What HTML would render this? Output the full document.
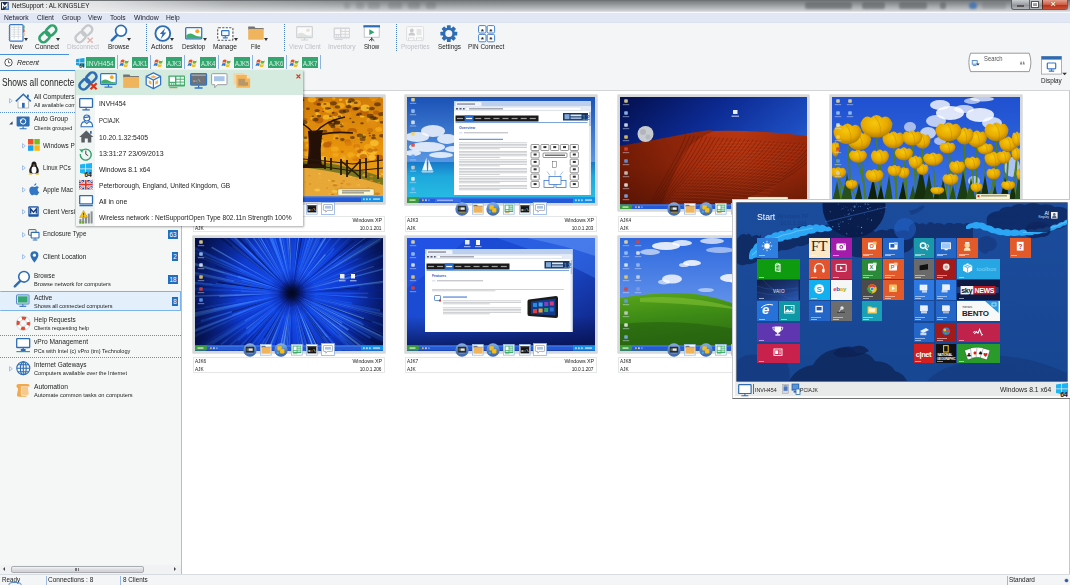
<!DOCTYPE html>
<html>
<head>
<meta charset="utf-8">
<title>NetSupport : AL KINGSLEY</title>
<style>
*{box-sizing:border-box;margin:0;padding:0}
html,body{width:1070px;height:585px;overflow:hidden}
body{position:relative;background:#f4f5f7;font-family:"Liberation Sans",sans-serif;font-size:6.5px;color:#222;line-height:1}
.abs{position:absolute}
svg{position:absolute;overflow:visible}
#title{left:0;top:0;width:1070px;height:12px;background:linear-gradient(180deg,#666a6d 0,#7e8184 12%,#8f9294 32%,#aeb1b3 62%,#cacccf 88%,#e4e6e8 100%)}
#title .glow{left:0;top:1.3px;width:420px;height:10.7px;background:linear-gradient(90deg,rgba(240,241,243,.96) 0,rgba(236,238,240,.88) 100px,rgba(226,228,230,.38) 230px,rgba(220,222,224,0) 420px)}
#title .t{left:13px;top:2.5px;font-size:7px;color:#111;letter-spacing:-.25px;white-space:nowrap}
.blob{position:absolute;top:2px;height:7px;background:#5c5f61;filter:blur(1.2px);border-radius:2px}
#menu{left:0;top:12px;width:1070px;height:11px;background:#e1e7f5;border-top:1px solid #f6f8fc;border-bottom:1px solid #dde3ee}
#menu span{position:absolute;top:1.5px;font-size:6.6px;color:#1b1b2a;letter-spacing:-.1px}
#tool{left:0;top:23px;width:1070px;height:30px}
.tl{position:absolute;top:21.5px;font-size:6.4px;color:#222;text-align:center;width:50px;margin-left:-25px;white-space:nowrap;letter-spacing:-.1px}
.tl.dis{color:#bdbfc6}
.sep{position:absolute;top:1px;width:0;height:27px;border-left:1px dotted #4a7fc0}
.dd{position:absolute;width:0;height:0;border-left:2.7px solid transparent;border-right:2.7px solid transparent;border-top:3.3px solid #333}
#left{left:0;top:71px;width:181px;height:494px;background:#f5f7f7}
#main{left:181px;top:90.2px;width:889px;height:483.8px;background:#fff;border-top:1.7px solid #d2d5d8;border-left:1.5px solid #b9bdc2;border-right:1px solid #c3c7cc}
#status{left:0;top:574px;width:1070px;height:11px;background:#f3f5f6;border-top:1px solid #d8dbdf}
#status span{position:absolute;top:1.5px;font-size:6.5px;color:#222}
.thumb{position:absolute;width:191.6px;border:2px solid #d6d8da;background:#3060c0;overflow:hidden;box-shadow:0 0 0 .5px #c2c5c8}
.thumb svg{left:0;top:0}
.lab{position:absolute;width:191.6px;height:16px;border:1px solid #e4e6e8;background:#fff;font-size:5.8px;color:#222;letter-spacing:-.1px}
.lab i{font-style:normal;position:absolute;white-space:nowrap}
.tree{position:absolute;font-size:6.6px;color:#222;white-space:nowrap;letter-spacing:-.05px}
.tree small{display:block;font-size:5.2px;color:#222;margin-top:3.2px;letter-spacing:0}
.badge{position:absolute;left:168px;width:10px;height:9.5px;background:#1f6fc1;color:#fff;font-size:6.3px;text-align:center;line-height:9.5px}
.arr{position:absolute;width:0;height:0;border-top:2.3px solid transparent;border-bottom:2.3px solid transparent;border-left:2.6px solid #fff;filter:drop-shadow(0 0 .4px #3a6fb5) drop-shadow(0 0 .4px #3a6fb5)}
.dot{position:absolute;left:0;width:181px;height:0;border-top:1px dotted #5a8fd0}
.tab{position:absolute;top:56.5px;height:12px}
.tab b{position:absolute;top:.2px;height:11.8px;background:#33a56f;color:#e8f6ee;font-weight:normal;font-size:6.2px;line-height:10px;text-align:center;letter-spacing:-.2px}
.tabsep{position:absolute;top:55px;width:1px;height:14px;background:#8fb3e0}
#pop{left:75px;top:70px;width:228px;height:156px;background:#fff;box-shadow:1px 1px 2px rgba(0,0,0,.35);border-left:1px solid #c9d8d0}
#pop .hd{left:0;top:0;width:227px;height:24.5px;background:#d5ebe0}
#pop .col{left:0;top:24.5px;width:19px;height:131.5px;background:#f1f5f3}
#pop .r{position:absolute;left:23px;font-size:6.5px;color:#222;white-space:nowrap;letter-spacing:-.1px}
#w8{left:732.3px;top:199px;width:337.7px;height:199.7px;background:#e9eaea;border:1px solid #c6c8ca;border-bottom:1.2px solid #6e7072;border-right:none;box-shadow:inset 0 0 0 2px #fbfbfb}
#w8 .scr{left:3.7px;top:3.3px;width:330px;height:178px;overflow:hidden;background:#174a98;box-shadow:0 0 0 .6px #0c2450}
#w8 .bar{left:1px;top:182px;width:335px;height:15px;font-size:5.6px;color:#222}
</style>
</head>
<body>

<div id="title" class="abs">
<div class="blob" style="left:344px;width:6px;opacity:0.3"></div>
<div class="blob" style="left:356px;width:8px;opacity:0.3"></div>
<div class="blob" style="left:368px;width:12px;opacity:0.3"></div>
<div class="blob" style="left:388px;width:14px;opacity:0.3"></div>
<div class="blob" style="left:408px;width:12px;opacity:0.3"></div>
<div class="blob" style="left:426px;width:10px;opacity:0.3"></div>
<div class="blob" style="left:805px;width:47px;opacity:0.6"></div>
<div class="blob" style="left:862px;width:23px;opacity:0.6"></div>
<div class="blob" style="left:899px;width:28px;opacity:0.6"></div>
<div class="blob" style="left:940px;width:6px;opacity:0.6"></div>
<div class="blob" style="left:969px;width:8px;background:#3b6fb0;border-radius:4px;opacity:.8"></div>
<div class="blob" style="left:982px;width:24px;opacity:.25"></div>
<div class="abs glow"></div>
<svg style="left:1px;top:2px" width="8" height="9" viewBox="0 0 8 9"><rect x="0" y="0" width="7.600" height="8" rx=".6" fill="#1b2c4e"/><path d="M7.600 3v5H3z" fill="#2a7ad8"/><path d="M1.600 6.400V1.800l2.200 2.800 2.200-2.800v4.600" fill="none" stroke="#fff" stroke-width="1.150"/></svg>
<div class="abs" style="left:12.4px;top:1.0px;font-size:7.2px;line-height:10px;white-space:nowrap;transform-origin:0 0;transform:scaleX(0.876);color:#111">NetSupport : AL KINGSLEY</div>
<div class="abs" style="left:1011px;top:0;width:57px;height:9.5px;border:1px solid #5d6164;border-top:none;border-radius:0 0 3px 3px;background:linear-gradient(180deg,#c9cccf,#9da1a5 50%,#8a8e92 51%,#b3b7ba);overflow:hidden"><div class="abs" style="left:17px;top:0;width:1px;height:10px;background:#5d6164"></div><div class="abs" style="left:29.5px;top:0;width:26.5px;height:10px;background:linear-gradient(180deg,#e3a08f,#cf5a41 48%,#b8321a 52%,#d0573c);border-left:1px solid #5d2a22"></div><div class="abs" style="left:5px;top:5px;width:7px;height:2.2px;background:#fff;border:.5px solid #555"></div><div class="abs" style="left:20px;top:2px;width:6px;height:5px;border:1.2px solid #fff;outline:.5px solid #555"></div><div class="abs" style="left:38.5px;top:-.5px;font-size:9px;font-weight:bold;color:#fff;text-shadow:0 0 1px #400">×</div></div>
</div>
<div id="menu" class="abs">
<div class="abs" style="left:4.2px;top:0.0px;font-size:7px;line-height:10px;white-space:nowrap;transform-origin:0 0;transform:scaleX(0.962);color:#1b1b2a">Network</div>
<div class="abs" style="left:37.0px;top:0.0px;font-size:7px;line-height:10px;white-space:nowrap;transform-origin:0 0;transform:scaleX(0.939);color:#1b1b2a">Client</div>
<div class="abs" style="left:61.7px;top:0.0px;font-size:7px;line-height:10px;white-space:nowrap;transform-origin:0 0;transform:scaleX(0.966);color:#1b1b2a">Group</div>
<div class="abs" style="left:88.0px;top:0.0px;font-size:7px;line-height:10px;white-space:nowrap;transform-origin:0 0;transform:scaleX(0.917);color:#1b1b2a">View</div>
<div class="abs" style="left:109.9px;top:0.0px;font-size:7px;line-height:10px;white-space:nowrap;transform-origin:0 0;transform:scaleX(0.961);color:#1b1b2a">Tools</div>
<div class="abs" style="left:133.7px;top:0.0px;font-size:7px;line-height:10px;white-space:nowrap;transform-origin:0 0;transform:scaleX(0.992);color:#1b1b2a">Window</div>
<div class="abs" style="left:166.0px;top:0.0px;font-size:7px;line-height:10px;white-space:nowrap;transform-origin:0 0;transform:scaleX(0.952);color:#1b1b2a">Help</div>
</div>
<div id="tool" class="abs">
<div class="abs" style="left:9.8px;top:19.0px;font-size:6.8px;line-height:10px;white-space:nowrap;transform-origin:0 0;transform:scaleX(0.934);color:#222">New</div>
<div class="abs" style="left:34.7px;top:19.0px;font-size:6.8px;line-height:10px;white-space:nowrap;transform-origin:0 0;transform:scaleX(0.955);color:#222">Connect</div>
<div class="abs" style="left:66.8px;top:19.0px;font-size:6.8px;line-height:10px;white-space:nowrap;transform-origin:0 0;transform:scaleX(0.951);color:#bdbfc6">Disconnect</div>
<div class="abs" style="left:107.6px;top:19.0px;font-size:6.8px;line-height:10px;white-space:nowrap;transform-origin:0 0;transform:scaleX(0.939);color:#222">Browse</div>
<div class="abs" style="left:151.1px;top:19.0px;font-size:6.8px;line-height:10px;white-space:nowrap;transform-origin:0 0;transform:scaleX(0.982);color:#222">Actions</div>
<div class="abs" style="left:181.9px;top:19.0px;font-size:6.8px;line-height:10px;white-space:nowrap;transform-origin:0 0;transform:scaleX(0.934);color:#222">Desktop</div>
<div class="abs" style="left:213.0px;top:19.0px;font-size:6.8px;line-height:10px;white-space:nowrap;transform-origin:0 0;transform:scaleX(0.973);color:#222">Manage</div>
<div class="abs" style="left:251.0px;top:19.0px;font-size:6.8px;line-height:10px;white-space:nowrap;transform-origin:0 0;transform:scaleX(0.858);color:#222">File</div>
<div class="abs" style="left:288.9px;top:19.0px;font-size:6.8px;line-height:10px;white-space:nowrap;transform-origin:0 0;transform:scaleX(0.941);color:#bdbfc6">View Client</div>
<div class="abs" style="left:328.2px;top:19.0px;font-size:6.8px;line-height:10px;white-space:nowrap;transform-origin:0 0;transform:scaleX(0.983);color:#bdbfc6">Inventory</div>
<div class="abs" style="left:363.5px;top:19.0px;font-size:6.8px;line-height:10px;white-space:nowrap;transform-origin:0 0;transform:scaleX(0.899);color:#222">Show</div>
<div class="abs" style="left:400.5px;top:19.0px;font-size:6.8px;line-height:10px;white-space:nowrap;transform-origin:0 0;transform:scaleX(0.929);color:#bdbfc6">Properties</div>
<div class="abs" style="left:437.8px;top:19.0px;font-size:6.8px;line-height:10px;white-space:nowrap;transform-origin:0 0;transform:scaleX(0.932);color:#222">Settings</div>
<div class="abs" style="left:468.3px;top:19.0px;font-size:6.8px;line-height:10px;white-space:nowrap;transform-origin:0 0;transform:scaleX(0.939);color:#222">PIN Connect</div>
<div class="sep" style="left:146px"></div>
<div class="sep" style="left:284px"></div>
<div class="sep" style="left:395.5px"></div>
<div class="dd" style="left:24.2px;top:14.800px"></div>
<div class="dd" style="left:56px;top:14.800px"></div>
<div class="dd" style="left:126.8px;top:14.800px"></div>
<div class="dd" style="left:170.4px;top:14.800px"></div>
<div class="dd" style="left:202.6px;top:14.800px"></div>
<div class="dd" style="left:233.8px;top:14.800px"></div>
<div class="dd" style="left:264.2px;top:14.800px"></div>
<!-- New: notebook -->
<svg style="left:7.5px;top:1px" width="18" height="18" viewBox="0 0 18 18"><rect x="1.6" y=".6" width="13.4" height="16.6" rx="1" fill="#fff" stroke="#3b78c4" stroke-width="1.2"/><path d="M3.2 3.4h10.2M3.2 5.7h10.2M3.2 8h10.2M3.2 10.3h10.2M3.2 12.6h10.2M6.2 2v13M10.3 2v13" stroke="#c9ccd0" stroke-width=".6"/><rect x="15" y="1.6" width="1.6" height="3" fill="#3fae6a"/><rect x="15" y="5.2" width="1.6" height="3" fill="#e2562e"/><rect x="15" y="8.8" width="1.6" height="3" fill="#f0b450"/><path d="M.4 2.6h2M.4 4.8h2M.4 7h2M.4 9.2h2M.4 11.4h2M.4 13.6h2M.4 15.6h2" stroke="#8a8d92" stroke-width=".7"/></svg>
<!-- Connect: green chain -->
<svg style="left:36.500px;top:.5px" width="22.400" height="20.200" viewBox="0 0 20 18"><g fill="none" stroke="#2fa36b" stroke-width="2.3"><rect x="-5" y="-3.500" width="10" height="7" rx="3.300" transform="translate(6.800 11.700) rotate(-45)"/><rect x="-5" y="-3.500" width="10" height="7" rx="3.300" transform="translate(12.600 5.900) rotate(-45)"/></g></svg>
<!-- Disconnect: gray chain + x -->
<svg style="left:72.800px;top:.5px" width="22.400" height="20.200" viewBox="0 0 20 18"><g fill="none" stroke="#c6c8cc" stroke-width="2.1"><rect x="-5" y="-3.500" width="10" height="7" rx="3.300" transform="translate(6.800 11.700) rotate(-45)"/><rect x="-5" y="-3.500" width="10" height="7" rx="3.300" transform="translate(12.600 5.900) rotate(-45)"/></g><path d="M13 12.200l4.600 4.600M17.600 12.200l-4.600 4.600" stroke="#e3b4b0" stroke-width="1.300"/></svg>
<!-- Browse: magnifier -->
<svg style="left:109.500px;top:1px" width="18" height="18" viewBox="0 0 18 18"><circle cx="11" cy="6.800" r="5.400" fill="#fff" stroke="#2e6db4" stroke-width="1.700"/><path d="M7 11.200l-5.200 5.200" stroke="#2e6db4" stroke-width="2.600" stroke-linecap="round"/></svg>
<!-- Actions -->
<svg style="left:153.500px;top:2px" width="18" height="18" viewBox="0 0 18 18"><circle cx="8.800" cy="8.500" r="7.400" fill="#fff" stroke="#2e6db4" stroke-width="1.900"/><path d="M11.200 3L5.800 9h2.600l-1.800 5.200 5.800-6.600h-2.800z" fill="#2e6db4"/></svg>
<!-- Desktop -->
<svg style="left:185px;top:4px" width="18" height="13" viewBox="0 0 18 13"><rect x=".7" y=".7" width="16" height="11.200" rx=".8" fill="#fff" stroke="#3476c6" stroke-width="1.300"/><path d="M1.300 8.200q3.500-3 7.500-.4 3.500 2.300 7.300 1.600v1.900H1.300z" fill="#3fae6a"/><circle cx="12.300" cy="4.300" r="2" fill="#f4a62a"/></svg>
<!-- Manage -->
<svg style="left:217px;top:3.500px" width="18" height="15" viewBox="0 0 18 15"><rect x=".7" y=".7" width="15.200" height="12.600" rx="1" fill="#fff" stroke="#555" stroke-width="1.100" stroke-dasharray="2.200 1.300"/><rect x="4.600" y="3.600" width="7.400" height="5" rx=".6" fill="#f4f8fd" stroke="#3476c6" stroke-width="1.200"/><path d="M8.300 8.800v1.600M5.800 10.900h5" stroke="#3476c6" stroke-width="1.100"/></svg>
<!-- File -->
<svg style="left:248px;top:3px" width="17" height="15" viewBox="0 0 17 15"><path d="M.2.400h6.200l1 1.500h8.200v2H.2z" fill="#6f7276"/><rect x=".2" y="2.900" width="15.500" height="10.800" fill="#f0b45c"/></svg>
<!-- View Client (disabled) -->
<svg style="left:296px;top:3px" width="18" height="16" viewBox="0 0 18 16"><rect x=".7" y=".7" width="15.600" height="11" rx=".8" fill="#fafafa" stroke="#cfd1d4" stroke-width="1.200"/><path d="M1.500 8.200q3.500-2.600 7-.3 3.500 2 7 1.400v1.800h-14z" fill="#dfe3e0"/><circle cx="12" cy="4.200" r="1.800" fill="#e6e2da"/><path d="M8.500 11.800v1.700M5 14h7" stroke="#cfd1d4" stroke-width="1.100"/></svg>
<!-- Inventory (disabled) -->
<svg style="left:333px;top:4px" width="18" height="15" viewBox="0 0 18 15"><rect x=".6" y=".6" width="16.400" height="11" rx=".8" fill="#d4d6d9"/><rect x="2" y="2" width="5" height="5" fill="#f8f8f8"/><rect x="8.400" y="2" width="3.400" height="1.900" fill="#f8f8f8"/><rect x="12.600" y="2" width="3.400" height="1.900" fill="#f8f8f8"/><rect x="8.400" y="4.900" width="3.400" height="1.900" fill="#f8f8f8"/><rect x="12.600" y="4.900" width="3.400" height="1.900" fill="#f8f8f8"/><rect x="8.400" y="7.800" width="3.400" height="1.900" fill="#f8f8f8"/><rect x="12.600" y="7.800" width="3.400" height="1.900" fill="#f8f8f8"/><rect x="2" y="8.300" width="1.200" height="1.600" fill="#f8f8f8"/><rect x="3.900" y="8.300" width="1.200" height="1.600" fill="#f8f8f8"/><rect x="5.800" y="8.300" width="1.200" height="1.600" fill="#f8f8f8"/><rect x="1.600" y="12" width="8" height="1" fill="#d4d6d9"/></svg>
<!-- Show -->
<svg style="left:362.500px;top:2px" width="18" height="18" viewBox="0 0 18 18"><rect x="1.200" y="1.200" width="15" height="11" fill="#fff" stroke="#b5b8bc" stroke-width=".8"/><rect x=".4" y=".2" width="16.600" height="2.200" fill="#2d6cb5"/><path d="M6.300 4.300l5.200 2.900-5.200 2.900z" fill="#2fa36b"/><path d="M8.700 12.300v4M8.700 13.400l-2.600 2.400M8.700 13.400l2.600 2.400" stroke="#333" stroke-width=".9" fill="none"/></svg>
<!-- Properties (disabled) -->
<svg style="left:405.500px;top:3px" width="19" height="16" viewBox="0 0 19 16"><rect x=".6" y=".6" width="17" height="14" rx="1" fill="#fafafa" stroke="#dcdee0" stroke-width="1"/><circle cx="5.800" cy="4.500" r="1.900" fill="#c8cacd"/><path d="M2.500 9.600q0-3 3.300-3t3.300 3z" fill="#c8cacd"/><rect x="10.600" y="3" width="4.800" height="6.200" fill="#e4e5e7"/><path d="M2.500 11.800h5.500v2.500M10.500 11.800h5.500v2.500M2.500 14.300v-2.500M10.500 14.300v-2.500" stroke="#cfd1d4" stroke-width=".7" fill="none"/></svg>
<!-- Settings gear -->
<svg style="left:440px;top:2px" width="18" height="18" viewBox="0 0 18 18"><g transform="translate(8.800 8.600)"><g fill="#2e6db4"><rect x="-1.900" y="-8.400" width="3.800" height="16.800" rx=".6"/><rect x="-1.900" y="-8.400" width="3.800" height="16.800" rx=".6" transform="rotate(45)"/><rect x="-1.900" y="-8.400" width="3.800" height="16.800" rx=".6" transform="rotate(90)"/><rect x="-1.900" y="-8.400" width="3.800" height="16.800" rx=".6" transform="rotate(135)"/></g><circle r="6.200" fill="#2e6db4"/><circle r="3.500" fill="#f4f5f7"/></g></svg>
<!-- PIN connect -->
<svg style="left:477.500px;top:1.500px" width="18" height="18" viewBox="0 0 18 18"><g fill="#fff" stroke="#3476c6" stroke-width=".9"><rect x=".6" y=".6" width="7.400" height="7.400" rx="1.200"/><rect x="9.200" y=".6" width="7.400" height="7.400" rx="1.200"/><rect x=".6" y="9.400" width="7.400" height="7.400" rx="1.200"/><rect x="9.200" y="9.400" width="7.400" height="7.400" rx="1.200"/></g><g fill="#222" font-size="8" font-family="Liberation Sans,sans-serif" font-weight="bold" text-anchor="middle"><text x="4.300" y="8.600">*</text><text x="12.900" y="8.600">*</text><text x="4.300" y="17.400">*</text><text x="12.900" y="17.400">*</text></g></svg>

</div>
<div class="abs" style="left:0;top:53.5px;width:69px;height:1px;background:#4a90d9"></div>
<div class="abs" style="left:0;top:69.5px;width:75px;height:1px;background:#4a90d9"></div>
<svg style="left:4px;top:58px" width="9" height="9" viewBox="0 0 9 9"><circle cx="4.5" cy="4.5" r="3.7" fill="#fff" stroke="#444" stroke-width=".9"/><path d="M4.5 2.3v2.4h1.8" fill="none" stroke="#444" stroke-width=".8"/></svg>
<div class="abs" style="left:16.5px;top:58.0px;font-size:7.4px;line-height:10px;white-space:nowrap;transform-origin:0 0;transform:scaleX(0.938);font-style:italic;color:#222">Recent</div>
<svg style="left:75.5px;top:57.5px" width="9" height="10" viewBox="0 0 9 10"><path d="M0 1.2l3.6-.6v3.3H0zM4.1.5L8.5 0v3.9H4.1zM0 4.4h3.6v3.3L0 7.1zM4.1 4.4h4.4v3.9l-4.4-.6z" fill="#1ba1e2"/><text x="3.2" y="10" font-size="4.6" font-weight="bold" fill="#222" font-family="Liberation Sans,sans-serif">64</text></svg>
<div class="tab" style="left:85.800px;width:29.200px"><b style="left:0;width:29.200px"></b><div class="abs" style="left:1.2px;top:2.0px;font-size:6.4px;line-height:10px;white-space:nowrap;transform-origin:0 0;transform:scaleX(1.032);color:#d9f0e3">INVH454</div></div>
<div class="tabsep" style="left:116.5px"></div>
<svg style="left:120px;top:57.5px" width="10" height="10" viewBox="0 0 10 10"><path d="M1 2.2q2-1.3 3.6 0l-.7 2.6q-1.7-1.2-3.6 0z" fill="#e8502a"/><path d="M5.2 2.5q1.8 1.2 3.6 0l-.7 2.6q-1.8 1.2-3.6 0z" fill="#6ab62e"/><path d="M.2 5.6q1.9-1.2 3.6 0l-.7 2.6q-1.7-1.2-3.6 0z" fill="#2a7ad8"/><path d="M4.4 5.9q1.8 1.2 3.6 0l-.7 2.6q-1.8 1.2-3.6 0z" fill="#f4c020"/></svg>
<div class="tab" style="left:132px;width:16.300px"><b style="left:0;width:16.300px"></b><div class="abs" style="left:1.0px;top:2.0px;font-size:6.4px;line-height:10px;white-space:nowrap;transform-origin:0 0;transform:scaleX(0.935);color:#d9f0e3">AJK1</div></div>
<div class="tabsep" style="left:150.3px"></div>
<svg style="left:154px;top:57.5px" width="10" height="10" viewBox="0 0 10 10"><path d="M1 2.2q2-1.3 3.6 0l-.7 2.6q-1.7-1.2-3.6 0z" fill="#e8502a"/><path d="M5.2 2.5q1.8 1.2 3.6 0l-.7 2.6q-1.8 1.2-3.6 0z" fill="#6ab62e"/><path d="M.2 5.6q1.9-1.2 3.6 0l-.7 2.6q-1.7-1.2-3.6 0z" fill="#2a7ad8"/><path d="M4.4 5.9q1.8 1.2 3.6 0l-.7 2.6q-1.8 1.2-3.6 0z" fill="#f4c020"/></svg>
<div class="tab" style="left:166px;width:16.300px"><b style="left:0;width:16.300px"></b><div class="abs" style="left:1.0px;top:2.0px;font-size:6.4px;line-height:10px;white-space:nowrap;transform-origin:0 0;transform:scaleX(0.935);color:#d9f0e3">AJK3</div></div>
<div class="tabsep" style="left:184.3px"></div>
<svg style="left:188px;top:57.5px" width="10" height="10" viewBox="0 0 10 10"><path d="M1 2.2q2-1.3 3.6 0l-.7 2.6q-1.7-1.2-3.6 0z" fill="#e8502a"/><path d="M5.2 2.5q1.8 1.2 3.6 0l-.7 2.6q-1.8 1.2-3.6 0z" fill="#6ab62e"/><path d="M.2 5.6q1.9-1.2 3.6 0l-.7 2.6q-1.7-1.2-3.6 0z" fill="#2a7ad8"/><path d="M4.4 5.9q1.8 1.2 3.6 0l-.7 2.6q-1.8 1.2-3.6 0z" fill="#f4c020"/></svg>
<div class="tab" style="left:200px;width:16.300px"><b style="left:0;width:16.300px"></b><div class="abs" style="left:1.0px;top:2.0px;font-size:6.4px;line-height:10px;white-space:nowrap;transform-origin:0 0;transform:scaleX(0.935);color:#d9f0e3">AJK4</div></div>
<div class="tabsep" style="left:218.3px"></div>
<svg style="left:222px;top:57.5px" width="10" height="10" viewBox="0 0 10 10"><path d="M1 2.2q2-1.3 3.6 0l-.7 2.6q-1.7-1.2-3.6 0z" fill="#e8502a"/><path d="M5.2 2.5q1.8 1.2 3.6 0l-.7 2.6q-1.8 1.2-3.6 0z" fill="#6ab62e"/><path d="M.2 5.6q1.9-1.2 3.6 0l-.7 2.6q-1.7-1.2-3.6 0z" fill="#2a7ad8"/><path d="M4.4 5.9q1.8 1.2 3.6 0l-.7 2.6q-1.8 1.2-3.6 0z" fill="#f4c020"/></svg>
<div class="tab" style="left:234px;width:16.300px"><b style="left:0;width:16.300px"></b><div class="abs" style="left:1.0px;top:2.0px;font-size:6.4px;line-height:10px;white-space:nowrap;transform-origin:0 0;transform:scaleX(0.935);color:#d9f0e3">AJK5</div></div>
<div class="tabsep" style="left:252.3px"></div>
<svg style="left:256px;top:57.5px" width="10" height="10" viewBox="0 0 10 10"><path d="M1 2.2q2-1.3 3.6 0l-.7 2.6q-1.7-1.2-3.6 0z" fill="#e8502a"/><path d="M5.2 2.5q1.8 1.2 3.6 0l-.7 2.6q-1.8 1.2-3.6 0z" fill="#6ab62e"/><path d="M.2 5.6q1.9-1.2 3.6 0l-.7 2.6q-1.7-1.2-3.6 0z" fill="#2a7ad8"/><path d="M4.4 5.9q1.8 1.2 3.6 0l-.7 2.6q-1.8 1.2-3.6 0z" fill="#f4c020"/></svg>
<div class="tab" style="left:268px;width:16.300px"><b style="left:0;width:16.300px"></b><div class="abs" style="left:1.0px;top:2.0px;font-size:6.4px;line-height:10px;white-space:nowrap;transform-origin:0 0;transform:scaleX(0.935);color:#d9f0e3">AJK6</div></div>
<div class="tabsep" style="left:286.3px"></div>
<svg style="left:290px;top:57.5px" width="10" height="10" viewBox="0 0 10 10"><path d="M1 2.2q2-1.3 3.6 0l-.7 2.6q-1.7-1.2-3.6 0z" fill="#e8502a"/><path d="M5.2 2.5q1.8 1.2 3.6 0l-.7 2.6q-1.8 1.2-3.6 0z" fill="#6ab62e"/><path d="M.2 5.6q1.9-1.2 3.6 0l-.7 2.6q-1.7-1.2-3.6 0z" fill="#2a7ad8"/><path d="M4.4 5.9q1.8 1.2 3.6 0l-.7 2.6q-1.8 1.2-3.6 0z" fill="#f4c020"/></svg>
<div class="tab" style="left:302px;width:16.300px"><b style="left:0;width:16.300px"></b><div class="abs" style="left:1.0px;top:2.0px;font-size:6.4px;line-height:10px;white-space:nowrap;transform-origin:0 0;transform:scaleX(0.935);color:#d9f0e3">AJK7</div></div>
<div class="tabsep" style="left:320.3px"></div>
<svg style="left:966px;top:52px" width="68" height="21" viewBox="0 0 68 21"><path d="M4.5 1.2H63.2Q66.6 10.5 63.2 19.6H4.5Q1.2 10.5 4.5 1.2z" fill="#fff" stroke="#8e8e8e" stroke-width=".9"/><rect x="6.2" y="8.6" width="5" height="3.6" fill="#eaf2fb" stroke="#3b78c4" stroke-width=".8"/><path d="M7 13.6h3.4" stroke="#3b78c4" stroke-width=".8"/><path d="M10.3 11.6h3.4l-1.7 2z" fill="#333"/><path d="M53.8 12.6l.9-3h.9l.5 3zM56.6 12.6l.5-3h.9l.9 3z" fill="#8a8a8a"/></svg>
<div class="abs" style="left:984.2px;top:54.0px;font-size:6.6px;line-height:10px;white-space:nowrap;transform-origin:0 0;transform:scaleX(0.885);color:#555">Search</div>
<svg style="left:1040.5px;top:55.5px" width="28" height="20" viewBox="0 0 28 20"><rect x=".5" y=".5" width="20" height="17.6" fill="#fff" stroke="#a5a8ac" stroke-width=".9"/><rect x=".5" y=".3" width="20" height="3.3" fill="#2d6cb5"/><rect x="6.3" y="7" width="8.4" height="5.8" rx=".8" fill="#fff" stroke="#3476c6" stroke-width="1.2"/><path d="M10.5 13v1.6M7.8 15.1h5.4" stroke="#3476c6" stroke-width="1.1"/><path d="M21.3 16.7h4.6l-2.3 2.6z" fill="#333"/></svg>
<div class="abs" style="left:1040.7px;top:76.0px;font-size:6.8px;line-height:10px;white-space:nowrap;transform-origin:0 0;transform:scaleX(0.933);color:#222">Display</div>
<div id="left" class="abs"></div>
<div class="abs" style="left:2.3px;top:77.0px;font-size:10.6px;line-height:10px;white-space:nowrap;transform-origin:0 0;transform:scaleX(0.794);color:#222">Shows all connecte</div>
<!-- selection -->
<div class="abs" style="left:0;top:291px;width:180.500px;height:20.300px;background:#e3effb;border:1px solid #7ab4ea;border-left:none;border-radius:1px"></div>
<div class="dot" style="top:111.500px"></div>
<div class="dot" style="top:334.500px"></div>
<div class="dot" style="top:357px"></div>
<!-- arrows -->
<svg style="left:8.9px;top:97.5px" width="4" height="6" viewBox="0 0 4 6"><path d="M.5.600L3.300 2.800.5 5z" fill="#f7fafd" stroke="#8fb3e3" stroke-width=".8" stroke-linejoin="round"/></svg>
<svg style="left:8.600px;top:120.800px" width="4" height="4" viewBox="0 0 4 4"><path d="M3.600.2v3.400H.2z" fill="#3c4658"/></svg>
<svg style="left:21.9px;top:142.5px" width="4" height="6" viewBox="0 0 4 6"><path d="M.5.600L3.300 2.800.5 5z" fill="#f7fafd" stroke="#8fb3e3" stroke-width=".8" stroke-linejoin="round"/></svg>
<svg style="left:21.9px;top:164.5px" width="4" height="6" viewBox="0 0 4 6"><path d="M.5.600L3.300 2.800.5 5z" fill="#f7fafd" stroke="#8fb3e3" stroke-width=".8" stroke-linejoin="round"/></svg>
<svg style="left:21.9px;top:186.5px" width="4" height="6" viewBox="0 0 4 6"><path d="M.5.600L3.300 2.800.5 5z" fill="#f7fafd" stroke="#8fb3e3" stroke-width=".8" stroke-linejoin="round"/></svg>
<svg style="left:21.9px;top:208.5px" width="4" height="6" viewBox="0 0 4 6"><path d="M.5.600L3.300 2.800.5 5z" fill="#f7fafd" stroke="#8fb3e3" stroke-width=".8" stroke-linejoin="round"/></svg>
<svg style="left:21.9px;top:231.5px" width="4" height="6" viewBox="0 0 4 6"><path d="M.5.600L3.300 2.800.5 5z" fill="#f7fafd" stroke="#8fb3e3" stroke-width=".8" stroke-linejoin="round"/></svg>
<svg style="left:21.9px;top:253.5px" width="4" height="6" viewBox="0 0 4 6"><path d="M.5.600L3.300 2.800.5 5z" fill="#f7fafd" stroke="#8fb3e3" stroke-width=".8" stroke-linejoin="round"/></svg>
<svg style="left:8.9px;top:365.5px" width="4" height="6" viewBox="0 0 4 6"><path d="M.5.600L3.300 2.800.5 5z" fill="#f7fafd" stroke="#8fb3e3" stroke-width=".8" stroke-linejoin="round"/></svg>
<!-- All computers: house -->
<svg style="left:14.500px;top:92.500px" width="17" height="16" viewBox="0 0 17 16"><path d="M3 8v7h10.600V8" fill="#fff" stroke="#a3a6ab" stroke-width=".8"/><path d="M.8 8.400L8.300 1.200l7.500 7.200" fill="none" stroke="#2e6db4" stroke-width="1.500" stroke-linejoin="miter"/><rect x="7" y="9.800" width="2.700" height="5" fill="#2e6db4"/><rect x="12" y="1.600" width="1.800" height="3" fill="#2e6db4"/></svg>
<div class="abs" style="left:33.7px;top:92.0px;font-size:6.5px;line-height:10px;white-space:nowrap;transform-origin:0 0;transform:scaleX(0.992);">All Computers</div>
<div class="abs" style="left:33.7px;top:100.0px;font-size:5.5px;line-height:10px;white-space:nowrap;transform-origin:0 0;transform:scaleX(1.015);">All available com</div>
<!-- Auto group -->
<svg style="left:15.500px;top:115.500px" width="15" height="14" viewBox="0 0 15 14"><rect x=".6" y=".6" width="13" height="9.800" rx=".8" fill="#2e6db4"/><circle cx="7.100" cy="5.400" r="2.700" fill="none" stroke="#fff" stroke-width="1"/><path d="M3.600 3.400l.9 2.400 1.600-1.700z" fill="#fff"/><path d="M7.100 10.500v1.700M3.600 12.700h7" stroke="#2e6db4" stroke-width="1.100"/></svg>
<div class="abs" style="left:33.7px;top:114.0px;font-size:6.5px;line-height:10px;white-space:nowrap;transform-origin:0 0;transform:scaleX(1.023);">Auto Group</div>
<div class="abs" style="left:33.7px;top:123.0px;font-size:5.5px;line-height:10px;white-space:nowrap;transform-origin:0 0;transform:scaleX(0.994);">Clients grouped</div>
<!-- Windows -->
<svg style="left:27.500px;top:139px" width="12" height="12" viewBox="0 0 12 12"><rect x="0" y="0" width="5.500" height="5.500" fill="#f0502a"/><rect x="6.300" y="0" width="5.500" height="5.500" fill="#7fba1c"/><rect x="0" y="6.300" width="5.500" height="5.500" fill="#1aa4ee"/><rect x="6.300" y="6.300" width="5.500" height="5.500" fill="#fcb814"/></svg>
<div class="abs" style="left:42.7px;top:141.0px;font-size:6.5px;line-height:10px;white-space:nowrap;transform-origin:0 0;transform:scaleX(0.975);">Windows P</div>
<!-- Linux -->
<svg style="left:27.500px;top:160.500px" width="12" height="14" viewBox="0 0 12 14"><path d="M6 .4c1.800 0 2.500 1.400 2.500 3 0 1.500 2.300 3.400 2.300 6.400 0 1.800-.8 2.600-1.600 2.600H2.800c-.8 0-1.600-.8-1.600-2.600 0-3 2.300-4.900 2.300-6.400 0-1.600.7-3 2.500-3z" fill="#1c1c1c"/><ellipse cx="6" cy="9" rx="2.500" ry="3.400" fill="#fff"/><path d="M4.800 3.800h2.400L6 5z" fill="#f4b400"/><path d="M.6 13.200q1.200-2 3.200-.6.800 1-.5 1.200zM11.400 13.200q-1.200-2-3.200-.6-.8 1 .5 1.200z" fill="#f4b400"/></svg>
<div class="abs" style="left:42.7px;top:163.0px;font-size:6.5px;line-height:10px;white-space:nowrap;transform-origin:0 0;transform:scaleX(0.938);">Linux PCs</div>
<!-- Apple -->
<svg style="left:28.500px;top:183px" width="11" height="13" viewBox="0 0 11 13"><path d="M7.500 3.200c1 0 1.900.5 2.400 1.300-1.900 1.100-1.600 3.800.4 4.600-.5 1.300-1.600 3.200-2.800 3.200-.8 0-1.100-.5-2.100-.5s-1.300.5-2.100.5C1.800 12.300.3 9.400.3 7.200c0-2.300 1.500-3.600 3-3.600.9 0 1.600.5 2.100.5s1.200-.9 2.100-.9z" fill="#3476c6"/><path d="M7.400.3c.1 1.300-1 2.500-2.200 2.500C5 1.600 6.200.4 7.400.3z" fill="#3476c6"/></svg>
<div class="abs" style="left:42.7px;top:185.0px;font-size:6.5px;line-height:10px;white-space:nowrap;transform-origin:0 0;transform:scaleX(0.975);">Apple Mac</div>
<!-- Client Version -->
<svg style="left:28px;top:205.500px" width="12" height="12" viewBox="0 0 12 12"><rect x=".3" y=".3" width="10.400" height="10.400" rx="1" fill="#1d57a8"/><rect x="1.600" y="1.600" width="7.800" height="6.600" fill="#eef3fb"/><path d="M2.700 7.600V3l2.800 3.200L8.300 3v4.600" fill="none" stroke="#123c7c" stroke-width="1.300"/></svg>
<div class="abs" style="left:42.7px;top:207.0px;font-size:6.5px;line-height:10px;white-space:nowrap;transform-origin:0 0;transform:scaleX(0.975);">Client Versi</div>
<!-- Enclosure -->
<svg style="left:28px;top:228.500px" width="12" height="12" viewBox="0 0 12 12"><rect x=".6" y=".6" width="7.400" height="5.600" rx=".5" fill="#f5f7f7" stroke="#555" stroke-width=".9"/><rect x="3.200" y="3.400" width="7.800" height="5.600" rx=".5" fill="#fff" stroke="#2e6db4" stroke-width="1.100"/><path d="M7.100 9.200v1.400M4.800 11h4.600" stroke="#2e6db4" stroke-width="1"/></svg>
<div class="abs" style="left:42.7px;top:229.0px;font-size:6.5px;line-height:10px;white-space:nowrap;transform-origin:0 0;transform:scaleX(0.971);">Enclosure Type</div>
<div class="badge" style="top:229.500px">63</div>
<!-- Location -->
<svg style="left:29.500px;top:250.500px" width="9" height="12" viewBox="0 0 9 12"><path d="M4.400.3a4 4 0 0 1 4 4c0 2.600-4 7.400-4 7.400S.4 6.900.4 4.300a4 4 0 0 1 4-4z" fill="#2e6db4"/><circle cx="4.400" cy="4.200" r="1.600" fill="#f5f7f7"/></svg>
<div class="abs" style="left:42.7px;top:252.0px;font-size:6.5px;line-height:10px;white-space:nowrap;transform-origin:0 0;transform:scaleX(1.009);">Client Location</div>
<div class="badge" style="top:251.500px;left:172px;width:6px">2</div>
<!-- Browse -->
<svg style="left:13px;top:270px" width="18" height="18" viewBox="0 0 18 18"><circle cx="11" cy="6.800" r="5.300" fill="#fff" stroke="#2e6db4" stroke-width="1.600"/><path d="M7.100 11.100l-5.300 5.300" stroke="#2e6db4" stroke-width="2.500" stroke-linecap="round"/></svg>
<div class="abs" style="left:33.7px;top:271.0px;font-size:6.5px;line-height:10px;white-space:nowrap;transform-origin:0 0;transform:scaleX(0.964);">Browse</div>
<div class="abs" style="left:33.7px;top:279.0px;font-size:5.5px;line-height:10px;white-space:nowrap;transform-origin:0 0;transform:scaleX(1.034);">Browse network for computers</div>
<div class="badge" style="top:274.500px">18</div>
<!-- Active -->
<svg style="left:15.500px;top:294px" width="15" height="14" viewBox="0 0 15 14"><rect x=".6" y=".9" width="12.400" height="9.100" rx=".6" fill="#e4ecf6" stroke="#4a7fcc" stroke-width="1"/><rect x="2" y="2.300" width="9.600" height="6.300" fill="#35a872"/><path d="M6.800 10.200v1.500" stroke="#2e6db4" stroke-width="1.200"/><path d="M3.400 12.300h6.800" stroke="#2e6db4" stroke-width="1.100"/></svg>
<div class="abs" style="left:33.7px;top:293.0px;font-size:6.5px;line-height:10px;white-space:nowrap;transform-origin:0 0;transform:scaleX(1.034);">Active</div>
<div class="abs" style="left:33.7px;top:301.0px;font-size:5.5px;line-height:10px;white-space:nowrap;transform-origin:0 0;transform:scaleX(1.010);">Shows all connected computers</div>
<div class="badge" style="top:296.500px;left:172px;width:6px">8</div>
<!-- Help requests -->
<svg style="left:15.500px;top:316px" width="15" height="15" viewBox="0 0 15 15"><circle cx="7.300" cy="7.300" r="5.200" fill="none" stroke="#fff" stroke-width="3.400"/><circle cx="7.300" cy="7.300" r="5.200" fill="none" stroke="#e2492a" stroke-width="3.400" stroke-dasharray="4.080 4.080" stroke-dashoffset="2.040"/><circle cx="7.300" cy="7.300" r="7" fill="none" stroke="#b9bcc0" stroke-width=".5"/><circle cx="7.300" cy="7.300" r="3.400" fill="none" stroke="#b9bcc0" stroke-width=".5"/></svg>
<div class="abs" style="left:33.7px;top:315.0px;font-size:6.5px;line-height:10px;white-space:nowrap;transform-origin:0 0;transform:scaleX(0.978);">Help Requests</div>
<div class="abs" style="left:33.7px;top:323.0px;font-size:5.5px;line-height:10px;white-space:nowrap;transform-origin:0 0;transform:scaleX(0.983);">Clients requesting help</div>
<!-- vPro -->
<svg style="left:15.500px;top:338px" width="15" height="16" viewBox="0 0 15 16"><rect x=".7" y=".7" width="13" height="8.800" rx=".6" fill="#fff" stroke="#2e6db4" stroke-width="1.300"/><path d="M7.200 9.600v2.200" stroke="#2e6db4" stroke-width="1.200"/><rect x="4.800" y="11" width="4.800" height="2.400" fill="#2e6db4"/><path d="M.4 13.600h13.600" stroke="#2fa36b" stroke-width="1.200"/></svg>
<div class="abs" style="left:33.7px;top:337.0px;font-size:6.5px;line-height:10px;white-space:nowrap;transform-origin:0 0;transform:scaleX(1.017);">vPro Management</div>
<div class="abs" style="left:33.7px;top:346.0px;font-size:5.5px;line-height:10px;white-space:nowrap;transform-origin:0 0;transform:scaleX(1.014);">PCs with Intel (c) vPro (tm) Technology</div>
<!-- Internet gateways -->
<svg style="left:15.500px;top:361px" width="15" height="15" viewBox="0 0 15 15"><g fill="none" stroke="#2e6db4" stroke-width="1.100"><circle cx="7.300" cy="7.300" r="6.500"/><ellipse cx="7.300" cy="7.300" rx="2.900" ry="6.500"/><path d="M.8 7.300h13M1.800 3.800h11M1.800 10.800h11M7.300.8v13"/></g></svg>
<div class="abs" style="left:33.7px;top:360.0px;font-size:6.5px;line-height:10px;white-space:nowrap;transform-origin:0 0;transform:scaleX(0.993);">Internet Gateways</div>
<div class="abs" style="left:33.7px;top:368.0px;font-size:5.5px;line-height:10px;white-space:nowrap;transform-origin:0 0;transform:scaleX(1.014);">Computers available over the Internet</div>
<!-- Automation -->
<svg style="left:15px;top:383px" width="16" height="15" viewBox="0 0 16 15"><path d="M3.500 1h9.400q1.600 0 1.600 1.600v.8h-8.600v7.600q0 1.800 1.800 1.800h4.800q-1.200 1-2.400 1H3.600q-1.700 0-1.700-1.800L3.100 6 1.300 3.200Q1.300 1 3.500 1z" fill="#f0a94e"/><path d="M6.400 4l6.400 0 .9 6.300q.2 1.700-1.300 1.700H8q-1.600 0-1.600-1.700z" fill="#f7c98c"/></svg>
<div class="abs" style="left:33.7px;top:382.0px;font-size:6.5px;line-height:10px;white-space:nowrap;transform-origin:0 0;transform:scaleX(1.031);">Automation</div>
<div class="abs" style="left:33.7px;top:390.0px;font-size:5.5px;line-height:10px;white-space:nowrap;transform-origin:0 0;transform:scaleX(1.034);">Automate common tasks on computers</div>

<div class="abs" style="left:0;top:565px;width:181px;height:9px;background:#f1f2f3"></div>
<div class="abs" style="left:10.5px;top:565.5px;width:133px;height:7.5px;border:1px solid #a9acb0;border-radius:2px;background:linear-gradient(180deg,#f3f4f5,#d9dbde 55%,#cfd2d5)"></div>
<div class="abs" style="left:3px;top:567px;width:0;height:0;border-top:2px solid transparent;border-bottom:2px solid transparent;border-right:2.5px solid #444"></div>
<div class="abs" style="left:174px;top:567px;width:0;height:0;border-top:2px solid transparent;border-bottom:2px solid transparent;border-left:2.5px solid #444"></div>
<div class="abs" style="left:74.5px;top:567.5px;width:4.5px;height:3px;border-left:1px solid #777;border-right:1px solid #777"><div style="margin-left:.8px;width:1px;height:3px;background:#777"></div></div>
<div id="main" class="abs"></div>
<div class="thumb" style="left:193.0px;top:95.2px;height:109px"><svg width="188" height="105" viewBox="0 0 188 105"><defs><linearGradient id="au" x1="0" y1="0" x2="0" y2="1"><stop offset="0" stop-color="#d07c08"/><stop offset=".5" stop-color="#e8940c"/><stop offset="1" stop-color="#eaa020"/></linearGradient></defs><rect width="188" height="105" fill="url(#au)"/><ellipse cx="44.7" cy="33.7" rx="2.8" ry="2.0" fill="#e08c10" opacity=".85"/><ellipse cx="117.6" cy="4.1" rx="1.5" ry="1.1" fill="#e08c10" opacity=".85"/><ellipse cx="48.8" cy="14.5" rx="5.0" ry="3.5" fill="#e08c10" opacity=".85"/><ellipse cx="101.7" cy="34.1" rx="2.9" ry="2.0" fill="#d87c0c" opacity=".85"/><ellipse cx="43.6" cy="9.4" rx="4.7" ry="3.3" fill="#f8c030" opacity=".85"/><ellipse cx="139.4" cy="41.6" rx="1.7" ry="1.2" fill="#f2a818" opacity=".85"/><ellipse cx="56.6" cy="1.9" rx="4.5" ry="3.2" fill="#e08c10" opacity=".85"/><ellipse cx="111.8" cy="57.0" rx="2.9" ry="2.0" fill="#f8c030" opacity=".85"/><ellipse cx="74.3" cy="49.7" rx="3.1" ry="2.1" fill="#d87c0c" opacity=".85"/><ellipse cx="165.2" cy="6.0" rx="2.0" ry="1.4" fill="#c8700a" opacity=".85"/><ellipse cx="48.5" cy="41.7" rx="4.2" ry="3.0" fill="#eaa020" opacity=".85"/><ellipse cx="79.2" cy="51.7" rx="3.5" ry="2.5" fill="#f8c030" opacity=".85"/><ellipse cx="109.8" cy="56.1" rx="3.9" ry="2.7" fill="#f2a818" opacity=".85"/><ellipse cx="161.0" cy="61.4" rx="3.8" ry="2.7" fill="#d87c0c" opacity=".85"/><ellipse cx="131.3" cy="20.2" rx="3.4" ry="2.4" fill="#f6b828" opacity=".85"/><ellipse cx="134.2" cy="13.1" rx="4.4" ry="3.1" fill="#eaa020" opacity=".85"/><ellipse cx="53.6" cy="3.9" rx="4.5" ry="3.1" fill="#e08c10" opacity=".85"/><ellipse cx="16.6" cy="49.6" rx="2.9" ry="2.1" fill="#d87c0c" opacity=".85"/><ellipse cx="3.8" cy="26.5" rx="3.0" ry="2.1" fill="#f6b828" opacity=".85"/><ellipse cx="8.3" cy="38.1" rx="1.7" ry="1.2" fill="#b85e08" opacity=".85"/><ellipse cx="103.6" cy="57.2" rx="2.5" ry="1.7" fill="#c8700a" opacity=".85"/><ellipse cx="187.7" cy="19.2" rx="1.8" ry="1.2" fill="#f2a818" opacity=".85"/><ellipse cx="178.4" cy="60.2" rx="2.5" ry="1.8" fill="#eaa020" opacity=".85"/><ellipse cx="29.4" cy="2.6" rx="4.5" ry="3.2" fill="#b85e08" opacity=".85"/><ellipse cx="67.7" cy="8.6" rx="4.5" ry="3.2" fill="#f8c030" opacity=".85"/><ellipse cx="86.6" cy="32.2" rx="3.8" ry="2.6" fill="#f6b828" opacity=".85"/><ellipse cx="116.6" cy="58.3" rx="3.3" ry="2.3" fill="#f8c030" opacity=".85"/><ellipse cx="119.2" cy="44.4" rx="4.8" ry="3.3" fill="#f8c030" opacity=".85"/><ellipse cx="183.8" cy="32.3" rx="3.4" ry="2.4" fill="#f2a818" opacity=".85"/><ellipse cx="148.2" cy="61.2" rx="2.6" ry="1.8" fill="#f8c030" opacity=".85"/><ellipse cx="115.8" cy="39.2" rx="1.7" ry="1.2" fill="#b85e08" opacity=".85"/><ellipse cx="87.7" cy="42.1" rx="2.7" ry="1.9" fill="#eaa020" opacity=".85"/><ellipse cx="138.8" cy="1.4" rx="1.7" ry="1.2" fill="#f2a818" opacity=".85"/><ellipse cx="181.1" cy="15.6" rx="3.1" ry="2.2" fill="#b85e08" opacity=".85"/><ellipse cx="33.4" cy="11.5" rx="4.2" ry="2.9" fill="#eaa020" opacity=".85"/><ellipse cx="56.5" cy="23.4" rx="4.2" ry="2.9" fill="#f2a818" opacity=".85"/><ellipse cx="182.6" cy="42.4" rx="2.0" ry="1.4" fill="#c8700a" opacity=".85"/><ellipse cx="122.9" cy="16.7" rx="2.6" ry="1.9" fill="#f8c030" opacity=".85"/><ellipse cx="122.1" cy="6.0" rx="3.6" ry="2.5" fill="#b85e08" opacity=".85"/><ellipse cx="126.9" cy="13.9" rx="4.3" ry="3.0" fill="#d87c0c" opacity=".85"/><ellipse cx="15.0" cy="46.0" rx="2.3" ry="1.6" fill="#e08c10" opacity=".85"/><ellipse cx="50.9" cy="48.8" rx="1.6" ry="1.1" fill="#c8700a" opacity=".85"/><ellipse cx="59.2" cy="51.8" rx="3.5" ry="2.5" fill="#eaa020" opacity=".85"/><ellipse cx="63.9" cy="51.3" rx="1.8" ry="1.3" fill="#b85e08" opacity=".85"/><ellipse cx="110.8" cy="26.1" rx="3.3" ry="2.3" fill="#eaa020" opacity=".85"/><ellipse cx="87.4" cy="39.3" rx="2.5" ry="1.8" fill="#f8c030" opacity=".85"/><ellipse cx="6.7" cy="25.6" rx="2.2" ry="1.5" fill="#e08c10" opacity=".85"/><ellipse cx="177.3" cy="54.6" rx="5.0" ry="3.5" fill="#f8c030" opacity=".85"/><ellipse cx="105.1" cy="61.1" rx="4.0" ry="2.8" fill="#f2a818" opacity=".85"/><ellipse cx="140.2" cy="51.9" rx="3.8" ry="2.7" fill="#eaa020" opacity=".85"/><ellipse cx="102.2" cy="55.2" rx="4.5" ry="3.2" fill="#eaa020" opacity=".85"/><ellipse cx="22.6" cy="15.2" rx="1.6" ry="1.1" fill="#c8700a" opacity=".85"/><ellipse cx="168.6" cy="55.8" rx="3.5" ry="2.5" fill="#f2a818" opacity=".85"/><ellipse cx="90.4" cy="7.5" rx="3.3" ry="2.3" fill="#c8700a" opacity=".85"/><ellipse cx="124.6" cy="32.5" rx="2.9" ry="2.1" fill="#f6b828" opacity=".85"/><ellipse cx="64.2" cy="15.7" rx="4.5" ry="3.2" fill="#e08c10" opacity=".85"/><ellipse cx="152.6" cy="3.8" rx="2.3" ry="1.6" fill="#f6b828" opacity=".85"/><ellipse cx="100.5" cy="50.6" rx="2.1" ry="1.5" fill="#eaa020" opacity=".85"/><ellipse cx="173.3" cy="50.0" rx="4.4" ry="3.1" fill="#f2a818" opacity=".85"/><ellipse cx="91.7" cy="35.4" rx="2.9" ry="2.0" fill="#eaa020" opacity=".85"/><ellipse cx="46.7" cy="38.3" rx="3.3" ry="2.3" fill="#f2a818" opacity=".85"/><ellipse cx="88.9" cy="48.1" rx="1.5" ry="1.1" fill="#f2a818" opacity=".85"/><ellipse cx="145.7" cy="2.9" rx="1.7" ry="1.2" fill="#e08c10" opacity=".85"/><ellipse cx="183.2" cy="53.0" rx="1.8" ry="1.3" fill="#e08c10" opacity=".85"/><ellipse cx="59.4" cy="19.5" rx="2.7" ry="1.9" fill="#f8c030" opacity=".85"/><ellipse cx="110.3" cy="22.4" rx="2.2" ry="1.5" fill="#b85e08" opacity=".85"/><ellipse cx="80.6" cy="7.9" rx="1.5" ry="1.1" fill="#f8c030" opacity=".85"/><ellipse cx="149.5" cy="35.1" rx="1.7" ry="1.2" fill="#e08c10" opacity=".85"/><ellipse cx="113.6" cy="48.5" rx="2.8" ry="2.0" fill="#f2a818" opacity=".85"/><ellipse cx="117.1" cy="26.8" rx="2.8" ry="2.0" fill="#e08c10" opacity=".85"/><ellipse cx="142.9" cy="19.5" rx="4.8" ry="3.4" fill="#f8c030" opacity=".85"/><ellipse cx="86.6" cy="15.2" rx="3.4" ry="2.4" fill="#f6b828" opacity=".85"/><ellipse cx="151.0" cy="13.9" rx="2.0" ry="1.4" fill="#f2a818" opacity=".85"/><ellipse cx="176.1" cy="23.2" rx="4.6" ry="3.2" fill="#eaa020" opacity=".85"/><ellipse cx="22.8" cy="42.8" rx="4.8" ry="3.4" fill="#f8c030" opacity=".85"/><ellipse cx="125.5" cy="45.5" rx="3.5" ry="2.4" fill="#f6b828" opacity=".85"/><ellipse cx="152.6" cy="44.4" rx="3.2" ry="2.2" fill="#c8700a" opacity=".85"/><ellipse cx="145.6" cy="2.7" rx="1.8" ry="1.3" fill="#f6b828" opacity=".85"/><ellipse cx="123.9" cy="23.3" rx="4.4" ry="3.1" fill="#b85e08" opacity=".85"/><ellipse cx="158.2" cy="7.5" rx="4.5" ry="3.1" fill="#e08c10" opacity=".85"/><ellipse cx="157.2" cy="59.0" rx="3.5" ry="2.5" fill="#f6b828" opacity=".85"/><ellipse cx="6.8" cy="47.6" rx="3.3" ry="2.3" fill="#c8700a" opacity=".85"/><ellipse cx="20.1" cy="46.4" rx="4.8" ry="3.3" fill="#f2a818" opacity=".85"/><ellipse cx="103.4" cy="53.9" rx="2.1" ry="1.5" fill="#f6b828" opacity=".85"/><ellipse cx="45.5" cy="11.1" rx="2.4" ry="1.7" fill="#f8c030" opacity=".85"/><ellipse cx="47.5" cy="37.2" rx="4.8" ry="3.3" fill="#f8c030" opacity=".85"/><ellipse cx="181.7" cy="23.3" rx="2.3" ry="1.6" fill="#f8c030" opacity=".85"/><ellipse cx="158.6" cy="60.0" rx="3.0" ry="2.1" fill="#e08c10" opacity=".85"/><ellipse cx="29.4" cy="24.9" rx="4.6" ry="3.2" fill="#d87c0c" opacity=".85"/><ellipse cx="18.0" cy="46.4" rx="4.7" ry="3.3" fill="#e08c10" opacity=".85"/><ellipse cx="110.3" cy="53.2" rx="2.0" ry="1.4" fill="#c8700a" opacity=".85"/><ellipse cx="27.6" cy="32.0" rx="4.8" ry="3.3" fill="#eaa020" opacity=".85"/><ellipse cx="126.2" cy="53.0" rx="3.6" ry="2.5" fill="#eaa020" opacity=".85"/><ellipse cx="167.2" cy="19.0" rx="2.4" ry="1.7" fill="#f8c030" opacity=".85"/><ellipse cx="37.7" cy="35.3" rx="2.3" ry="1.6" fill="#e08c10" opacity=".85"/><ellipse cx="145.6" cy="8.9" rx="5.0" ry="3.5" fill="#e08c10" opacity=".85"/><ellipse cx="131.9" cy="12.8" rx="3.5" ry="2.5" fill="#f2a818" opacity=".85"/><ellipse cx="90.5" cy="44.7" rx="4.5" ry="3.1" fill="#f8c030" opacity=".85"/><ellipse cx="147.2" cy="54.7" rx="1.7" ry="1.2" fill="#c8700a" opacity=".85"/><ellipse cx="167.5" cy="40.2" rx="4.2" ry="3.0" fill="#f6b828" opacity=".85"/><ellipse cx="180.2" cy="52.9" rx="2.3" ry="1.6" fill="#c8700a" opacity=".85"/><ellipse cx="145.9" cy="8.5" rx="3.7" ry="2.6" fill="#f2a818" opacity=".85"/><ellipse cx="169.2" cy="15.8" rx="4.5" ry="3.2" fill="#b85e08" opacity=".85"/><ellipse cx="34.5" cy="5.6" rx="4.3" ry="3.0" fill="#f6b828" opacity=".85"/><ellipse cx="17.4" cy="51.7" rx="2.5" ry="1.8" fill="#b85e08" opacity=".85"/><ellipse cx="85.0" cy="45.5" rx="2.7" ry="1.9" fill="#f2a818" opacity=".85"/><ellipse cx="62.9" cy="27.0" rx="3.2" ry="2.2" fill="#c8700a" opacity=".85"/><ellipse cx="121.1" cy="46.0" rx="3.2" ry="2.3" fill="#d87c0c" opacity=".85"/><ellipse cx="102.3" cy="7.4" rx="2.5" ry="1.7" fill="#f8c030" opacity=".85"/><ellipse cx="21.2" cy="55.0" rx="4.7" ry="3.3" fill="#f6b828" opacity=".85"/><ellipse cx="99.2" cy="43.4" rx="3.9" ry="2.7" fill="#b85e08" opacity=".85"/><ellipse cx="142.4" cy="18.3" rx="3.9" ry="2.7" fill="#eaa020" opacity=".85"/><ellipse cx="20.1" cy="58.6" rx="2.7" ry="1.9" fill="#f6b828" opacity=".85"/><ellipse cx="125.4" cy="31.5" rx="1.7" ry="1.2" fill="#eaa020" opacity=".85"/><ellipse cx="127.6" cy="35.1" rx="2.1" ry="1.5" fill="#d87c0c" opacity=".85"/><ellipse cx="33.7" cy="55.2" rx="3.8" ry="2.7" fill="#f6b828" opacity=".85"/><ellipse cx="20.3" cy="34.7" rx="4.7" ry="3.3" fill="#f8c030" opacity=".85"/><ellipse cx="104.3" cy="40.1" rx="3.1" ry="2.2" fill="#eaa020" opacity=".85"/><ellipse cx="147.1" cy="43.7" rx="1.9" ry="1.3" fill="#d87c0c" opacity=".85"/><ellipse cx="141.8" cy="33.7" rx="4.1" ry="2.9" fill="#b85e08" opacity=".85"/><ellipse cx="18.8" cy="16.8" rx="1.7" ry="1.2" fill="#d87c0c" opacity=".85"/><ellipse cx="7.9" cy="31.3" rx="2.4" ry="1.7" fill="#b85e08" opacity=".85"/><ellipse cx="164.5" cy="58.6" rx="3.1" ry="2.1" fill="#f6b828" opacity=".85"/><ellipse cx="66.3" cy="52.5" rx="1.9" ry="1.3" fill="#eaa020" opacity=".85"/><ellipse cx="110.9" cy="42.3" rx="3.5" ry="2.4" fill="#f6b828" opacity=".85"/><ellipse cx="34.8" cy="11.7" rx="3.0" ry="2.1" fill="#f8c030" opacity=".85"/><ellipse cx="153.4" cy="46.4" rx="3.6" ry="2.5" fill="#d87c0c" opacity=".85"/><ellipse cx="161.6" cy="49.5" rx="3.4" ry="2.4" fill="#d87c0c" opacity=".85"/><ellipse cx="106.9" cy="12.5" rx="2.4" ry="1.7" fill="#eaa020" opacity=".85"/><ellipse cx="5.7" cy="49.8" rx="4.6" ry="3.2" fill="#f8c030" opacity=".85"/><ellipse cx="59.4" cy="56.2" rx="2.6" ry="1.8" fill="#e08c10" opacity=".85"/><ellipse cx="183.7" cy="42.6" rx="2.5" ry="1.8" fill="#e08c10" opacity=".85"/><ellipse cx="5.7" cy="11.8" rx="3.7" ry="2.6" fill="#f6b828" opacity=".85"/><ellipse cx="144.8" cy="41.0" rx="3.2" ry="2.3" fill="#e08c10" opacity=".85"/><ellipse cx="37.4" cy="48.5" rx="2.2" ry="1.6" fill="#e08c10" opacity=".85"/><ellipse cx="21.0" cy="17.6" rx="3.8" ry="2.7" fill="#d87c0c" opacity=".85"/><ellipse cx="25.5" cy="49.1" rx="3.7" ry="2.6" fill="#f2a818" opacity=".85"/><ellipse cx="4.8" cy="38.3" rx="3.3" ry="2.3" fill="#e08c10" opacity=".85"/><ellipse cx="101.3" cy="57.6" rx="2.6" ry="1.8" fill="#b85e08" opacity=".85"/><ellipse cx="130.6" cy="8.3" rx="4.5" ry="3.2" fill="#f2a818" opacity=".85"/><ellipse cx="134.6" cy="45.9" rx="2.7" ry="1.9" fill="#c8700a" opacity=".85"/><ellipse cx="175.2" cy="53.4" rx="3.0" ry="2.1" fill="#c8700a" opacity=".85"/><ellipse cx="91.2" cy="6.8" rx="1.6" ry="1.2" fill="#f6b828" opacity=".85"/><ellipse cx="158.9" cy="43.8" rx="2.9" ry="2.0" fill="#e08c10" opacity=".85"/><ellipse cx="131.5" cy="33.3" rx="3.0" ry="2.1" fill="#e08c10" opacity=".85"/><ellipse cx="57.3" cy="28.8" rx="4.1" ry="2.9" fill="#f8c030" opacity=".85"/><ellipse cx="82.4" cy="28.2" rx="1.6" ry="1.1" fill="#eaa020" opacity=".85"/><ellipse cx="69.0" cy="23.0" rx="3.4" ry="2.3" fill="#f8c030" opacity=".85"/><ellipse cx="42.1" cy="0.2" rx="2.2" ry="1.6" fill="#b85e08" opacity=".85"/><ellipse cx="27.0" cy="28.5" rx="2.2" ry="1.5" fill="#c8700a" opacity=".85"/><ellipse cx="4.2" cy="36.2" rx="3.3" ry="2.3" fill="#f2a818" opacity=".85"/><ellipse cx="26.2" cy="37.7" rx="3.0" ry="2.1" fill="#d87c0c" opacity=".85"/><ellipse cx="11.2" cy="1.4" rx="3.1" ry="2.1" fill="#f8c030" opacity=".85"/><ellipse cx="6.2" cy="44.3" rx="2.3" ry="1.6" fill="#f2a818" opacity=".85"/><ellipse cx="74.6" cy="1.7" rx="4.9" ry="3.4" fill="#c8700a" opacity=".85"/><ellipse cx="45.4" cy="24.1" rx="2.2" ry="1.5" fill="#b85e08" opacity=".85"/><ellipse cx="117.0" cy="21.5" rx="1.9" ry="1.4" fill="#f2a818" opacity=".85"/><ellipse cx="151.8" cy="18.0" rx="4.9" ry="3.5" fill="#e08c10" opacity=".85"/><ellipse cx="148.4" cy="59.6" rx="3.2" ry="2.2" fill="#eaa020" opacity=".85"/><ellipse cx="5.7" cy="20.9" rx="5.0" ry="3.5" fill="#b85e08" opacity=".85"/><ellipse cx="17.6" cy="42.3" rx="4.9" ry="3.4" fill="#f2a818" opacity=".85"/><ellipse cx="19.7" cy="42.2" rx="1.6" ry="1.1" fill="#f2a818" opacity=".85"/><ellipse cx="90.6" cy="11.7" rx="3.3" ry="2.3" fill="#b85e08" opacity=".85"/><ellipse cx="37.7" cy="60.4" rx="3.2" ry="2.2" fill="#e08c10" opacity=".85"/><ellipse cx="172.5" cy="58.3" rx="1.6" ry="1.1" fill="#eaa020" opacity=".85"/><ellipse cx="141.3" cy="39.2" rx="2.9" ry="2.0" fill="#eaa020" opacity=".85"/><ellipse cx="34.6" cy="25.6" rx="3.3" ry="2.3" fill="#b85e08" opacity=".85"/><ellipse cx="100.9" cy="48.3" rx="2.9" ry="2.0" fill="#f8c030" opacity=".85"/><ellipse cx="157.1" cy="34.3" rx="4.7" ry="3.3" fill="#b85e08" opacity=".85"/><ellipse cx="150.7" cy="27.2" rx="3.1" ry="2.1" fill="#e08c10" opacity=".85"/><ellipse cx="64.9" cy="50.9" rx="3.3" ry="2.3" fill="#f8c030" opacity=".85"/><ellipse cx="178.5" cy="2.6" rx="2.1" ry="1.5" fill="#f2a818" opacity=".85"/><ellipse cx="154.7" cy="5.7" rx="3.9" ry="2.7" fill="#f6b828" opacity=".85"/><ellipse cx="60.2" cy="37.2" rx="4.3" ry="3.0" fill="#f2a818" opacity=".85"/><ellipse cx="165.2" cy="54.1" rx="3.1" ry="2.2" fill="#b85e08" opacity=".85"/><ellipse cx="187.4" cy="0.1" rx="2.2" ry="1.5" fill="#f6b828" opacity=".85"/><ellipse cx="63.6" cy="19.3" rx="3.1" ry="2.2" fill="#c8700a" opacity=".85"/><ellipse cx="45.2" cy="3.0" rx="2.0" ry="1.4" fill="#d87c0c" opacity=".85"/><ellipse cx="110.1" cy="0.7" rx="2.3" ry="1.6" fill="#c8700a" opacity=".85"/><ellipse cx="41.4" cy="34.9" rx="3.0" ry="2.1" fill="#b85e08" opacity=".85"/><ellipse cx="148.3" cy="33.2" rx="2.2" ry="1.5" fill="#d87c0c" opacity=".85"/><ellipse cx="117.0" cy="2.6" rx="4.3" ry="3.0" fill="#f2a818" opacity=".85"/><ellipse cx="161.5" cy="6.3" rx="4.8" ry="3.4" fill="#eaa020" opacity=".85"/><ellipse cx="16.1" cy="28.8" rx="2.3" ry="1.6" fill="#f6b828" opacity=".85"/><ellipse cx="120.7" cy="47.2" rx="4.6" ry="3.2" fill="#b85e08" opacity=".85"/><ellipse cx="75.7" cy="41.0" rx="4.2" ry="3.0" fill="#eaa020" opacity=".85"/><ellipse cx="157.1" cy="36.9" rx="4.4" ry="3.0" fill="#c8700a" opacity=".85"/><ellipse cx="22.0" cy="0.5" rx="2.5" ry="1.8" fill="#f6b828" opacity=".85"/><ellipse cx="64.2" cy="11.9" rx="4.1" ry="2.9" fill="#b85e08" opacity=".85"/><ellipse cx="79.5" cy="40.2" rx="3.6" ry="2.5" fill="#c8700a" opacity=".85"/><ellipse cx="47.0" cy="52.0" rx="1.7" ry="1.2" fill="#c8700a" opacity=".85"/><ellipse cx="81.0" cy="5.2" rx="2.3" ry="1.6" fill="#d87c0c" opacity=".85"/><ellipse cx="140.9" cy="12.8" rx="2.3" ry="1.6" fill="#e08c10" opacity=".85"/><ellipse cx="175.1" cy="33.2" rx="3.0" ry="2.1" fill="#c8700a" opacity=".85"/><ellipse cx="169.8" cy="58.9" rx="3.2" ry="2.2" fill="#f8c030" opacity=".85"/><ellipse cx="88.2" cy="36.4" rx="1.6" ry="1.1" fill="#f2a818" opacity=".85"/><ellipse cx="34.7" cy="5.9" rx="4.0" ry="2.8" fill="#eaa020" opacity=".85"/><ellipse cx="94.7" cy="3.8" rx="3.2" ry="2.2" fill="#c8700a" opacity=".85"/><ellipse cx="140.1" cy="17.1" rx="3.0" ry="2.1" fill="#b85e08" opacity=".85"/><ellipse cx="88.0" cy="12.2" rx="4.2" ry="3.0" fill="#d87c0c" opacity=".85"/><ellipse cx="19.4" cy="18.6" rx="2.9" ry="2.1" fill="#f6b828" opacity=".85"/><ellipse cx="38.7" cy="30.2" rx="4.3" ry="3.0" fill="#eaa020" opacity=".85"/><ellipse cx="183.6" cy="60.7" rx="4.6" ry="3.2" fill="#b85e08" opacity=".85"/><ellipse cx="177.2" cy="26.7" rx="4.8" ry="3.4" fill="#e08c10" opacity=".85"/><ellipse cx="98.9" cy="33.6" rx="2.8" ry="1.9" fill="#eaa020" opacity=".85"/><ellipse cx="53.6" cy="28.7" rx="4.6" ry="3.2" fill="#eaa020" opacity=".85"/><ellipse cx="140.5" cy="57.7" rx="3.3" ry="2.3" fill="#f2a818" opacity=".85"/><ellipse cx="24.7" cy="32.9" rx="3.4" ry="2.4" fill="#d87c0c" opacity=".85"/><ellipse cx="178.6" cy="0.1" rx="4.9" ry="3.5" fill="#e08c10" opacity=".85"/><ellipse cx="66.7" cy="59.9" rx="2.8" ry="1.9" fill="#f2a818" opacity=".85"/><ellipse cx="92.2" cy="14.8" rx="2.5" ry="1.7" fill="#b85e08" opacity=".85"/><ellipse cx="157.1" cy="37.4" rx="4.3" ry="3.0" fill="#e08c10" opacity=".85"/><ellipse cx="58.6" cy="15.3" rx="4.3" ry="3.0" fill="#f8c030" opacity=".85"/><ellipse cx="135.9" cy="21.1" rx="1.6" ry="1.1" fill="#f2a818" opacity=".85"/><ellipse cx="118.0" cy="41.9" rx="4.7" ry="3.3" fill="#c8700a" opacity=".85"/><ellipse cx="179.3" cy="46.1" rx="4.4" ry="3.1" fill="#f8c030" opacity=".85"/><ellipse cx="95.7" cy="51.5" rx="3.4" ry="2.4" fill="#eaa020" opacity=".85"/><ellipse cx="3.1" cy="2.8" rx="3.2" ry="2.2" fill="#f2a818" opacity=".85"/><ellipse cx="168.6" cy="56.2" rx="3.1" ry="2.2" fill="#f8c030" opacity=".85"/><ellipse cx="69.8" cy="39.2" rx="2.5" ry="1.8" fill="#f6b828" opacity=".85"/><ellipse cx="128.6" cy="61.5" rx="3.4" ry="2.4" fill="#f8c030" opacity=".85"/><ellipse cx="145.5" cy="27.5" rx="2.5" ry="1.7" fill="#eaa020" opacity=".85"/><ellipse cx="85.1" cy="59.5" rx="2.0" ry="1.4" fill="#b85e08" opacity=".85"/><ellipse cx="26.3" cy="2.3" rx="3.2" ry="2.2" fill="#c8700a" opacity=".85"/><ellipse cx="155.6" cy="57.7" rx="3.6" ry="2.6" fill="#f2a818" opacity=".85"/><ellipse cx="59.5" cy="37.1" rx="1.9" ry="1.3" fill="#d87c0c" opacity=".85"/><ellipse cx="52.6" cy="44.0" rx="4.7" ry="3.3" fill="#f6b828" opacity=".85"/><ellipse cx="81.8" cy="4.7" rx="1.6" ry="1.1" fill="#e08c10" opacity=".85"/><ellipse cx="168.4" cy="59.5" rx="3.8" ry="2.6" fill="#c8700a" opacity=".85"/><ellipse cx="58.5" cy="21.4" rx="3.8" ry="2.7" fill="#f8c030" opacity=".85"/><ellipse cx="59.4" cy="16.8" rx="4.8" ry="3.4" fill="#b85e08" opacity=".85"/><ellipse cx="59.7" cy="24.3" rx="2.5" ry="1.7" fill="#d87c0c" opacity=".85"/><ellipse cx="78.5" cy="25.6" rx="4.6" ry="3.3" fill="#e08c10" opacity=".85"/><ellipse cx="43.2" cy="12.4" rx="1.8" ry="1.2" fill="#f6b828" opacity=".85"/><ellipse cx="139.7" cy="52.0" rx="3.7" ry="2.6" fill="#f2a818" opacity=".85"/><ellipse cx="177.1" cy="60.4" rx="3.9" ry="2.7" fill="#f8c030" opacity=".85"/><ellipse cx="50.3" cy="29.9" rx="2.4" ry="1.7" fill="#f2a818" opacity=".85"/><ellipse cx="32.8" cy="30.2" rx="2.1" ry="1.5" fill="#d87c0c" opacity=".85"/><ellipse cx="170.2" cy="11.0" rx="5.0" ry="3.5" fill="#f8c030" opacity=".85"/><ellipse cx="121.6" cy="8.8" rx="1.7" ry="1.2" fill="#d87c0c" opacity=".85"/><ellipse cx="58.5" cy="40.2" rx="2.0" ry="1.4" fill="#d87c0c" opacity=".85"/><ellipse cx="9.2" cy="59.6" rx="3.4" ry="2.4" fill="#f8c030" opacity=".85"/><ellipse cx="146.4" cy="26.9" rx="2.1" ry="1.5" fill="#f2a818" opacity=".85"/><ellipse cx="52.8" cy="8.1" rx="2.0" ry="1.4" fill="#d87c0c" opacity=".85"/><ellipse cx="72.1" cy="58.1" rx="3.6" ry="2.5" fill="#c8700a" opacity=".85"/><ellipse cx="1.4" cy="23.0" rx="2.0" ry="1.4" fill="#e08c10" opacity=".85"/><ellipse cx="46.2" cy="22.0" rx="4.8" ry="3.4" fill="#e08c10" opacity=".85"/><ellipse cx="19.5" cy="52.5" rx="3.2" ry="2.2" fill="#b85e08" opacity=".85"/><ellipse cx="99.8" cy="53.0" rx="3.0" ry="2.1" fill="#f8c030" opacity=".85"/><ellipse cx="87.2" cy="33.4" rx="3.0" ry="2.1" fill="#e08c10" opacity=".85"/><ellipse cx="156.6" cy="12.4" rx="3.6" ry="2.5" fill="#d87c0c" opacity=".85"/><ellipse cx="56.5" cy="53.2" rx="4.9" ry="3.4" fill="#b85e08" opacity=".85"/><ellipse cx="50.0" cy="12.5" rx="1.7" ry="1.2" fill="#f2a818" opacity=".85"/><ellipse cx="76.9" cy="54.1" rx="1.9" ry="1.3" fill="#f2a818" opacity=".85"/><ellipse cx="29.7" cy="7.6" rx="2.9" ry="2.0" fill="#b85e08" opacity=".85"/><ellipse cx="98.7" cy="47.5" rx="1.8" ry="1.3" fill="#e08c10" opacity=".85"/><ellipse cx="61.3" cy="36.6" rx="2.3" ry="1.6" fill="#e08c10" opacity=".85"/><ellipse cx="95.2" cy="23.2" rx="2.6" ry="1.8" fill="#b85e08" opacity=".85"/><ellipse cx="132.1" cy="47.8" rx="4.0" ry="2.8" fill="#b85e08" opacity=".85"/><ellipse cx="162.1" cy="51.8" rx="2.5" ry="1.8" fill="#eaa020" opacity=".85"/><ellipse cx="123.7" cy="7.4" rx="2.3" ry="1.4" fill="#3a1c04" opacity=".6"/><ellipse cx="164.4" cy="17.0" rx="2.6" ry="1.6" fill="#3a1c04" opacity=".6"/><ellipse cx="124.9" cy="44.5" rx="2.1" ry="1.3" fill="#3a1c04" opacity=".6"/><ellipse cx="142.1" cy="25.4" rx="3.2" ry="1.9" fill="#3a1c04" opacity=".6"/><ellipse cx="186.8" cy="25.3" rx="2.1" ry="1.3" fill="#3a1c04" opacity=".6"/><ellipse cx="154.4" cy="5.0" rx="2.1" ry="1.2" fill="#3a1c04" opacity=".6"/><ellipse cx="174.6" cy="36.2" rx="1.1" ry="0.7" fill="#3a1c04" opacity=".6"/><ellipse cx="175.2" cy="18.9" rx="3.5" ry="2.1" fill="#3a1c04" opacity=".6"/><ellipse cx="132.3" cy="11.4" rx="2.4" ry="1.4" fill="#3a1c04" opacity=".6"/><ellipse cx="177.8" cy="21.0" rx="3.2" ry="1.9" fill="#3a1c04" opacity=".6"/><ellipse cx="162.6" cy="17.9" rx="1.8" ry="1.1" fill="#3a1c04" opacity=".6"/><ellipse cx="144.5" cy="19.6" rx="1.9" ry="1.2" fill="#3a1c04" opacity=".6"/><ellipse cx="157.4" cy="40.5" rx="2.5" ry="1.5" fill="#3a1c04" opacity=".6"/><ellipse cx="112.9" cy="11.7" rx="1.9" ry="1.2" fill="#3a1c04" opacity=".6"/><ellipse cx="154.1" cy="8.1" rx="1.2" ry="0.7" fill="#3a1c04" opacity=".6"/><ellipse cx="128.2" cy="14.5" rx="1.1" ry="0.6" fill="#3a1c04" opacity=".6"/><ellipse cx="147.4" cy="42.5" rx="2.3" ry="1.4" fill="#3a1c04" opacity=".6"/><ellipse cx="164.9" cy="38.5" rx="3.1" ry="1.9" fill="#3a1c04" opacity=".6"/><ellipse cx="180.3" cy="21.4" rx="2.7" ry="1.6" fill="#3a1c04" opacity=".6"/><ellipse cx="110.6" cy="40.7" rx="1.9" ry="1.2" fill="#3a1c04" opacity=".6"/><ellipse cx="141.8" cy="41.2" rx="1.7" ry="1.0" fill="#3a1c04" opacity=".6"/><ellipse cx="116.7" cy="38.2" rx="2.5" ry="1.5" fill="#3a1c04" opacity=".6"/><ellipse cx="107.5" cy="3.2" rx="1.9" ry="1.1" fill="#3a1c04" opacity=".6"/><ellipse cx="100.7" cy="38.6" rx="1.5" ry="0.9" fill="#3a1c04" opacity=".6"/><ellipse cx="124.1" cy="19.1" rx="2.3" ry="1.4" fill="#3a1c04" opacity=".6"/><ellipse cx="138.0" cy="29.7" rx="2.6" ry="1.6" fill="#3a1c04" opacity=".6"/><ellipse cx="138.4" cy="6.3" rx="3.4" ry="2.1" fill="#3a1c04" opacity=".6"/><ellipse cx="160.8" cy="5.7" rx="2.1" ry="1.3" fill="#3a1c04" opacity=".6"/><ellipse cx="166.3" cy="45.6" rx="1.2" ry="0.7" fill="#3a1c04" opacity=".6"/><ellipse cx="100.8" cy="23.1" rx="2.1" ry="1.2" fill="#3a1c04" opacity=".6"/><ellipse cx="178.7" cy="38.4" rx="1.8" ry="1.1" fill="#3a1c04" opacity=".6"/><ellipse cx="136.9" cy="27.6" rx="3.2" ry="1.9" fill="#3a1c04" opacity=".6"/><ellipse cx="117.8" cy="19.2" rx="1.2" ry="0.7" fill="#3a1c04" opacity=".6"/><ellipse cx="156.4" cy="3.2" rx="3.3" ry="2.0" fill="#3a1c04" opacity=".6"/><ellipse cx="146.1" cy="27.3" rx="1.2" ry="0.7" fill="#3a1c04" opacity=".6"/><ellipse cx="120.4" cy="22.6" rx="3.1" ry="1.9" fill="#3a1c04" opacity=".6"/><ellipse cx="147.4" cy="14.5" rx="3.5" ry="2.1" fill="#3a1c04" opacity=".6"/><ellipse cx="158.2" cy="25.2" rx="1.5" ry="0.9" fill="#3a1c04" opacity=".6"/><ellipse cx="126.3" cy="41.6" rx="1.3" ry="0.8" fill="#3a1c04" opacity=".6"/><ellipse cx="146.8" cy="29.3" rx="1.9" ry="1.1" fill="#3a1c04" opacity=".6"/><ellipse cx="167.6" cy="42.0" rx="3.1" ry="1.9" fill="#3a1c04" opacity=".6"/><ellipse cx="164.9" cy="11.0" rx="1.1" ry="0.7" fill="#3a1c04" opacity=".6"/><ellipse cx="138.1" cy="15.7" rx="1.5" ry="0.9" fill="#3a1c04" opacity=".6"/><ellipse cx="176.7" cy="11.5" rx="3.1" ry="1.8" fill="#3a1c04" opacity=".6"/><ellipse cx="182.5" cy="7.3" rx="3.3" ry="2.0" fill="#3a1c04" opacity=".6"/><ellipse cx="134.9" cy="11.3" rx="1.5" ry="0.9" fill="#3a1c04" opacity=".6"/><ellipse cx="103.3" cy="23.9" rx="2.0" ry="1.2" fill="#3a1c04" opacity=".6"/><ellipse cx="174.9" cy="38.7" rx="1.1" ry="0.7" fill="#3a1c04" opacity=".6"/><ellipse cx="135.3" cy="19.1" rx="1.4" ry="0.9" fill="#3a1c04" opacity=".6"/><ellipse cx="122.1" cy="13.6" rx="2.7" ry="1.6" fill="#3a1c04" opacity=".6"/><ellipse cx="129.9" cy="6.9" rx="1.6" ry="0.9" fill="#3a1c04" opacity=".6"/><ellipse cx="138.9" cy="26.9" rx="1.6" ry="1.0" fill="#3a1c04" opacity=".6"/><ellipse cx="161.6" cy="11.5" rx="2.7" ry="1.6" fill="#3a1c04" opacity=".6"/><ellipse cx="153.6" cy="9.7" rx="2.9" ry="1.7" fill="#3a1c04" opacity=".6"/><ellipse cx="134.7" cy="25.7" rx="2.5" ry="1.5" fill="#3a1c04" opacity=".6"/><ellipse cx="155.3" cy="21.5" rx="1.1" ry="0.7" fill="#3a1c04" opacity=".6"/><ellipse cx="169.2" cy="39.8" rx="2.2" ry="1.3" fill="#3a1c04" opacity=".6"/><ellipse cx="151.0" cy="13.8" rx="3.2" ry="1.9" fill="#3a1c04" opacity=".6"/><ellipse cx="160.3" cy="11.8" rx="3.0" ry="1.8" fill="#3a1c04" opacity=".6"/><ellipse cx="186.8" cy="17.2" rx="3.5" ry="2.1" fill="#3a1c04" opacity=".6"/><ellipse cx="142.5" cy="9.9" rx="2.8" ry="1.7" fill="#3a1c04" opacity=".6"/><ellipse cx="129.8" cy="34.2" rx="2.5" ry="1.5" fill="#3a1c04" opacity=".6"/><ellipse cx="109.5" cy="25.2" rx="3.1" ry="1.9" fill="#3a1c04" opacity=".6"/><ellipse cx="142.0" cy="25.7" rx="3.2" ry="1.9" fill="#3a1c04" opacity=".6"/><ellipse cx="139.3" cy="23.7" rx="2.5" ry="1.5" fill="#3a1c04" opacity=".6"/><ellipse cx="172.5" cy="10.9" rx="1.2" ry="0.7" fill="#3a1c04" opacity=".6"/><ellipse cx="167.0" cy="26.3" rx="1.8" ry="1.1" fill="#3a1c04" opacity=".6"/><ellipse cx="178.5" cy="40.9" rx="2.4" ry="1.4" fill="#3a1c04" opacity=".6"/><ellipse cx="187.0" cy="38.8" rx="2.9" ry="1.7" fill="#3a1c04" opacity=".6"/><ellipse cx="125.6" cy="2.5" rx="2.7" ry="1.6" fill="#3a1c04" opacity=".6"/><path d="M0 70q60-8 110-2 40 4 78 14v25H0z" fill="#e8a838"/><path d="M100 64q30-2 88 16v8q-50-16-88-18z" fill="#5a6a1a" opacity=".8"/><ellipse cx="138.2" cy="84.1" rx="2.0" ry="1.0" fill="#c87c14" opacity=".8"/><ellipse cx="34.1" cy="82.8" rx="1.4" ry="0.7" fill="#f8c848" opacity=".8"/><ellipse cx="134.1" cy="83.5" rx="1.3" ry="0.7" fill="#f8c848" opacity=".8"/><ellipse cx="32.4" cy="85.1" rx="1.4" ry="0.7" fill="#f8c848" opacity=".8"/><ellipse cx="103.9" cy="84.4" rx="2.4" ry="1.2" fill="#c87c14" opacity=".8"/><ellipse cx="90.7" cy="80.6" rx="2.0" ry="1.0" fill="#e09420" opacity=".8"/><ellipse cx="22.4" cy="88.7" rx="1.2" ry="0.6" fill="#f8c848" opacity=".8"/><ellipse cx="163.3" cy="87.9" rx="1.8" ry="0.9" fill="#f4b838" opacity=".8"/><ellipse cx="90.1" cy="91.7" rx="1.5" ry="0.7" fill="#d88818" opacity=".8"/><ellipse cx="22.0" cy="97.8" rx="2.0" ry="1.0" fill="#f8c848" opacity=".8"/><ellipse cx="27.7" cy="84.5" rx="2.4" ry="1.2" fill="#d88818" opacity=".8"/><ellipse cx="107.4" cy="87.7" rx="1.4" ry="0.7" fill="#e09420" opacity=".8"/><ellipse cx="46.4" cy="81.9" rx="1.7" ry="0.8" fill="#d88818" opacity=".8"/><ellipse cx="169.7" cy="78.3" rx="2.4" ry="1.2" fill="#f4b838" opacity=".8"/><ellipse cx="42.4" cy="86.5" rx="2.9" ry="1.5" fill="#d88818" opacity=".8"/><ellipse cx="155.8" cy="79.3" rx="1.1" ry="0.5" fill="#f8c848" opacity=".8"/><ellipse cx="50.7" cy="87.7" rx="1.7" ry="0.9" fill="#f8c848" opacity=".8"/><ellipse cx="140.0" cy="87.6" rx="2.4" ry="1.2" fill="#f8c848" opacity=".8"/><ellipse cx="183.9" cy="85.9" rx="1.6" ry="0.8" fill="#d88818" opacity=".8"/><ellipse cx="110.1" cy="84.9" rx="1.1" ry="0.5" fill="#e09420" opacity=".8"/><ellipse cx="81.1" cy="76.0" rx="2.6" ry="1.3" fill="#e09420" opacity=".8"/><ellipse cx="94.9" cy="97.9" rx="2.7" ry="1.3" fill="#d88818" opacity=".8"/><ellipse cx="48.3" cy="90.4" rx="2.1" ry="1.1" fill="#d88818" opacity=".8"/><ellipse cx="38.1" cy="79.6" rx="3.0" ry="1.5" fill="#f4b838" opacity=".8"/><ellipse cx="91.1" cy="93.0" rx="1.3" ry="0.6" fill="#c87c14" opacity=".8"/><ellipse cx="63.3" cy="94.7" rx="2.5" ry="1.2" fill="#d88818" opacity=".8"/><ellipse cx="25.7" cy="90.4" rx="2.8" ry="1.4" fill="#e09420" opacity=".8"/><ellipse cx="17.9" cy="92.1" rx="2.3" ry="1.1" fill="#c87c14" opacity=".8"/><ellipse cx="73.5" cy="86.5" rx="3.0" ry="1.5" fill="#c87c14" opacity=".8"/><ellipse cx="83.2" cy="80.1" rx="2.7" ry="1.3" fill="#f4b838" opacity=".8"/><ellipse cx="52.9" cy="92.1" rx="1.3" ry="0.7" fill="#f4b838" opacity=".8"/><ellipse cx="63.3" cy="92.7" rx="2.7" ry="1.3" fill="#d88818" opacity=".8"/><ellipse cx="19.1" cy="94.5" rx="1.8" ry="0.9" fill="#c87c14" opacity=".8"/><ellipse cx="83.7" cy="91.4" rx="1.7" ry="0.8" fill="#e09420" opacity=".8"/><ellipse cx="82.9" cy="81.4" rx="1.0" ry="0.5" fill="#e09420" opacity=".8"/><ellipse cx="43.2" cy="85.6" rx="1.2" ry="0.6" fill="#d88818" opacity=".8"/><ellipse cx="184.5" cy="78.6" rx="2.3" ry="1.2" fill="#e09420" opacity=".8"/><ellipse cx="54.5" cy="76.6" rx="1.1" ry="0.5" fill="#d88818" opacity=".8"/><ellipse cx="42.0" cy="86.4" rx="2.0" ry="1.0" fill="#c87c14" opacity=".8"/><ellipse cx="71.7" cy="96.7" rx="1.4" ry="0.7" fill="#c87c14" opacity=".8"/><ellipse cx="80.2" cy="83.1" rx="1.1" ry="0.6" fill="#f8c848" opacity=".8"/><ellipse cx="94.0" cy="78.3" rx="2.9" ry="1.4" fill="#c87c14" opacity=".8"/><ellipse cx="176.5" cy="79.4" rx="2.0" ry="1.0" fill="#d88818" opacity=".8"/><ellipse cx="187.9" cy="79.9" rx="1.7" ry="0.9" fill="#d88818" opacity=".8"/><ellipse cx="23.0" cy="87.5" rx="2.0" ry="1.0" fill="#e09420" opacity=".8"/><ellipse cx="139.2" cy="93.7" rx="1.0" ry="0.5" fill="#f4b838" opacity=".8"/><ellipse cx="89.0" cy="76.1" rx="2.4" ry="1.2" fill="#f8c848" opacity=".8"/><ellipse cx="170.3" cy="77.1" rx="2.4" ry="1.2" fill="#d88818" opacity=".8"/><ellipse cx="153.5" cy="87.3" rx="2.6" ry="1.3" fill="#e09420" opacity=".8"/><ellipse cx="58.1" cy="89.0" rx="1.8" ry="0.9" fill="#f4b838" opacity=".8"/><ellipse cx="21.4" cy="91.7" rx="1.5" ry="0.7" fill="#e09420" opacity=".8"/><ellipse cx="140.0" cy="88.2" rx="2.5" ry="1.3" fill="#c87c14" opacity=".8"/><ellipse cx="26.1" cy="79.8" rx="2.9" ry="1.5" fill="#d88818" opacity=".8"/><ellipse cx="96.3" cy="98.1" rx="1.0" ry="0.5" fill="#f4b838" opacity=".8"/><ellipse cx="68.1" cy="87.5" rx="1.2" ry="0.6" fill="#d88818" opacity=".8"/><ellipse cx="105.4" cy="85.0" rx="1.9" ry="1.0" fill="#c87c14" opacity=".8"/><ellipse cx="176.3" cy="83.4" rx="2.0" ry="1.0" fill="#d88818" opacity=".8"/><ellipse cx="147.9" cy="93.2" rx="1.4" ry="0.7" fill="#f4b838" opacity=".8"/><ellipse cx="122.3" cy="93.1" rx="2.9" ry="1.5" fill="#f8c848" opacity=".8"/><ellipse cx="141.6" cy="92.6" rx="2.2" ry="1.1" fill="#e09420" opacity=".8"/><ellipse cx="187.6" cy="77.1" rx="1.8" ry="0.9" fill="#f8c848" opacity=".8"/><ellipse cx="34.1" cy="78.3" rx="1.4" ry="0.7" fill="#c87c14" opacity=".8"/><ellipse cx="85.0" cy="85.9" rx="1.8" ry="0.9" fill="#c87c14" opacity=".8"/><ellipse cx="64.0" cy="85.9" rx="1.1" ry="0.5" fill="#f8c848" opacity=".8"/><ellipse cx="68.4" cy="92.7" rx="1.5" ry="0.8" fill="#e09420" opacity=".8"/><ellipse cx="26.0" cy="96.2" rx="2.5" ry="1.3" fill="#f4b838" opacity=".8"/><ellipse cx="120.7" cy="92.7" rx="1.2" ry="0.6" fill="#f8c848" opacity=".8"/><ellipse cx="89.9" cy="84.7" rx="2.0" ry="1.0" fill="#f8c848" opacity=".8"/><ellipse cx="115.2" cy="86.9" rx="1.1" ry="0.6" fill="#c87c14" opacity=".8"/><ellipse cx="134.5" cy="97.0" rx="1.4" ry="0.7" fill="#f4b838" opacity=".8"/><ellipse cx="184.1" cy="79.2" rx="2.6" ry="1.3" fill="#f4b838" opacity=".8"/><ellipse cx="22.9" cy="89.7" rx="2.9" ry="1.4" fill="#d88818" opacity=".8"/><ellipse cx="103.3" cy="79.0" rx="1.8" ry="0.9" fill="#e09420" opacity=".8"/><ellipse cx="29.6" cy="91.9" rx="2.3" ry="1.1" fill="#f8c848" opacity=".8"/><ellipse cx="59.3" cy="86.2" rx="2.9" ry="1.4" fill="#d88818" opacity=".8"/><ellipse cx="103.4" cy="89.6" rx="1.7" ry="0.8" fill="#c87c14" opacity=".8"/><ellipse cx="72.5" cy="98.4" rx="1.6" ry="0.8" fill="#f4b838" opacity=".8"/><ellipse cx="38.9" cy="85.0" rx="2.7" ry="1.4" fill="#d88818" opacity=".8"/><ellipse cx="43.1" cy="96.7" rx="1.7" ry="0.8" fill="#d88818" opacity=".8"/><ellipse cx="145.5" cy="95.2" rx="1.4" ry="0.7" fill="#f8c848" opacity=".8"/><ellipse cx="0.3" cy="90.8" rx="2.6" ry="1.3" fill="#e09420" opacity=".8"/><ellipse cx="175.6" cy="93.3" rx="2.6" ry="1.3" fill="#f4b838" opacity=".8"/><ellipse cx="148.7" cy="83.9" rx="1.6" ry="0.8" fill="#d88818" opacity=".8"/><ellipse cx="182.1" cy="96.8" rx="2.8" ry="1.4" fill="#c87c14" opacity=".8"/><ellipse cx="146.9" cy="86.4" rx="1.5" ry="0.8" fill="#c87c14" opacity=".8"/><ellipse cx="170.1" cy="82.1" rx="1.6" ry="0.8" fill="#c87c14" opacity=".8"/><ellipse cx="37.7" cy="97.2" rx="1.6" ry="0.8" fill="#f4b838" opacity=".8"/><ellipse cx="20.1" cy="96.7" rx="1.8" ry="0.9" fill="#d88818" opacity=".8"/><ellipse cx="149.5" cy="93.9" rx="1.5" ry="0.7" fill="#f4b838" opacity=".8"/><ellipse cx="114.3" cy="78.8" rx="1.3" ry="0.7" fill="#d88818" opacity=".8"/><ellipse cx="64.6" cy="79.9" rx="1.7" ry="0.8" fill="#f4b838" opacity=".8"/><ellipse cx="146.5" cy="90.0" rx="1.1" ry="0.6" fill="#d88818" opacity=".8"/><ellipse cx="104.5" cy="76.5" rx="1.9" ry="0.9" fill="#f8c848" opacity=".8"/><ellipse cx="187.7" cy="79.9" rx="1.0" ry="0.5" fill="#e09420" opacity=".8"/><ellipse cx="69.5" cy="95.6" rx="1.6" ry="0.8" fill="#c87c14" opacity=".8"/><ellipse cx="37.2" cy="86.6" rx="1.9" ry="1.0" fill="#d88818" opacity=".8"/><ellipse cx="137.6" cy="97.5" rx="1.7" ry="0.8" fill="#c87c14" opacity=".8"/><ellipse cx="93.2" cy="86.4" rx="1.9" ry="1.0" fill="#d88818" opacity=".8"/><ellipse cx="35.0" cy="98.6" rx="1.2" ry="0.6" fill="#e09420" opacity=".8"/><ellipse cx="32.9" cy="94.3" rx="1.5" ry="0.8" fill="#f4b838" opacity=".8"/><ellipse cx="68.2" cy="76.1" rx="1.4" ry="0.7" fill="#d88818" opacity=".8"/><ellipse cx="164.9" cy="98.5" rx="1.1" ry="0.6" fill="#f8c848" opacity=".8"/><ellipse cx="31.0" cy="90.7" rx="2.0" ry="1.0" fill="#d88818" opacity=".8"/><ellipse cx="139.9" cy="94.3" rx="3.0" ry="1.5" fill="#f8c848" opacity=".8"/><ellipse cx="164.5" cy="88.6" rx="1.2" ry="0.6" fill="#f4b838" opacity=".8"/><ellipse cx="125.2" cy="80.6" rx="1.2" ry="0.6" fill="#f4b838" opacity=".8"/><ellipse cx="124.5" cy="76.7" rx="1.4" ry="0.7" fill="#f8c848" opacity=".8"/><ellipse cx="7.1" cy="87.7" rx="2.9" ry="1.4" fill="#e09420" opacity=".8"/><ellipse cx="61.3" cy="86.2" rx="3.0" ry="1.5" fill="#d88818" opacity=".8"/><ellipse cx="144.1" cy="92.1" rx="1.0" ry="0.5" fill="#e09420" opacity=".8"/><ellipse cx="132.0" cy="90.9" rx="1.0" ry="0.5" fill="#c87c14" opacity=".8"/><ellipse cx="81.8" cy="92.1" rx="1.7" ry="0.8" fill="#c87c14" opacity=".8"/><ellipse cx="98.1" cy="91.4" rx="1.3" ry="0.6" fill="#d88818" opacity=".8"/><ellipse cx="161.6" cy="82.5" rx="1.5" ry="0.7" fill="#e09420" opacity=".8"/><ellipse cx="102.4" cy="83.7" rx="2.6" ry="1.3" fill="#e09420" opacity=".8"/><ellipse cx="97.8" cy="92.1" rx="1.6" ry="0.8" fill="#d88818" opacity=".8"/><ellipse cx="64.8" cy="93.3" rx="1.3" ry="0.7" fill="#d88818" opacity=".8"/><ellipse cx="13.8" cy="97.3" rx="2.5" ry="1.2" fill="#c87c14" opacity=".8"/><ellipse cx="85.6" cy="98.2" rx="2.0" ry="1.0" fill="#e09420" opacity=".8"/><ellipse cx="173.2" cy="90.4" rx="1.0" ry="0.5" fill="#d88818" opacity=".8"/><path d="M113 34q2 18-1 34l15 1q-3-16 1-36z" fill="#241006"/><path d="M120 36q10-12 30-16M118 36q-8-10-18-12M124 38q14-4 34-2" stroke="#2a1408" stroke-width="1.600" fill="none"/><path d="M108 68q10-3 22 0v3h-22z" fill="#2a1408"/><g stroke="#2a1a0c" fill="none"><path d="M108 62l22 2 28 3 30-4" stroke-width="1.200"/><path d="M108 67l22 3 28 4 30-3" stroke-width="1.200"/><path d="M130 60v12M136 61v12M146 62v16M152 63v17M165 62v20M171 61v20M183 58v24" stroke-width="1.800"/><path d="M146 64l19 16M152 78l13-14" stroke-width="1.400"/></g><rect x="143" y="92" width="36" height="6.500" rx="1" fill="#fbf7d0" stroke="#555" stroke-width=".3"/><rect x="147" y="93.500" width="28" height=".8" fill="#555"/><rect x="147" y="95.500" width="22" height=".8" fill="#555"/><rect x="0" y="99.5" width="188" height="5.5" fill="#2459d8"/><rect x="0" y="99.5" width="188" height="1" fill="#4a86ee"/><path d="M0 99.5h11q2.500 2.8 0 5.5h-11z" fill="#3b9b3b"/><rect x="2.500" y="101.3" width="6" height="1.600" fill="#d8f0d0" opacity=".8"/><rect x="166" y="99.5" width="22" height="5.5" fill="#1691e8"/><g fill="#cfe3ff" opacity=".8"><rect x="168" y="101.3" width="1.800" height="1.800"/><rect x="171" y="101.3" width="1.800" height="1.800"/><rect x="174" y="101.3" width="1.800" height="1.800"/><rect x="178" y="101.3" width="7" height="1.600"/></g><g opacity=".85"><rect x="15" y="101.3" width="1.800" height="1.800" fill="#e8c040"/><rect x="18" y="101.3" width="1.800" height="1.800" fill="#d0e0ff"/><rect x="21" y="101.3" width="1.800" height="1.800" fill="#60a0ff"/></g></svg></div>
<div class="thumb" style="left:405.3px;top:95.2px;height:110px"><svg width="188" height="106" viewBox="0 0 188 106"><defs><linearGradient id="sk2" x1="0" y1="0" x2="0" y2="1"><stop offset="0" stop-color="#1a52b6"/><stop offset="1" stop-color="#5a98e4"/></linearGradient><linearGradient id="se2" x1="0" y1="0" x2="0" y2="1"><stop offset="0" stop-color="#1878c8"/><stop offset=".35" stop-color="#1ea8dc"/><stop offset="1" stop-color="#28c0e4"/></linearGradient></defs><rect width="188" height="66" fill="url(#sk2)"/><rect y="65" width="188" height="41" fill="url(#se2)"/><ellipse cx="10" cy="40" rx="12" ry="5" fill="#fff" opacity=".8"/><ellipse cx="26" cy="34" rx="12" ry="6" fill="#fff" opacity=".8"/><ellipse cx="40" cy="42" rx="10" ry="5" fill="#fff" opacity=".8"/><ellipse cx="20" cy="50" rx="18" ry="5" fill="#fff" opacity=".8"/><ellipse cx="46" cy="52" rx="8" ry="3" fill="#fff" opacity=".8"/><ellipse cx="6" cy="56" rx="8" ry="3" fill="#fff" opacity=".8"/><ellipse cx="34" cy="58" rx="12" ry="3" fill="#fff" opacity=".8"/><path d="M15 73.500l4.500-13 .5 13zM21 73.500l.5-11 4.500 11z" fill="#f4f6f8"/><path d="M14 74.200h13l-1.500 1.200H15.500z" fill="#dde"/><rect x="47" y="4" width="137" height="94" fill="#fff"/><rect x="47" y="4" width="137" height="5.500" fill="#bcd0ee"/><rect x="48.5" y="5" width="26" height="4.500" rx="1" fill="#eef3fb"/><rect x="50" y="6.4" width="18" height="1.300" fill="#556" opacity=".7"/><rect x="47" y="9.5" width="137" height="4.500" fill="#e4ebf6"/><rect x="59" y="10.3" width="115" height="3" rx=".6" fill="#fff" stroke="#b8c4d6" stroke-width=".3"/><rect x="62" y="11.2" width="34" height="1.200" fill="#667" opacity=".7"/><g fill="#556"><rect x="49" y="11" width="2" height="1.500"/><rect x="52.5" y="11" width="2" height="1.500"/><rect x="56" y="11" width="1.600" height="1.500"/></g><rect x="182" y="14" width="2" height="84" fill="#e6ebf2"/><rect x="182.2" y="15" width="1.600" height="14" fill="#a9bfe6"/><rect x="48.5" y="18.5" width="83" height="6" fill="#1a1a1a"/><rect x="50.0" y="20.9" width="6" height="1.200" fill="#ccc" opacity=".75"/><rect x="59.1" y="20.9" width="6" height="1.200" fill="#ccc" opacity=".75"/><rect x="68.2" y="20.9" width="6" height="1.200" fill="#ccc" opacity=".75"/><rect x="77.3" y="20.9" width="6" height="1.200" fill="#ccc" opacity=".75"/><rect x="86.4" y="20.9" width="6" height="1.200" fill="#ccc" opacity=".75"/><rect x="95.5" y="20.9" width="6" height="1.200" fill="#ccc" opacity=".75"/><rect x="104.6" y="20.9" width="6" height="1.200" fill="#ccc" opacity=".75"/><rect x="113.7" y="20.9" width="6" height="1.200" fill="#ccc" opacity=".75"/><rect x="122.8" y="20.9" width="6" height="1.200" fill="#ccc" opacity=".75"/><rect x="57.6" y="18.5" width="9" height="6" fill="#2468c8"/><rect x="59.1" y="20.9" width="6" height="1.200" fill="#fff"/><rect x="156" y="16.0" width="25" height="7.500" fill="#17355f"/><rect x="157.5" y="17.2" width="5" height="5" fill="#7fa8d8"/><rect x="163.5" y="17.5" width="11" height="1.800" fill="#dfe8f4"/><rect x="163.5" y="20.3" width="11" height="1.800" fill="#9ab8e0"/><text x="175" y="22.8" font-size="7" font-weight="bold" fill="#3a7ad8" font-family="Liberation Sans,sans-serif">12</text><rect x="48.5" y="25.3" width="132" height=".6" fill="#2468c8"/><text x="52" y="32.0" font-size="3.600" font-weight="bold" fill="#1f5fc0" font-family="Liberation Sans,sans-serif">Overview</text><rect x="52" y="35.0" width="3.500" height="1.600" fill="#dfe6f2"/><rect x="57" y="35.5" width="44" height=".7" fill="#667" opacity=".7"/><rect x="52" y="41.8" width="44" height="1" fill="#2a6ad0" opacity=".85"/><rect x="52" y="45.50" width="68.0" height=".7" fill="#8a8f98" opacity="0.6"/><rect x="52" y="47.00" width="68.0" height=".7" fill="#8a8f98" opacity="0.6"/><rect x="52" y="48.50" width="68.0" height=".7" fill="#8a8f98" opacity="0.6"/><rect x="52" y="50.00" width="68.0" height=".7" fill="#8a8f98" opacity="0.6"/><rect x="52" y="51.50" width="40.8" height=".7" fill="#8a8f98" opacity="0.6"/><rect x="52" y="54.00" width="68.0" height=".7" fill="#8a8f98" opacity="0.6"/><rect x="52" y="55.50" width="68.0" height=".7" fill="#8a8f98" opacity="0.6"/><rect x="52" y="57.00" width="68.0" height=".7" fill="#8a8f98" opacity="0.6"/><rect x="52" y="58.50" width="68.0" height=".7" fill="#8a8f98" opacity="0.6"/><rect x="52" y="60.00" width="40.8" height=".7" fill="#8a8f98" opacity="0.6"/><rect x="52" y="62.50" width="68.0" height=".7" fill="#8a8f98" opacity="0.6"/><rect x="52" y="64.00" width="68.0" height=".7" fill="#8a8f98" opacity="0.6"/><rect x="52" y="65.50" width="68.0" height=".7" fill="#8a8f98" opacity="0.6"/><rect x="52" y="67.00" width="68.0" height=".7" fill="#8a8f98" opacity="0.6"/><rect x="52" y="68.50" width="40.8" height=".7" fill="#8a8f98" opacity="0.6"/><rect x="52" y="71.00" width="68.0" height=".7" fill="#8a8f98" opacity="0.6"/><rect x="52" y="72.50" width="68.0" height=".7" fill="#8a8f98" opacity="0.6"/><rect x="52" y="74.00" width="68.0" height=".7" fill="#8a8f98" opacity="0.6"/><rect x="52" y="75.50" width="68.0" height=".7" fill="#8a8f98" opacity="0.6"/><rect x="52" y="77.00" width="40.8" height=".7" fill="#8a8f98" opacity="0.6"/><rect x="52" y="79.50" width="68.0" height=".7" fill="#8a8f98" opacity="0.6"/><rect x="52" y="81.00" width="68.0" height=".7" fill="#8a8f98" opacity="0.6"/><rect x="52" y="82.50" width="68.0" height=".7" fill="#8a8f98" opacity="0.6"/><rect x="52" y="84.00" width="68.0" height=".7" fill="#8a8f98" opacity="0.6"/><rect x="52" y="85.50" width="40.8" height=".7" fill="#8a8f98" opacity="0.6"/><rect x="52" y="88.00" width="68.0" height=".7" fill="#8a8f98" opacity="0.6"/><rect x="52" y="89.50" width="68.0" height=".7" fill="#8a8f98" opacity="0.6"/><rect x="52" y="91.00" width="68.0" height=".7" fill="#8a8f98" opacity="0.6"/><rect x="52" y="92.50" width="40.8" height=".7" fill="#8a8f98" opacity="0.6"/><rect x="124.0" y="47.5" width="8.200" height="6" rx=".8" fill="#fff" stroke="#333" stroke-width=".5"/><rect x="126.6" y="49.1" width="3" height="2" fill="#333"/><rect x="133.8" y="47.5" width="8.200" height="6" rx=".8" fill="#fff" stroke="#333" stroke-width=".5"/><rect x="136.4" y="49.1" width="3" height="2" fill="#333"/><rect x="143.6" y="47.5" width="8.200" height="6" rx=".8" fill="#fff" stroke="#333" stroke-width=".5"/><rect x="146.2" y="49.1" width="3" height="2" fill="#333"/><rect x="153.4" y="47.5" width="8.200" height="6" rx=".8" fill="#fff" stroke="#333" stroke-width=".5"/><rect x="156.0" y="49.1" width="3" height="2" fill="#333"/><rect x="163.2" y="47.5" width="8.200" height="6" rx=".8" fill="#fff" stroke="#333" stroke-width=".5"/><rect x="165.8" y="49.1" width="3" height="2" fill="#333"/><rect x="124.0" y="54.9" width="8.200" height="6" rx=".8" fill="#fff" stroke="#333" stroke-width=".5"/><rect x="126.6" y="56.5" width="3" height="2" fill="#333"/><rect x="163.2" y="54.9" width="8.200" height="6" rx=".8" fill="#fff" stroke="#333" stroke-width=".5"/><rect x="165.8" y="56.5" width="3" height="2" fill="#333"/><rect x="124.0" y="62.3" width="8.200" height="6" rx=".8" fill="#fff" stroke="#333" stroke-width=".5"/><rect x="126.6" y="63.9" width="3" height="2" fill="#333"/><rect x="163.2" y="62.3" width="8.200" height="6" rx=".8" fill="#fff" stroke="#333" stroke-width=".5"/><rect x="165.8" y="63.9" width="3" height="2" fill="#333"/><rect x="124.0" y="69.7" width="8.200" height="6" rx=".8" fill="#fff" stroke="#333" stroke-width=".5"/><rect x="126.6" y="71.3" width="3" height="2" fill="#333"/><rect x="163.2" y="69.7" width="8.200" height="6" rx=".8" fill="#fff" stroke="#333" stroke-width=".5"/><rect x="165.8" y="71.3" width="3" height="2" fill="#333"/><rect x="124.0" y="77.1" width="8.200" height="6" rx=".8" fill="#fff" stroke="#333" stroke-width=".5"/><rect x="126.6" y="78.7" width="3" height="2" fill="#333"/><rect x="163.2" y="77.1" width="8.200" height="6" rx=".8" fill="#fff" stroke="#333" stroke-width=".5"/><rect x="165.8" y="78.7" width="3" height="2" fill="#333"/><rect x="124.0" y="84.5" width="8.200" height="6" rx=".8" fill="#fff" stroke="#333" stroke-width=".5"/><rect x="126.6" y="86.1" width="3" height="2" fill="#333"/><rect x="163.2" y="84.5" width="8.200" height="6" rx=".8" fill="#fff" stroke="#333" stroke-width=".5"/><rect x="165.8" y="86.1" width="3" height="2" fill="#333"/><rect x="136" y="56.0" width="24" height="4.500" rx=".8" fill="#fff" stroke="#333" stroke-width=".5"/><rect x="138" y="57.5" width="20" height="1.500" fill="#333" opacity=".7"/><rect x="145.5" y="64.5" width="4" height="6" fill="#fff" stroke="#333" stroke-width=".4"/><g fill="#fff" stroke="#2468c8" stroke-width=".7"><rect x="137" y="83.5" width="10" height="7"/><rect x="149" y="83.5" width="10" height="7"/><rect x="142" y="79.5" width="12" height="8"/></g><path d="M148 78.5v-5M143 78.5l-3-4M153 78.5l3-4" stroke="#2468c8" stroke-width=".4"/><rect x="4.2" y="1.0" width="3.600" height="3.600" rx=".8" fill="#f0e090" opacity=".85"/><rect x="2.8" y="5.8" width="6.400" height="1.200" fill="#dfe8ff" opacity=".4"/><rect x="4.2" y="12.299999999999999" width="3.600" height="3.600" rx=".8" fill="#a0c8f8" opacity=".85"/><rect x="2.8" y="17.1" width="6.400" height="1.200" fill="#dfe8ff" opacity=".4"/><rect x="4.2" y="23.599999999999998" width="3.600" height="3.600" rx=".8" fill="#e8f0f8" opacity=".85"/><rect x="2.8" y="28.4" width="6.400" height="1.200" fill="#dfe8ff" opacity=".4"/><rect x="4.2" y="34.900000000000006" width="3.600" height="3.600" rx=".8" fill="#f0d060" opacity=".85"/><rect x="2.8" y="39.7" width="6.400" height="1.200" fill="#dfe8ff" opacity=".4"/><rect x="4.2" y="46.2" width="3.600" height="3.600" rx=".8" fill="#e04030" opacity=".85"/><rect x="2.8" y="51" width="6.400" height="1.200" fill="#dfe8ff" opacity=".4"/><rect x="4.2" y="57.5" width="3.600" height="3.600" rx=".8" fill="#60a0f0" opacity=".85"/><rect x="2.8" y="62.3" width="6.400" height="1.200" fill="#dfe8ff" opacity=".4"/><rect x="4.2" y="68.8" width="3.600" height="3.600" rx=".8" fill="#d0d0d0" opacity=".85"/><rect x="2.8" y="73.6" width="6.400" height="1.200" fill="#dfe8ff" opacity=".4"/><rect x="4.2" y="80.10000000000001" width="3.600" height="3.600" rx=".8" fill="#f0f0f0" opacity=".85"/><rect x="2.8" y="84.9" width="6.400" height="1.200" fill="#dfe8ff" opacity=".4"/><rect x="4.2" y="90.2" width="3.600" height="3.600" rx=".8" fill="#80b0f0" opacity=".85"/><rect x="2.8" y="95" width="6.400" height="1.200" fill="#dfe8ff" opacity=".4"/><rect x="0" y="100.5" width="188" height="5.5" fill="#2459d8"/><rect x="0" y="100.5" width="188" height="1" fill="#4a86ee"/><path d="M0 100.5h11q2.500 2.8 0 5.5h-11z" fill="#3b9b3b"/><rect x="2.500" y="102.3" width="6" height="1.600" fill="#d8f0d0" opacity=".8"/><rect x="166" y="100.5" width="22" height="5.5" fill="#1691e8"/><g fill="#cfe3ff" opacity=".8"><rect x="168" y="102.3" width="1.800" height="1.800"/><rect x="171" y="102.3" width="1.800" height="1.800"/><rect x="174" y="102.3" width="1.800" height="1.800"/><rect x="178" y="102.3" width="7" height="1.600"/></g><g opacity=".85"><rect x="15" y="102.3" width="1.800" height="1.800" fill="#e8c040"/><rect x="18" y="102.3" width="1.800" height="1.800" fill="#d0e0ff"/><rect x="21" y="102.3" width="1.800" height="1.800" fill="#60a0ff"/></g><rect x="28" y="101.2" width="26" height="4" fill="#3a6ee8"/><rect x="30" y="102.7" width="16" height="1" fill="#dfe8ff" opacity=".8"/></svg></div>
<div class="thumb" style="left:617.6px;top:95.2px;height:116px"><svg width="188" height="112" viewBox="0 0 188 112"><defs><linearGradient id="sk3" x1="0" y1="0" x2="1" y2=".7"><stop offset="0" stop-color="#040f4c"/><stop offset=".4" stop-color="#0c2a92"/><stop offset=".75" stop-color="#1c4cc0"/><stop offset="1" stop-color="#3a74dc"/></linearGradient><linearGradient id="du3" x1="0" y1="0" x2="1" y2="0"><stop offset="0" stop-color="#8a2208"/><stop offset=".3" stop-color="#b0300e"/><stop offset=".65" stop-color="#b83610"/><stop offset="1" stop-color="#9c280a"/></linearGradient><linearGradient id="du3v" x1="0" y1="0" x2="0" y2="1"><stop offset="0" stop-color="#3a0c02" stop-opacity="0"/><stop offset=".45" stop-color="#3a0c02" stop-opacity=".12"/><stop offset="1" stop-color="#3a0c02" stop-opacity=".55"/></linearGradient></defs><rect width="188" height="112" fill="url(#sk3)"/><path d="M0 49Q30 44 60 38T94 34Q140 33 188 39V112H0z" fill="url(#du3)"/><path d="M0 49Q30 44 60 38T94 34Q140 33 188 39V112H0z" fill="url(#du3v)"/><path d="M0 49Q30 44 60 38T94 34Q70 44 62 60T40 112H0z" fill="#4a1004" opacity=".3"/><path d="M66.0 38.0Q58.0 60.0 26.0 112" fill="none" stroke="#4a1204" stroke-width=".8" opacity=".5"/><path d="M70.2 38.3Q61.4 60.9 28.0 112" fill="none" stroke="#4a1204" stroke-width=".8" opacity=".5"/><path d="M74.4 38.6Q64.8 61.8 30.0 112" fill="none" stroke="#4a1204" stroke-width=".8" opacity=".5"/><path d="M78.6 38.9Q68.2 62.7 32.0 112" fill="none" stroke="#4a1204" stroke-width=".8" opacity=".5"/><path d="M82.8 39.2Q71.6 63.6 34.0 112" fill="none" stroke="#4a1204" stroke-width=".8" opacity=".5"/><path d="M87.0 39.5Q75.0 64.5 36.0 112" fill="none" stroke="#4a1204" stroke-width=".8" opacity=".5"/><path d="M91.2 39.8Q78.4 65.4 38.0 112" fill="none" stroke="#4a1204" stroke-width=".8" opacity=".5"/><path d="M95.4 40.1Q81.8 66.3 40.0 112" fill="none" stroke="#4a1204" stroke-width=".8" opacity=".5"/><path d="M99.6 40.4Q85.2 67.2 42.0 112" fill="none" stroke="#4a1204" stroke-width=".8" opacity=".5"/><path d="M103.8 40.7Q88.6 68.1 44.0 112" fill="none" stroke="#4a1204" stroke-width=".8" opacity=".5"/><path d="M108.0 41.0Q92.0 69.0 46.0 112" fill="none" stroke="#4a1204" stroke-width=".8" opacity=".5"/><path d="M112.2 41.3Q95.4 69.9 48.0 112" fill="none" stroke="#4a1204" stroke-width=".8" opacity=".5"/><path d="M116.4 41.6Q98.8 70.8 50.0 112" fill="none" stroke="#4a1204" stroke-width=".8" opacity=".5"/><path d="M120.6 41.9Q102.2 71.7 52.0 112" fill="none" stroke="#4a1204" stroke-width=".8" opacity=".5"/><path d="M124.8 42.2Q105.6 72.6 54.0 112" fill="none" stroke="#4a1204" stroke-width=".8" opacity=".5"/><path d="M129.0 42.5Q109.0 73.5 56.0 112" fill="none" stroke="#4a1204" stroke-width=".8" opacity=".5"/><path d="M133.2 42.8Q112.4 74.4 58.0 112" fill="none" stroke="#4a1204" stroke-width=".8" opacity=".5"/><path d="M137.4 43.1Q115.8 75.3 60.0 112" fill="none" stroke="#4a1204" stroke-width=".8" opacity=".5"/><path d="M141.6 43.4Q119.2 76.2 62.0 112" fill="none" stroke="#4a1204" stroke-width=".8" opacity=".5"/><path d="M145.8 43.7Q122.6 77.1 64.0 112" fill="none" stroke="#4a1204" stroke-width=".8" opacity=".5"/><path d="M150.0 44.0Q126.0 78.0 66.0 112" fill="none" stroke="#4a1204" stroke-width=".8" opacity=".5"/><path d="M154.2 44.3Q129.4 78.9 68.0 112" fill="none" stroke="#4a1204" stroke-width=".8" opacity=".5"/><path d="M158.4 44.6Q132.8 79.8 70.0 112" fill="none" stroke="#4a1204" stroke-width=".8" opacity=".5"/><path d="M162.6 44.9Q136.2 80.7 72.0 112" fill="none" stroke="#4a1204" stroke-width=".8" opacity=".5"/><path d="M166.8 45.2Q139.6 81.6 74.0 112" fill="none" stroke="#4a1204" stroke-width=".8" opacity=".5"/><path d="M171.0 45.5Q143.0 82.5 76.0 112" fill="none" stroke="#4a1204" stroke-width=".8" opacity=".5"/><path d="M175.2 45.8Q146.4 83.4 78.0 112" fill="none" stroke="#4a1204" stroke-width=".8" opacity=".5"/><path d="M179.4 46.1Q149.8 84.3 80.0 112" fill="none" stroke="#4a1204" stroke-width=".8" opacity=".5"/><path d="M183.6 46.4Q153.2 85.2 82.0 112" fill="none" stroke="#4a1204" stroke-width=".8" opacity=".5"/><path d="M187.8 46.7Q156.6 86.1 84.0 112" fill="none" stroke="#4a1204" stroke-width=".8" opacity=".5"/><path d="M192.0 47.0Q160.0 87.0 86.0 112" fill="none" stroke="#4a1204" stroke-width=".8" opacity=".5"/><path d="M196.2 47.3Q163.4 87.9 88.0 112" fill="none" stroke="#4a1204" stroke-width=".8" opacity=".5"/><path d="M200.4 47.6Q166.8 88.8 90.0 112" fill="none" stroke="#4a1204" stroke-width=".8" opacity=".5"/><path d="M204.6 47.9Q170.2 89.7 92.0 112" fill="none" stroke="#4a1204" stroke-width=".8" opacity=".5"/><path d="M96.0 46.0q30 -2.0 92 3.0" fill="none" stroke="#e0582a" stroke-width=".5" opacity=".35"/><path d="M93.5 49.0q30 -1.9 92 3.1" fill="none" stroke="#e0582a" stroke-width=".5" opacity=".35"/><path d="M91.0 52.0q30 -1.8 92 3.3" fill="none" stroke="#e0582a" stroke-width=".5" opacity=".35"/><path d="M88.5 55.0q30 -1.7 92 3.5" fill="none" stroke="#e0582a" stroke-width=".5" opacity=".35"/><path d="M86.0 58.0q30 -1.6 92 3.6" fill="none" stroke="#e0582a" stroke-width=".5" opacity=".35"/><path d="M83.5 61.0q30 -1.5 92 3.8" fill="none" stroke="#e0582a" stroke-width=".5" opacity=".35"/><path d="M81.0 64.0q30 -1.4 92 3.9" fill="none" stroke="#e0582a" stroke-width=".5" opacity=".35"/><path d="M78.5 67.0q30 -1.3 92 4.0" fill="none" stroke="#e0582a" stroke-width=".5" opacity=".35"/><path d="M76.0 70.0q30 -1.2 92 4.2" fill="none" stroke="#e0582a" stroke-width=".5" opacity=".35"/><path d="M73.5 73.0q30 -1.1 92 4.3" fill="none" stroke="#e0582a" stroke-width=".5" opacity=".35"/><path d="M71.0 76.0q30 -1.0 92 4.5" fill="none" stroke="#e0582a" stroke-width=".5" opacity=".35"/><path d="M68.5 79.0q30 -0.9 92 4.7" fill="none" stroke="#e0582a" stroke-width=".5" opacity=".35"/><path d="M66.0 82.0q30 -0.8 92 4.8" fill="none" stroke="#e0582a" stroke-width=".5" opacity=".35"/><path d="M63.5 85.0q30 -0.7 92 5.0" fill="none" stroke="#e0582a" stroke-width=".5" opacity=".35"/><path d="M61.0 88.0q30 -0.6 92 5.1" fill="none" stroke="#e0582a" stroke-width=".5" opacity=".35"/><path d="M58.5 91.0q30 -0.5 92 5.2" fill="none" stroke="#e0582a" stroke-width=".5" opacity=".35"/><path d="M56.0 94.0q30 -0.4 92 5.4" fill="none" stroke="#e0582a" stroke-width=".5" opacity=".35"/><path d="M53.5 97.0q30 -0.3 92 5.5" fill="none" stroke="#e0582a" stroke-width=".5" opacity=".35"/><path d="M51.0 100.0q30 -0.2 92 5.7" fill="none" stroke="#e0582a" stroke-width=".5" opacity=".35"/><path d="M48.5 103.0q30 -0.1 92 5.8" fill="none" stroke="#e0582a" stroke-width=".5" opacity=".35"/><path d="M46.0 106.0q30 0.0 92 6.0" fill="none" stroke="#e0582a" stroke-width=".5" opacity=".35"/><path d="M43.5 109.0q30 0.1 92 6.2" fill="none" stroke="#e0582a" stroke-width=".5" opacity=".35"/><circle cx="25.500" cy="37" r="8" fill="#c8ccd0"/><circle cx="23" cy="35" r="3" fill="#a8acb4" opacity=".7"/><circle cx="28" cy="40" r="2.500" fill="#a8acb4" opacity=".6"/><rect x="113" y="13" width="4.500" height="4" fill="#e8ecf4"/><rect x="111.500" y="18.500" width="7.500" height="1.500" fill="#dfe8ff" opacity=".6"/><rect x="128" y="100" width="40" height="7" rx="1" fill="#f4f3d4" stroke="#777" stroke-width=".3"/><rect x="4.2" y="2.2" width="3.600" height="3.600" rx=".8" fill="#f0e090" opacity=".85"/><rect x="2.8" y="7" width="6.400" height="1.200" fill="#dfe8ff" opacity=".4"/><rect x="4.2" y="14.2" width="3.600" height="3.600" rx=".8" fill="#a0c8f8" opacity=".85"/><rect x="2.8" y="19" width="6.400" height="1.200" fill="#dfe8ff" opacity=".4"/><rect x="4.2" y="26.2" width="3.600" height="3.600" rx=".8" fill="#e8f0f8" opacity=".85"/><rect x="2.8" y="31" width="6.400" height="1.200" fill="#dfe8ff" opacity=".4"/><rect x="4.2" y="38.2" width="3.600" height="3.600" rx=".8" fill="#f0d060" opacity=".85"/><rect x="2.8" y="43" width="6.400" height="1.200" fill="#dfe8ff" opacity=".4"/><rect x="4.2" y="50.2" width="3.600" height="3.600" rx=".8" fill="#e04030" opacity=".85"/><rect x="2.8" y="55" width="6.400" height="1.200" fill="#dfe8ff" opacity=".4"/><rect x="4.2" y="62.2" width="3.600" height="3.600" rx=".8" fill="#60a0f0" opacity=".85"/><rect x="2.8" y="67" width="6.400" height="1.200" fill="#dfe8ff" opacity=".4"/><rect x="4.2" y="74.2" width="3.600" height="3.600" rx=".8" fill="#d0d0d0" opacity=".85"/><rect x="2.8" y="79" width="6.400" height="1.200" fill="#dfe8ff" opacity=".4"/><rect x="4.2" y="86.2" width="3.600" height="3.600" rx=".8" fill="#f0f0f0" opacity=".85"/><rect x="2.8" y="91" width="6.400" height="1.200" fill="#dfe8ff" opacity=".4"/><rect x="4.2" y="97.2" width="3.600" height="3.600" rx=".8" fill="#80b0f0" opacity=".85"/><rect x="2.8" y="102" width="6.400" height="1.200" fill="#dfe8ff" opacity=".4"/><rect x="0" y="107.5" width="188" height="4.5" fill="#2459d8"/><rect x="0" y="107.5" width="188" height="1" fill="#4a86ee"/><path d="M0 107.5h11q2.500 2.2 0 4.5h-11z" fill="#3b9b3b"/><rect x="2.500" y="109.3" width="6" height="1.600" fill="#d8f0d0" opacity=".8"/><rect x="166" y="107.5" width="22" height="4.5" fill="#1691e8"/><g fill="#cfe3ff" opacity=".8"><rect x="168" y="109.3" width="1.800" height="1.800"/><rect x="171" y="109.3" width="1.800" height="1.800"/><rect x="174" y="109.3" width="1.800" height="1.800"/><rect x="178" y="109.3" width="7" height="1.600"/></g><g opacity=".85"><rect x="15" y="109.3" width="1.800" height="1.800" fill="#e8c040"/><rect x="18" y="109.3" width="1.800" height="1.800" fill="#d0e0ff"/><rect x="21" y="109.3" width="1.800" height="1.800" fill="#60a0ff"/></g></svg></div>
<div class="thumb" style="left:830.0px;top:95.2px;height:116px"><svg width="188" height="112" viewBox="0 0 188 112"><defs><linearGradient id="sk4" x1="0" y1="0" x2="0" y2="1"><stop offset="0" stop-color="#1f50d0"/><stop offset="1" stop-color="#3f78e6"/></linearGradient><radialGradient id="tu" cx=".45" cy=".35" r=".7"><stop offset="0" stop-color="#f6c80c"/><stop offset=".55" stop-color="#e8aa00"/><stop offset="1" stop-color="#a87600"/></radialGradient></defs><rect width="188" height="112" fill="url(#sk4)"/><ellipse cx="108" cy="8" rx="10" ry="5" fill="#fff" opacity="0.8"/><ellipse cx="118" cy="16" rx="14" ry="7" fill="#fff" opacity="0.85"/><ellipse cx="104" cy="24" rx="10" ry="6" fill="#fff" opacity="0.7"/><ellipse cx="132" cy="12" rx="10" ry="4" fill="#fff" opacity="0.7"/><ellipse cx="148" cy="18" rx="14" ry="7" fill="#fff" opacity="0.85"/><ellipse cx="160" cy="26" rx="10" ry="6" fill="#fff" opacity="0.75"/><ellipse cx="140" cy="4" rx="8" ry="3" fill="#fff" opacity="0.6"/><ellipse cx="78" cy="30" rx="6" ry="5" fill="#fff" opacity="0.6"/><ellipse cx="96" cy="36" rx="8" ry="6" fill="#fff" opacity="0.7"/><ellipse cx="108" cy="44" rx="6" ry="4" fill="#fff" opacity="0.6"/><ellipse cx="150" cy="2" rx="12" ry="2.5" fill="#fff" opacity="0.7"/><ellipse cx="180" cy="70" rx="8" ry="10" fill="#fff" opacity="0.6"/><ellipse cx="142" cy="84" rx="6" ry="5" fill="#fff" opacity="0.6"/><path d="M44.5 41.4Q48.2 71.2 48.0 112" fill="none" stroke="#4e7e1c" stroke-width="1.7"/><path d="M15.5 47.8Q18.9 74.9 18.2 112" fill="none" stroke="#4e7e1c" stroke-width="1.7"/><path d="M27.1 53.8Q32.3 78.4 33.6 112" fill="none" stroke="#4e7e1c" stroke-width="1.7"/><path d="M61.5 51.8Q64.9 77.9 64.3 112" fill="none" stroke="#4e7e1c" stroke-width="1.7"/><path d="M80.3 48.8Q84.1 76.9 84.0 112" fill="none" stroke="#4e7e1c" stroke-width="1.7"/><path d="M90.5 51.8Q91.6 78.4 88.8 112" fill="none" stroke="#4e7e1c" stroke-width="1.7"/><path d="M116.5 44.8Q119.2 73.9 117.8 112" fill="none" stroke="#4e7e1c" stroke-width="1.7"/><path d="M132.5 47.8Q133.1 75.9 129.7 112" fill="none" stroke="#4e7e1c" stroke-width="1.7"/><path d="M144.9 50.8Q145.8 77.4 142.8 112" fill="none" stroke="#4e7e1c" stroke-width="1.7"/><path d="M164.5 44.8Q164.8 73.9 161.1 112" fill="none" stroke="#4e7e1c" stroke-width="1.7"/><path d="M176.2 54.8Q175.9 79.9 171.6 112" fill="none" stroke="#4e7e1c" stroke-width="1.7"/><path d="M185.0 49.8Q184.7 77.4 180.5 112" fill="none" stroke="#4e7e1c" stroke-width="1.7"/><path d="M26.0 65.8Q32.7 85.9 35.4 112" fill="none" stroke="#4e7e1c" stroke-width="1.2"/><path d="M47.9 67.8Q50.1 86.4 48.3 112" fill="none" stroke="#4e7e1c" stroke-width="1.7"/><path d="M71.9 63.5Q75.5 84.8 75.2 112" fill="none" stroke="#4e7e1c" stroke-width="1.2"/><path d="M83.5 71.8Q87.2 88.9 86.8 112" fill="none" stroke="#4e7e1c" stroke-width="1.2"/><path d="M101.1 68.8Q103.9 87.4 102.8 112" fill="none" stroke="#4e7e1c" stroke-width="1.2"/><path d="M115.5 56.3Q116.2 81.7 112.9 112" fill="none" stroke="#4e7e1c" stroke-width="1.2"/><path d="M125.1 76.8Q124.5 91.4 119.9 112" fill="none" stroke="#4e7e1c" stroke-width="1.2"/><path d="M140.5 72.8Q142.1 89.4 139.6 112" fill="none" stroke="#4e7e1c" stroke-width="1.2"/><path d="M153.3 57.3Q153.8 82.2 150.3 112" fill="none" stroke="#4e7e1c" stroke-width="1.2"/><path d="M161.5 69.8Q162.6 87.4 159.8 112" fill="none" stroke="#4e7e1c" stroke-width="1.7"/><path d="M172.0 66.8Q172.5 86.4 169.0 112" fill="none" stroke="#4e7e1c" stroke-width="1.2"/><path d="M184.5 63.5Q181.9 84.8 175.4 112" fill="none" stroke="#4e7e1c" stroke-width="1.2"/><path d="M6.2 81.3Q13.7 94.2 17.2 112" fill="none" stroke="#4e7e1c" stroke-width="1.2"/><path d="M42.5 85.4Q48.3 95.7 50.1 112" fill="none" stroke="#4e7e1c" stroke-width="1.2"/><path d="M19.5 91.8Q25.0 99.9 26.5 112" fill="none" stroke="#4e7e1c" stroke-width="1.2"/><path d="M62.5 79.2Q64.7 93.1 62.9 112" fill="none" stroke="#4e7e1c" stroke-width="1.2"/><path d="M71.5 81.3Q75.1 94.2 74.7 112" fill="none" stroke="#4e7e1c" stroke-width="1.2"/><path d="M90.5 77.8Q91.1 92.4 87.7 112" fill="none" stroke="#4e7e1c" stroke-width="1.2"/><path d="M118.5 87.8Q119.0 97.4 115.5 112" fill="none" stroke="#4e7e1c" stroke-width="1.2"/><path d="M144.5 94.8Q143.2 101.4 138.0 112" fill="none" stroke="#4e7e1c" stroke-width="1.2"/><path d="M105.3 96.8Q106.9 102.9 104.5 112" fill="none" stroke="#4e7e1c" stroke-width="1.2"/><path d="M161.5 82.3Q159.2 94.7 152.9 112" fill="none" stroke="#4e7e1c" stroke-width="1.2"/><path d="M176.2 92.8Q174.2 100.4 168.2 112" fill="none" stroke="#4e7e1c" stroke-width="1.2"/><path d="M3.5 59.8Q8.3 82.4 9.2 112" fill="none" stroke="#4e7e1c" stroke-width="1.7"/><path d="M187.5 82.8Q186.2 94.9 180.8 112" fill="none" stroke="#4e7e1c" stroke-width="1.2"/><path d="M-2 112Q3 95.2 5 84Q7.6 98.0 10 112z" fill="#28501a"/><path d="M6 112Q13 90.4 15 76Q18.8 94.0 22 112z" fill="#28501a"/><path d="M20 112Q25 96.4 27 86Q29.6 99.0 32 112z" fill="#16300e"/><path d="M33 112Q39 92.8 41 80Q44.2 96.0 47 112z" fill="#0f2208"/><path d="M42 112Q47 97.6 49 88Q51.6 100.0 54 112z" fill="#0f2208"/><path d="M50 112Q55 91.6 57 78Q59.6 95.0 62 112z" fill="#28501a"/><path d="M64 112Q69 95.2 71 84Q73.6 98.0 76 112z" fill="#0f2208"/><path d="M74 112Q79 97.6 81 88Q83.6 100.0 86 112z" fill="#28501a"/><path d="M79 112Q87 85.6 89 68Q93.4 90.0 97 112z" fill="#16300e"/><path d="M89 112Q95 90.4 97 76Q100.2 94.0 103 112z" fill="#1c3c14"/><path d="M98 112Q103 97.6 105 88Q107.6 100.0 110 112z" fill="#16300e"/><path d="M103 112Q109 94.0 111 82Q114.2 97.0 117 112z" fill="#1c3c14"/><path d="M114 112Q119 97.6 121 88Q123.6 100.0 126 112z" fill="#28501a"/><path d="M122 112Q129 89.2 131 74Q134.8 93.0 138 112z" fill="#1c3c14"/><path d="M131 112Q137 92.8 139 80Q142.2 96.0 145 112z" fill="#28501a"/><path d="M140 112Q145 97.6 147 88Q149.6 100.0 152 112z" fill="#1c3c14"/><path d="M145 112Q151 91.6 153 78Q156.2 95.0 159 112z" fill="#16300e"/><path d="M156 112Q161 97.6 163 88Q165.6 100.0 168 112z" fill="#1c3c14"/><path d="M165 112Q171 92.8 173 80Q176.2 96.0 179 112z" fill="#0f2208"/><path d="M174 112Q179 96.4 181 86Q183.6 99.0 186 112z" fill="#16300e"/><path d="M181 112Q185 89.2 187 74Q189.0 93.0 191 112z" fill="#28501a"/><path d="M98.3 92.4C98.3 98.8 112.3 98.8 112.3 92.4Q110.5 89.2 107.7 90.6Q105.3 88.8 102.8 90.6Q100.0 89.2 98.3 92.4z" fill="url(#tu)"/><path d="M104.2 89.8Q108.8 93.8 106.0 97.8" fill="none" stroke="#b07c00" stroke-width=".6" opacity=".6"/><path d="M138.5 89.0C138.5 97.0 150.5 97.0 150.5 89.0Q149.0 85.0 146.6 86.8Q144.5 84.5 142.4 86.8Q140.0 85.0 138.5 89.0z" fill="url(#tu)"/><path d="M143.6 85.8Q147.5 90.8 145.1 95.8" fill="none" stroke="#b07c00" stroke-width=".6" opacity=".6"/><path d="M169.2 87.0C169.2 95.0 183.2 95.0 183.2 87.0Q181.5 83.0 178.7 84.8Q176.2 82.5 173.8 84.8Q171.0 83.0 169.2 87.0z" fill="url(#tu)"/><path d="M175.2 83.8Q179.7 88.8 176.9 93.8" fill="none" stroke="#b07c00" stroke-width=".6" opacity=".6"/><path d="M13.5 86.0C13.5 94.0 25.5 94.0 25.5 86.0Q24.0 82.0 21.6 83.8Q19.5 81.5 17.4 83.8Q15.0 82.0 13.5 86.0z" fill="url(#tu)"/><path d="M18.6 82.8Q22.5 87.8 20.1 92.8" fill="none" stroke="#b07c00" stroke-width=".6" opacity=".6"/><path d="M110.5 80.7C110.5 90.3 126.5 90.3 126.5 80.7Q124.5 75.9 121.3 78.0Q118.5 75.3 115.7 78.0Q112.5 75.9 110.5 80.7z" fill="url(#tu)"/><path d="M117.3 76.8Q122.5 82.8 119.3 88.8" fill="none" stroke="#b07c00" stroke-width=".6" opacity=".6"/><path d="M33.5 76.9C33.5 88.1 51.5 88.1 51.5 76.9Q49.2 71.3 45.6 73.8Q42.5 70.6 39.4 73.8Q35.8 71.3 33.5 76.9z" fill="url(#tu)"/><path d="M41.1 72.4Q47.0 79.4 43.4 86.4" fill="none" stroke="#b07c00" stroke-width=".6" opacity=".6"/><path d="M184.5 75.7C184.5 85.3 190.5 85.3 190.5 75.7Q189.8 70.9 188.6 73.0Q187.5 70.3 186.4 73.0Q185.2 70.9 184.5 75.7z" fill="url(#tu)"/><path d="M187.1 71.8Q189.0 77.8 187.8 83.8" fill="none" stroke="#b07c00" stroke-width=".6" opacity=".6"/><path d="M154.5 75.2C154.5 84.8 168.5 84.8 168.5 75.2Q166.8 70.4 163.9 72.5Q161.5 69.8 159.1 72.5Q156.2 70.4 154.5 75.2z" fill="url(#tu)"/><path d="M160.4 71.3Q165.0 77.3 162.2 83.3" fill="none" stroke="#b07c00" stroke-width=".6" opacity=".6"/><path d="M-1.8 74.2C-1.8 83.8 14.2 83.8 14.2 74.2Q12.2 69.4 9.0 71.5Q6.2 68.8 3.4 71.5Q0.2 69.4 -1.8 74.2z" fill="url(#tu)"/><path d="M5.0 70.3Q10.2 76.3 7.0 82.3" fill="none" stroke="#b07c00" stroke-width=".6" opacity=".6"/><path d="M65.5 74.2C65.5 83.8 77.5 83.8 77.5 74.2Q76.0 69.4 73.6 71.5Q71.5 68.8 69.4 71.5Q67.0 69.4 65.5 74.2z" fill="url(#tu)"/><path d="M70.6 70.3Q74.5 76.3 72.1 82.3" fill="none" stroke="#b07c00" stroke-width=".6" opacity=".6"/><path d="M55.5 72.1C55.5 81.7 69.5 81.7 69.5 72.1Q67.8 67.3 65.0 69.4Q62.5 66.7 60.0 69.4Q57.2 67.3 55.5 72.1z" fill="url(#tu)"/><path d="M61.5 68.2Q66.0 74.2 63.2 80.2" fill="none" stroke="#b07c00" stroke-width=".6" opacity=".6"/><path d="M84.5 70.7C84.5 80.3 96.5 80.3 96.5 70.7Q95.0 65.9 92.6 68.0Q90.5 65.3 88.4 68.0Q86.0 65.9 84.5 70.7z" fill="url(#tu)"/><path d="M89.6 66.8Q93.5 72.8 91.1 78.8" fill="none" stroke="#b07c00" stroke-width=".6" opacity=".6"/><path d="M117.1 68.3C117.1 79.5 133.1 79.5 133.1 68.3Q131.1 62.8 127.9 65.2Q125.1 62.0 122.3 65.2Q119.1 62.8 117.1 68.3z" fill="url(#tu)"/><path d="M123.9 63.8Q129.1 70.8 125.9 77.8" fill="none" stroke="#b07c00" stroke-width=".6" opacity=".6"/><path d="M132.5 64.3C132.5 75.5 148.5 75.5 148.5 64.3Q146.5 58.8 143.3 61.2Q140.5 58.0 137.7 61.2Q134.5 58.8 132.5 64.3z" fill="url(#tu)"/><path d="M139.3 59.8Q144.5 66.8 141.3 73.8" fill="none" stroke="#b07c00" stroke-width=".6" opacity=".6"/><path d="M76.5 63.3C76.5 74.5 90.5 74.5 90.5 63.3Q88.8 57.8 86.0 60.2Q83.5 57.0 81.0 60.2Q78.2 57.8 76.5 63.3z" fill="url(#tu)"/><path d="M82.5 58.8Q87.0 65.8 84.2 72.8" fill="none" stroke="#b07c00" stroke-width=".6" opacity=".6"/><path d="M91.1 60.3C91.1 71.5 111.1 71.5 111.1 60.3Q108.6 54.8 104.6 57.2Q101.1 54.0 97.6 57.2Q93.6 54.8 91.1 60.3z" fill="url(#tu)"/><path d="M99.6 55.8Q106.1 62.8 102.1 69.8" fill="none" stroke="#b07c00" stroke-width=".6" opacity=".6"/><path d="M152.5 60.0C152.5 72.8 170.5 72.8 170.5 60.0Q168.2 53.6 164.7 56.4Q161.5 52.8 158.3 56.4Q154.8 53.6 152.5 60.0z" fill="url(#tu)"/><path d="M160.2 54.8Q166.0 62.8 162.4 70.8" fill="none" stroke="#b07c00" stroke-width=".6" opacity=".6"/><path d="M38.9 58.0C38.9 70.8 56.9 70.8 56.9 58.0Q54.6 51.6 51.0 54.4Q47.9 50.8 44.7 54.4Q41.1 51.6 38.9 58.0z" fill="url(#tu)"/><path d="M46.5 52.8Q52.4 60.8 48.8 68.8" fill="none" stroke="#b07c00" stroke-width=".6" opacity=".6"/><path d="M165.0 58.3C165.0 69.5 179.0 69.5 179.0 58.3Q177.2 52.8 174.4 55.2Q172.0 52.0 169.6 55.2Q166.8 52.8 165.0 58.3z" fill="url(#tu)"/><path d="M170.9 53.8Q175.5 60.8 172.7 67.8" fill="none" stroke="#b07c00" stroke-width=".6" opacity=".6"/><path d="M17.0 57.3C17.0 68.5 35.0 68.5 35.0 57.3Q32.8 51.8 29.1 54.2Q26.0 51.0 22.9 54.2Q19.2 51.8 17.0 57.3z" fill="url(#tu)"/><path d="M24.6 52.8Q30.5 59.8 26.9 66.8" fill="none" stroke="#b07c00" stroke-width=".6" opacity=".6"/><path d="M62.9 55.0C62.9 66.2 80.9 66.2 80.9 55.0Q78.6 49.4 75.0 51.9Q71.9 48.7 68.7 51.9Q65.1 49.4 62.9 55.0z" fill="url(#tu)"/><path d="M70.5 50.5Q76.4 57.5 72.8 64.5" fill="none" stroke="#b07c00" stroke-width=".6" opacity=".6"/><path d="M179.5 55.0C179.5 66.2 189.5 66.2 189.5 55.0Q188.2 49.4 186.2 51.9Q184.5 48.7 182.8 51.9Q180.8 49.4 179.5 55.0z" fill="url(#tu)"/><path d="M183.8 50.5Q187.0 57.5 185.0 64.5" fill="none" stroke="#b07c00" stroke-width=".6" opacity=".6"/><path d="M-0.5 50.0C-0.5 62.8 7.5 62.8 7.5 50.0Q6.5 43.6 4.9 46.4Q3.5 42.8 2.1 46.4Q0.5 43.6 -0.5 50.0z" fill="url(#tu)"/><path d="M2.9 44.8Q5.5 52.8 3.9 60.8" fill="none" stroke="#b07c00" stroke-width=".6" opacity=".6"/><path d="M145.3 50.2C145.3 59.8 161.3 59.8 161.3 50.2Q159.3 45.4 156.1 47.5Q153.3 44.8 150.5 47.5Q147.3 45.4 145.3 50.2z" fill="url(#tu)"/><path d="M152.1 46.3Q157.3 52.3 154.1 58.3" fill="none" stroke="#b07c00" stroke-width=".6" opacity=".6"/><path d="M107.5 49.2C107.5 58.8 123.5 58.8 123.5 49.2Q121.5 44.4 118.3 46.5Q115.5 43.8 112.7 46.5Q109.5 44.4 107.5 49.2z" fill="url(#tu)"/><path d="M114.3 45.3Q119.5 51.3 116.3 57.3" fill="none" stroke="#b07c00" stroke-width=".6" opacity=".6"/><path d="M167.2 45.0C167.2 57.8 185.2 57.8 185.2 45.0Q183.0 38.6 179.4 41.4Q176.2 37.8 173.1 41.4Q169.5 38.6 167.2 45.0z" fill="url(#tu)"/><path d="M174.9 39.8Q180.7 47.8 177.1 55.8" fill="none" stroke="#b07c00" stroke-width=".6" opacity=".6"/><path d="M15.1 41.3C15.1 57.3 39.1 57.3 39.1 41.3Q36.1 33.3 31.3 36.8Q27.1 32.3 22.9 36.8Q18.1 33.3 15.1 41.3z" fill="url(#tu)"/><path d="M25.3 34.8Q33.1 44.8 28.3 54.8" fill="none" stroke="#b07c00" stroke-width=".6" opacity=".6"/><path d="M82.5 42.0C82.5 54.8 98.5 54.8 98.5 42.0Q96.5 35.6 93.3 38.4Q90.5 34.8 87.7 38.4Q84.5 35.6 82.5 42.0z" fill="url(#tu)"/><path d="M89.3 36.8Q94.5 44.8 91.3 52.8" fill="none" stroke="#b07c00" stroke-width=".6" opacity=".6"/><path d="M50.5 40.6C50.5 55.0 72.5 55.0 72.5 40.6Q69.8 33.4 65.3 36.6Q61.5 32.5 57.6 36.6Q53.2 33.4 50.5 40.6z" fill="url(#tu)"/><path d="M59.9 34.8Q67.0 43.8 62.6 52.8" fill="none" stroke="#b07c00" stroke-width=".6" opacity=".6"/><path d="M134.9 39.6C134.9 54.0 154.9 54.0 154.9 39.6Q152.4 32.4 148.4 35.6Q144.9 31.5 141.4 35.6Q137.4 32.4 134.9 39.6z" fill="url(#tu)"/><path d="M143.4 33.8Q149.9 42.8 145.9 51.8" fill="none" stroke="#b07c00" stroke-width=".6" opacity=".6"/><path d="M180.0 40.0C180.0 52.8 190.0 52.8 190.0 40.0Q188.8 33.6 186.8 36.4Q185.0 32.8 183.2 36.4Q181.2 33.6 180.0 40.0z" fill="url(#tu)"/><path d="M184.2 34.8Q187.5 42.8 185.5 50.8" fill="none" stroke="#b07c00" stroke-width=".6" opacity=".6"/><path d="M70.3 39.0C70.3 51.8 90.3 51.8 90.3 39.0Q87.8 32.6 83.8 35.4Q80.3 31.8 76.8 35.4Q72.8 32.6 70.3 39.0z" fill="url(#tu)"/><path d="M78.8 33.8Q85.3 41.8 81.3 49.8" fill="none" stroke="#b07c00" stroke-width=".6" opacity=".6"/><path d="M123.5 36.6C123.5 51.0 141.5 51.0 141.5 36.6Q139.2 29.4 135.7 32.6Q132.5 28.5 129.3 32.6Q125.8 29.4 123.5 36.6z" fill="url(#tu)"/><path d="M131.2 30.8Q137.0 39.8 133.4 48.8" fill="none" stroke="#b07c00" stroke-width=".6" opacity=".6"/><path d="M1.5 33.9C1.5 51.5 29.5 51.5 29.5 33.9Q26.0 25.1 20.4 29.0Q15.5 24.0 10.6 29.0Q5.0 25.1 1.5 33.9z" fill="url(#tu)"/><path d="M13.4 26.8Q22.5 37.8 16.9 48.8" fill="none" stroke="#b07c00" stroke-width=".6" opacity=".6"/><path d="M103.5 32.3C103.5 48.3 129.5 48.3 129.5 32.3Q126.2 24.3 121.0 27.8Q116.5 23.3 112.0 27.8Q106.8 24.3 103.5 32.3z" fill="url(#tu)"/><path d="M114.5 25.8Q123.0 35.8 117.8 45.8" fill="none" stroke="#b07c00" stroke-width=".6" opacity=".6"/><path d="M152.5 32.3C152.5 48.3 176.5 48.3 176.5 32.3Q173.5 24.3 168.7 27.8Q164.5 23.3 160.3 27.8Q155.5 24.3 152.5 32.3z" fill="url(#tu)"/><path d="M162.7 25.8Q170.5 35.8 165.7 45.8" fill="none" stroke="#b07c00" stroke-width=".6" opacity=".6"/><path d="M28.5 26.2C28.5 45.4 60.5 45.4 60.5 26.2Q56.5 16.6 50.1 20.8Q44.5 15.4 38.9 20.8Q32.5 16.6 28.5 26.2z" fill="url(#tu)"/><path d="M42.1 18.4Q52.5 30.4 46.1 42.4" fill="none" stroke="#b07c00" stroke-width=".6" opacity=".6"/><rect x="4.2" y="2.2" width="3.600" height="3.600" rx=".8" fill="#f0e090" opacity=".85"/><rect x="2.8" y="7" width="6.400" height="1.200" fill="#dfe8ff" opacity=".4"/><rect x="4.2" y="14.2" width="3.600" height="3.600" rx=".8" fill="#a0c8f8" opacity=".85"/><rect x="2.8" y="19" width="6.400" height="1.200" fill="#dfe8ff" opacity=".4"/><rect x="4.2" y="26.2" width="3.600" height="3.600" rx=".8" fill="#e8f0f8" opacity=".85"/><rect x="2.8" y="31" width="6.400" height="1.200" fill="#dfe8ff" opacity=".4"/><rect x="4.2" y="38.2" width="3.600" height="3.600" rx=".8" fill="#f0d060" opacity=".85"/><rect x="2.8" y="43" width="6.400" height="1.200" fill="#dfe8ff" opacity=".4"/><rect x="4.2" y="50.2" width="3.600" height="3.600" rx=".8" fill="#e04030" opacity=".85"/><rect x="2.8" y="55" width="6.400" height="1.200" fill="#dfe8ff" opacity=".4"/><rect x="4.2" y="62.2" width="3.600" height="3.600" rx=".8" fill="#60a0f0" opacity=".85"/><rect x="2.8" y="67" width="6.400" height="1.200" fill="#dfe8ff" opacity=".4"/><rect x="4.2" y="74.2" width="3.600" height="3.600" rx=".8" fill="#d0d0d0" opacity=".85"/><rect x="2.8" y="79" width="6.400" height="1.200" fill="#dfe8ff" opacity=".4"/><rect x="16.2" y="2.2" width="3.600" height="3.600" rx=".8" fill="#f0e090" opacity=".85"/><rect x="14.8" y="7" width="6.400" height="1.200" fill="#dfe8ff" opacity=".4"/><rect x="16.2" y="14.2" width="3.600" height="3.600" rx=".8" fill="#a0c8f8" opacity=".85"/><rect x="14.8" y="19" width="6.400" height="1.200" fill="#dfe8ff" opacity=".4"/><rect x="144" y="97" width="34" height="6.500" rx="1" fill="#fbf7d0" stroke="#555" stroke-width=".3"/><rect x="145.500" y="98.200" width="2" height="2" fill="#d02020"/><rect x="149" y="98.500" width="26" height=".8" fill="#555"/><rect x="0" y="106.5" width="188" height="5.5" fill="#2459d8"/><rect x="0" y="106.5" width="188" height="1" fill="#4a86ee"/><path d="M0 106.5h11q2.500 2.8 0 5.5h-11z" fill="#3b9b3b"/><rect x="2.500" y="108.3" width="6" height="1.600" fill="#d8f0d0" opacity=".8"/><rect x="166" y="106.5" width="22" height="5.5" fill="#1691e8"/><g fill="#cfe3ff" opacity=".8"><rect x="168" y="108.3" width="1.800" height="1.800"/><rect x="171" y="108.3" width="1.800" height="1.800"/><rect x="174" y="108.3" width="1.800" height="1.800"/><rect x="178" y="108.3" width="7" height="1.600"/></g><g opacity=".85"><rect x="15" y="108.3" width="1.800" height="1.800" fill="#e8c040"/><rect x="18" y="108.3" width="1.800" height="1.800" fill="#d0e0ff"/><rect x="21" y="108.3" width="1.800" height="1.800" fill="#60a0ff"/></g></svg></div>
<div class="thumb" style="left:193.0px;top:236px;height:116.5px"><svg width="188" height="112.5" viewBox="0 0 188 112.5"><defs><radialGradient id="sb" cx="97" cy="55" r="112" gradientUnits="userSpaceOnUse"><stop offset="0" stop-color="#040a34"/><stop offset=".08" stop-color="#0c25a0"/><stop offset=".22" stop-color="#1448e8"/><stop offset=".55" stop-color="#0e38cc"/><stop offset="1" stop-color="#07186e"/></radialGradient><radialGradient id="sbm" cx="97" cy="55" r="112" gradientUnits="userSpaceOnUse"><stop offset="0" stop-color="#02061c" stop-opacity=".9"/><stop offset=".045" stop-color="#02061c" stop-opacity=".6"/><stop offset=".13" stop-color="#02061c" stop-opacity="0"/><stop offset=".5" stop-color="#02061c" stop-opacity="0"/><stop offset="1" stop-color="#02061c" stop-opacity=".6"/></radialGradient></defs><rect width="188" height="112.5" fill="url(#sb)"/><path d="M79.2 60.5L13.9 81.6L13.4 79.9z" fill="#2f7bff" opacity="0.68"/><path d="M100.9 64.8L134.8 146.6L132.3 147.6z" fill="#5aa0ff" opacity="0.34"/><path d="M91.5 70.6L62.7 154.7L61.9 154.4z" fill="#2a6cff" opacity="0.57"/><path d="M84.8 64.3L16.5 117.6L15.4 116.2z" fill="#0c2ab0" opacity="0.31"/><path d="M91.7 54.0L28.7 43.0L28.8 42.4z" fill="#2a6cff" opacity="0.65"/><path d="M94.5 59.9L66.0 116.3L64.7 115.6z" fill="#78b8ff" opacity="0.52"/><path d="M93.3 49.0L28.2 -55.1L30.1 -56.3z" fill="#3c84ff" opacity="0.62"/><path d="M94.1 61.6L75.1 106.1L74.5 105.9z" fill="#3c84ff" opacity="0.48"/><path d="M108.0 39.2L163.4 -42.3L164.9 -41.2z" fill="#2a6cff" opacity="0.40"/><path d="M104.9 51.1L192.5 7.4L192.9 8.1z" fill="#06104e" opacity="0.33"/><path d="M92.3 50.0L57.3 14.1L58.4 13.1z" fill="#0a1c7a" opacity="0.31"/><path d="M93.3 57.4L7.9 113.4L6.2 110.7z" fill="#2a6cff" opacity="0.33"/><path d="M100.5 43.5L121.5 -27.2L122.4 -26.9z" fill="#1a50f0" opacity="0.74"/><path d="M98.1 46.2L106.3 -26.1L107.7 -25.9z" fill="#1a50f0" opacity="0.30"/><path d="M105.3 45.5L180.9 -44.1L184.0 -41.4z" fill="#2a6cff" opacity="0.39"/><path d="M86.3 63.4L51.8 91.4L50.8 90.1z" fill="#5aa0ff" opacity="0.40"/><path d="M96.6 62.9L94.1 128.7L92.2 128.6z" fill="#3c84ff" opacity="0.33"/><path d="M97.6 57.2L118.2 131.6L116.5 132.1z" fill="#0c2ab0" opacity="0.50"/><path d="M108.9 51.9L212.1 23.6L212.7 25.8z" fill="#5aa0ff" opacity="0.58"/><path d="M92.2 67.1L57.3 155.5L56.1 155.0z" fill="#5aa0ff" opacity="0.63"/><path d="M114.8 48.0L209.0 10.3L209.5 11.5z" fill="#0c2ab0" opacity="0.34"/><path d="M107.7 58.3L164.4 75.4L164.2 76.0z" fill="#06104e" opacity="0.42"/><path d="M100.3 48.5L125.0 -2.6L126.2 -2.0z" fill="#3c84ff" opacity="0.36"/><path d="M84.0 56.7L41.6 62.9L41.5 61.6z" fill="#1a50f0" opacity="0.71"/><path d="M99.0 61.6L121.7 137.0L121.2 137.2z" fill="#2a6cff" opacity="0.32"/><path d="M93.1 74.1L86.1 111.3L85.0 111.1z" fill="#5aa0ff" opacity="0.70"/><path d="M111.3 53.2L192.9 42.1L193.2 44.3z" fill="#5aa0ff" opacity="0.57"/><path d="M104.5 51.1L163.2 19.8L163.8 21.0z" fill="#2a6cff" opacity="0.31"/><path d="M87.1 43.6L47.0 -1.6L48.0 -2.5z" fill="#3c84ff" opacity="0.33"/><path d="M79.6 49.8L-7.8 25.2L-7.0 22.6z" fill="#5aa0ff" opacity="0.66"/><path d="M109.3 47.7L201.6 -7.9L202.5 -6.3z" fill="#06104e" opacity="0.72"/><path d="M99.2 55.4L198.3 73.5L197.9 75.4z" fill="#06104e" opacity="0.56"/><path d="M86.5 46.5L-3.7 -26.4L-3.0 -27.2z" fill="#06104e" opacity="0.63"/><path d="M87.5 63.0L32.6 110.8L31.2 109.2z" fill="#2f7bff" opacity="0.34"/><path d="M97.0 42.2L96.8 -33.5L97.4 -33.5z" fill="#1a50f0" opacity="0.73"/><path d="M107.5 64.0L165.2 112.0L163.7 113.8z" fill="#2a6cff" opacity="0.47"/><path d="M104.0 63.9L166.5 140.6L164.6 142.1z" fill="#0a1c7a" opacity="0.60"/><path d="M89.6 57.8L1.1 93.3L-0.0 90.4z" fill="#1a50f0" opacity="0.59"/><path d="M98.9 49.7L118.4 -8.6L120.0 -8.1z" fill="#1a50f0" opacity="0.56"/><path d="M92.6 65.0L50.1 162.1L49.0 161.7z" fill="#2a6cff" opacity="0.62"/><path d="M101.8 53.4L178.7 27.9L179.0 28.9z" fill="#78b8ff" opacity="0.72"/><path d="M102.5 45.1L146.8 -36.1L148.2 -35.2z" fill="#0c2ab0" opacity="0.50"/><path d="M112.8 63.0L144.6 78.9L144.5 79.3z" fill="#78b8ff" opacity="0.56"/><path d="M96.2 57.2L75.7 112.0L74.2 111.4z" fill="#1e5cf8" opacity="0.39"/><path d="M98.9 39.1L110.0 -58.0L111.4 -57.8z" fill="#3c84ff" opacity="0.50"/><path d="M85.7 43.0L9.2 -36.3L11.3 -38.3z" fill="#1a50f0" opacity="0.39"/><path d="M94.8 55.3L10.4 69.1L10.2 68.2z" fill="#2a6cff" opacity="0.38"/><path d="M95.0 69.4L84.9 145.8L83.5 145.6z" fill="#0c2ab0" opacity="0.75"/><path d="M104.9 67.3L134.5 111.6L132.9 112.7z" fill="#06104e" opacity="0.72"/><path d="M95.2 45.0L79.3 -43.5L80.2 -43.6z" fill="#2a6cff" opacity="0.47"/><path d="M82.2 48.2L-17.7 4.0L-16.2 0.8z" fill="#1e5cf8" opacity="0.45"/><path d="M114.5 53.1L210.1 41.9L210.2 42.9z" fill="#3c84ff" opacity="0.40"/><path d="M112.8 43.5L171.3 -0.8L173.0 1.5z" fill="#0a1c7a" opacity="0.42"/><path d="M94.8 44.1L86.3 3.1L86.7 3.0z" fill="#0a1c7a" opacity="0.55"/><path d="M97.3 52.5L109.1 -59.1L111.2 -58.9z" fill="#3c84ff" opacity="0.49"/><path d="M111.0 58.1L217.6 80.8L217.0 83.2z" fill="#1e5cf8" opacity="0.37"/><path d="M80.0 53.2L-7.7 45.4L-7.4 42.8z" fill="#1e5cf8" opacity="0.56"/><path d="M93.3 45.8L60.5 -32.4L62.8 -33.3z" fill="#2f7bff" opacity="0.59"/><path d="M85.0 53.3L22.7 45.3L23.0 43.3z" fill="#06104e" opacity="0.73"/><path d="M102.1 49.5L138.5 9.9L139.5 10.8z" fill="#2f7bff" opacity="0.54"/><path d="M86.6 49.8L15.8 15.5L16.3 14.6z" fill="#0c2ab0" opacity="0.47"/><path d="M79.0 50.6L6.1 33.0L6.3 32.4z" fill="#0c2ab0" opacity="0.35"/><path d="M112.6 65.4L169.5 102.6L169.0 103.3z" fill="#06104e" opacity="0.42"/><path d="M87.3 56.6L-16.5 74.9L-16.7 73.8z" fill="#1e5cf8" opacity="0.54"/><path d="M99.0 56.6L152.3 99.2L151.6 100.1z" fill="#2a6cff" opacity="0.32"/><path d="M101.0 60.9L157.6 144.2L157.1 144.6z" fill="#1a50f0" opacity="0.58"/><path d="M100.3 57.6L169.5 109.7L168.1 111.5z" fill="#78b8ff" opacity="0.62"/><path d="M96.3 52.7L65.3 -40.5L68.1 -41.4z" fill="#2f7bff" opacity="0.58"/><path d="M85.7 52.2L31.2 39.9L31.7 38.0z" fill="#1a50f0" opacity="0.68"/><path d="M92.3 51.0L12.6 -14.4L14.6 -16.7z" fill="#0a1c7a" opacity="0.71"/><path d="M89.5 72.0L70.3 116.9L69.4 116.6z" fill="#1a50f0" opacity="0.70"/><path d="M107.0 66.2L144.5 107.5L143.8 108.0z" fill="#3c84ff" opacity="0.50"/><path d="M110.7 49.7L158.4 30.5L158.8 31.8z" fill="#2a6cff" opacity="0.34"/><path d="M81.8 47.9L25.3 22.0L25.8 20.9z" fill="#2f7bff" opacity="0.59"/><path d="M87.6 69.1L35.2 151.1L32.2 149.1z" fill="#1e5cf8" opacity="0.35"/><path d="M108.0 57.6L190.1 76.3L189.6 78.2z" fill="#5aa0ff" opacity="0.39"/><path d="M100.6 58.2L151.8 102.7L151.3 103.3z" fill="#3c84ff" opacity="0.56"/><path d="M99.3 57.5L135.8 97.7L134.8 98.6z" fill="#06104e" opacity="0.51"/><path d="M84.2 53.8L46.1 50.5L46.2 49.7z" fill="#2a6cff" opacity="0.68"/><path d="M103.4 68.9L132.2 129.5L130.8 130.2z" fill="#1a50f0" opacity="0.57"/><path d="M103.5 59.4L144.4 86.2L143.6 87.5z" fill="#06104e" opacity="0.56"/><path d="M100.0 62.6L138.3 158.0L136.1 158.9z" fill="#78b8ff" opacity="0.71"/><path d="M96.4 38.3L93.0 -27.4L95.2 -27.4z" fill="#0a1c7a" opacity="0.70"/><path d="M91.6 40.2L68.0 -22.2L70.0 -22.9z" fill="#5aa0ff" opacity="0.33"/><path d="M95.8 56.8L54.9 121.2L53.7 120.4z" fill="#0c2ab0" opacity="0.32"/><path d="M95.9 62.3L88.4 121.7L86.3 121.4z" fill="#06104e" opacity="0.56"/><path d="M77.4 50.9L-2.4 34.9L-2.0 33.3z" fill="#3c84ff" opacity="0.64"/><path d="M110.0 53.4L205.2 41.0L205.3 41.7z" fill="#78b8ff" opacity="0.50"/><path d="M83.3 54.6L46.1 54.1L46.2 52.8z" fill="#78b8ff" opacity="0.41"/><path d="M106.2 48.8L201.9 -17.2L203.4 -15.1z" fill="#0c2ab0" opacity="0.68"/><path d="M108.0 63.0L173.6 109.4L172.6 110.7z" fill="#2a6cff" opacity="0.47"/><path d="M115.0 47.7L206.4 9.6L207.1 11.3z" fill="#2f7bff" opacity="0.58"/><path d="M105.9 58.4L183.5 86.8L182.5 89.4z" fill="#0c2ab0" opacity="0.44"/><path d="M90.3 53.7L-25.3 32.5L-24.9 30.3z" fill="#78b8ff" opacity="0.31"/><path d="M98.9 41.7L107.8 -27.0L109.5 -26.8z" fill="#06104e" opacity="0.32"/><path d="M92.0 66.4L54.9 154.3L53.3 153.6z" fill="#0a1c7a" opacity="0.33"/><path d="M105.8 49.1L202.4 -17.4L203.6 -15.6z" fill="#1a50f0" opacity="0.32"/><path d="M112.0 65.7L147.6 90.0L146.7 91.4z" fill="#1a50f0" opacity="0.57"/><path d="M104.6 61.8L147.2 98.3L146.2 99.4z" fill="#2a6cff" opacity="0.46"/><path d="M99.5 58.7L144.5 123.5L143.4 124.2z" fill="#0c2ab0" opacity="0.42"/><path d="M83.1 47.1L16.2 10.0L17.0 8.6z" fill="#5aa0ff" opacity="0.73"/><path d="M96.6 51.0L84.3 -65.7L85.8 -65.9z" fill="#2f7bff" opacity="0.58"/><path d="M87.9 66.1L37.2 129.0L36.2 128.3z" fill="#0c2ab0" opacity="0.39"/><path d="M93.6 73.8L81.4 143.8L80.3 143.6z" fill="#1a50f0" opacity="0.70"/><path d="M103.7 56.7L178.5 75.3L178.4 76.0z" fill="#0c2ab0" opacity="0.32"/><path d="M99.7 70.4L118.9 176.1L117.3 176.3z" fill="#5aa0ff" opacity="0.55"/><path d="M89.8 47.2L51.2 6.3L52.0 5.6z" fill="#0a1c7a" opacity="0.52"/><path d="M108.0 67.2L155.3 117.9L153.5 119.6z" fill="#0c2ab0" opacity="0.68"/><path d="M98.8 39.7L105.9 -25.7L107.3 -25.5z" fill="#5aa0ff" opacity="0.47"/><path d="M92.5 48.5L42.4 -21.3L44.8 -23.0z" fill="#5aa0ff" opacity="0.49"/><path d="M84.9 68.0L58.8 96.4L58.5 96.0z" fill="#3c84ff" opacity="0.49"/><path d="M87.6 50.7L-9.1 8.4L-7.8 5.6z" fill="#2a6cff" opacity="0.33"/><path d="M97.8 58.4L114.8 127.1L113.2 127.5z" fill="#0a1c7a" opacity="0.43"/><path d="M106.4 66.8L146.9 116.6L146.0 117.4z" fill="#3c84ff" opacity="0.45"/><path d="M80.0 61.6L-0.4 94.1L-1.2 92.0z" fill="#78b8ff" opacity="0.50"/><path d="M99.5 47.7L123.3 -22.6L124.4 -22.3z" fill="#2f7bff" opacity="0.41"/><path d="M91.5 61.5L44.8 117.8L43.8 116.9z" fill="#06104e" opacity="0.66"/><path d="M96.4 46.0L92.1 -7.2L93.1 -7.3z" fill="#0c2ab0" opacity="0.55"/><path d="M104.9 71.0L130.1 119.5L128.4 120.3z" fill="#2a6cff" opacity="0.40"/><path d="M103.8 57.6L145.5 73.1L145.3 73.6z" fill="#06104e" opacity="0.33"/><path d="M93.6 54.0L42.7 39.3L43.1 37.9z" fill="#3c84ff" opacity="0.70"/><path d="M101.0 57.3L192.1 109.6L190.9 111.7z" fill="#06104e" opacity="0.41"/><path d="M99.1 66.2L118.9 164.0L116.1 164.5z" fill="#06104e" opacity="0.46"/><path d="M98.6 50.8L127.7 -28.6L129.0 -28.1z" fill="#3c84ff" opacity="0.62"/><path d="M111.5 46.4L185.5 1.6L186.4 3.1z" fill="#2a6cff" opacity="0.66"/><path d="M106.7 38.4L146.6 -33.2L149.2 -31.8z" fill="#2f7bff" opacity="0.46"/><path d="M115.6 56.2L220.0 62.3L220.0 63.4z" fill="#1a50f0" opacity="0.63"/><path d="M102.0 54.7L163.2 50.7L163.3 51.8z" fill="#06104e" opacity="0.54"/><path d="M95.4 65.4L82.2 162.5L79.1 162.0z" fill="#78b8ff" opacity="0.59"/><path d="M97.5 51.9L110.6 -30.6L111.5 -30.5z" fill="#0c2ab0" opacity="0.52"/><path d="M98.7 49.7L121.0 -20.0L122.1 -19.7z" fill="#0c2ab0" opacity="0.41"/><path d="M95.8 49.1L83.1 -8.3L84.4 -8.6z" fill="#78b8ff" opacity="0.48"/><path d="M108.2 47.9L202.1 -13.3L204.1 -10.1z" fill="#2f7bff" opacity="0.52"/><path d="M95.8 73.4L93.0 132.3L90.8 132.1z" fill="#2f7bff" opacity="0.65"/><path d="M104.7 60.0L153.9 91.2L152.8 92.8z" fill="#5aa0ff" opacity="0.66"/><path d="M88.5 62.5L43.5 103.1L42.6 102.1z" fill="#2a6cff" opacity="0.60"/><path d="M97.8 65.5L103.4 134.5L102.9 134.5z" fill="#1a50f0" opacity="0.62"/><path d="M93.2 52.0L37.2 8.5L37.7 7.9z" fill="#78b8ff" opacity="0.71"/><path d="M102.7 40.7L133.2 -37.7L134.1 -37.4z" fill="#2f7bff" opacity="0.54"/><path d="M98.2 56.6L165.8 148.0L163.4 149.8z" fill="#5aa0ff" opacity="0.67"/><path d="M109.9 62.4L147.4 83.3L147.0 83.9z" fill="#1e5cf8" opacity="0.61"/><path d="M107.2 60.9L176.1 99.0L174.9 101.0z" fill="#2a6cff" opacity="0.66"/><path d="M93.8 56.8L-2.8 114.4L-4.5 111.4z" fill="#1a50f0" opacity="0.32"/><path d="M80.7 64.9L-11.0 122.0L-12.3 119.9z" fill="#0a1c7a" opacity="0.44"/><path d="M106.2 59.8L192.6 103.6L191.9 105.0z" fill="#0a1c7a" opacity="0.33"/><path d="M106.0 65.9L167.6 139.0L165.7 140.6z" fill="#3c84ff" opacity="0.59"/><path d="M111.7 56.1L165.8 59.8L165.7 60.9z" fill="#0c2ab0" opacity="0.35"/><path d="M99.4 38.0L110.2 -51.7L113.2 -51.3z" fill="#0c2ab0" opacity="0.37"/><path d="M86.2 43.9L7.9 -34.5L10.6 -37.2z" fill="#06104e" opacity="0.55"/><path d="M104.5 59.6L147.4 85.3L147.1 85.8z" fill="#78b8ff" opacity="0.73"/><path d="M89.6 51.9L-10.8 11.7L-9.7 9.0z" fill="#3c84ff" opacity="0.35"/><path d="M87.4 45.8L50.4 10.7L50.8 10.2z" fill="#1a50f0" opacity="0.48"/><path d="M98.9 51.9L131.8 -3.6L133.0 -2.8z" fill="#5aa0ff" opacity="0.74"/><path d="M89.5 58.3L-8.4 103.2L-9.6 100.4z" fill="#2f7bff" opacity="0.36"/><path d="M101.0 68.9L121.9 140.0L121.1 140.3z" fill="#06104e" opacity="0.58"/><path d="M95.9 47.4L79.4 -56.7L81.9 -57.1z" fill="#1a50f0" opacity="0.60"/><path d="M90.8 50.0L36.8 6.4L37.1 6.0z" fill="#1e5cf8" opacity="0.35"/><path d="M85.4 66.3L14.4 136.5L12.9 134.9z" fill="#0c2ab0" opacity="0.62"/><path d="M96.8 62.4L96.0 123.7L94.6 123.7z" fill="#0c2ab0" opacity="0.53"/><path d="M109.4 70.4L155.3 125.3L153.5 126.7z" fill="#1a50f0" opacity="0.56"/><path d="M112.8 57.7L157.2 64.5L156.9 65.9z" fill="#1e5cf8" opacity="0.56"/><path d="M90.9 37.3L70.7 -19.4L71.8 -19.8z" fill="#1e5cf8" opacity="0.70"/><path d="M91.0 56.9L6.1 84.4L5.4 82.1z" fill="#2f7bff" opacity="0.55"/><path d="M79.9 48.2L-23.5 7.9L-22.9 6.3z" fill="#0a1c7a" opacity="0.57"/><path d="M102.2 60.0L185.5 138.6L183.2 141.0z" fill="#1a50f0" opacity="0.64"/><path d="M88.7 64.7L22.5 142.5L21.6 141.7z" fill="#1e5cf8" opacity="0.31"/><path d="M105.0 72.1L142.1 147.2L139.2 148.6z" fill="#78b8ff" opacity="0.64"/><path d="M104.5 44.3L153.9 -28.7L156.4 -27.0z" fill="#2a6cff" opacity="0.37"/><path d="M87.2 61.0L46.5 86.4L46.3 86.1z" fill="#06104e" opacity="0.38"/><path d="M84.9 53.5L21.0 46.0L21.1 45.0z" fill="#2a6cff" opacity="0.62"/><path d="M99.6 44.3L110.1 -1.7L111.1 -1.5z" fill="#0a1c7a" opacity="0.49"/><path d="M85.9 44.0L17.6 -21.3L19.5 -23.2z" fill="#1e5cf8" opacity="0.70"/><path d="M83.0 58.3L-15.6 83.0L-16.3 79.7z" fill="#3c84ff" opacity="0.55"/><path d="M106.5 48.6L166.6 6.9L167.5 8.3z" fill="#2a6cff" opacity="0.44"/><path d="M114.1 61.1L199.7 90.3L198.8 92.8z" fill="#0c2ab0" opacity="0.44"/><path d="M101.4 37.8L113.1 -12.6L115.1 -12.2z" fill="#1e5cf8" opacity="0.41"/><path d="M104.4 47.4L137.1 12.5L138.5 13.8z" fill="#1a50f0" opacity="0.55"/><path d="M87.1 40.1L23.6 -52.2L26.9 -54.4z" fill="#0a1c7a" opacity="0.69"/><path d="M91.7 57.8L1.1 108.3L-0.3 105.7z" fill="#0c2ab0" opacity="0.36"/><path d="M100.9 56.9L206.0 106.5L205.0 108.6z" fill="#0c2ab0" opacity="0.73"/><path d="M104.4 55.0L173.0 54.8L173.0 55.7z" fill="#3c84ff" opacity="0.50"/><path d="M92.7 56.4L-2.9 88.5L-3.5 86.5z" fill="#1a50f0" opacity="0.32"/><path d="M104.4 56.5L185.4 71.2L184.9 73.8z" fill="#1e5cf8" opacity="0.70"/><path d="M101.2 68.8L113.8 107.1L112.3 107.5z" fill="#0a1c7a" opacity="0.68"/><path d="M93.9 59.0L24.6 151.2L22.9 149.8z" fill="#2f7bff" opacity="0.39"/><path d="M85.0 41.8L60.4 15.3L60.9 14.9z" fill="#3c84ff" opacity="0.44"/><path d="M99.9 48.7L130.3 -21.7L132.7 -20.6z" fill="#5aa0ff" opacity="0.45"/><path d="M106.1 52.5L158.0 37.2L158.5 38.8z" fill="#78b8ff" opacity="0.35"/><path d="M91.6 41.0L63.9 -28.8L65.0 -29.2z" fill="#78b8ff" opacity="0.66"/><path d="M84.5 67.9L30.2 125.6L28.6 124.0z" fill="#1a50f0" opacity="0.74"/><path d="M101.8 51.3L144.8 17.7L145.2 18.3z" fill="#3c84ff" opacity="0.51"/><path d="M100.0 56.5L206.6 109.9L204.9 113.1z" fill="#2a6cff" opacity="0.57"/><path d="M93.5 71.1L85.1 110.7L84.4 110.6z" fill="#78b8ff" opacity="0.74"/><path d="M102.6 69.1L116.7 103.5L116.1 103.7z" fill="#5aa0ff" opacity="0.74"/><path d="M112.2 58.3L176.1 71.2L175.8 72.6z" fill="#1e5cf8" opacity="0.33"/><path d="M113.9 62.2L167.0 83.7L166.2 85.5z" fill="#1e5cf8" opacity="0.65"/><path d="M79.9 53.2L-7.3 45.0L-7.1 43.0z" fill="#2f7bff" opacity="0.63"/><path d="M81.4 51.9L39.1 44.0L39.3 42.7z" fill="#06104e" opacity="0.41"/><path d="M82.0 60.9L-7.9 97.8L-9.0 95.0z" fill="#1a50f0" opacity="0.42"/><path d="M84.6 51.5L28.5 36.5L29.1 34.6z" fill="#1a50f0" opacity="0.57"/><path d="M93.1 37.7L82.2 -7.7L83.5 -8.0z" fill="#5aa0ff" opacity="0.57"/><path d="M88.4 48.0L12.4 -11.9L14.2 -14.1z" fill="#2a6cff" opacity="0.33"/><path d="M106.8 48.5L191.0 -8.3L192.3 -6.3z" fill="#1a50f0" opacity="0.58"/><path d="M110.7 59.8L206.3 92.5L205.7 94.4z" fill="#2f7bff" opacity="0.65"/><path d="M98.3 41.4L104.9 -35.5L106.6 -35.3z" fill="#06104e" opacity="0.41"/><path d="M106.1 69.3L158.8 149.6L156.5 151.0z" fill="#2a6cff" opacity="0.44"/><path d="M82.6 58.0L-26.5 82.7L-27.1 79.7z" fill="#5aa0ff" opacity="0.52"/><path d="M97.3 50.4L101.7 -31.3L104.5 -31.1z" fill="#2a6cff" opacity="0.30"/><path d="M93.9 57.0L17.8 106.5L16.8 104.9z" fill="#1e5cf8" opacity="0.49"/><path d="M114.7 64.2L195.7 106.0L195.3 106.7z" fill="#0c2ab0" opacity="0.40"/><path d="M96.9 61.3L96.1 141.9L94.4 141.9z" fill="#1a50f0" opacity="0.46"/><path d="M90.2 66.1L70.1 100.8L68.6 100.0z" fill="#06104e" opacity="0.56"/><path d="M109.2 54.6L219.8 49.4L219.9 52.5z" fill="#0c2ab0" opacity="0.72"/><path d="M105.3 71.9L127.4 114.8L125.7 115.6z" fill="#06104e" opacity="0.65"/><path d="M98.1 60.2L118.0 146.6L116.6 146.9z" fill="#5aa0ff" opacity="0.52"/><path d="M84.3 64.2L26.4 107.3L25.3 105.7z" fill="#1e5cf8" opacity="0.75"/><path d="M94.6 49.9L61.3 -17.3L63.3 -18.3z" fill="#3c84ff" opacity="0.32"/><path d="M94.8 68.0L83.2 145.5L80.5 145.0z" fill="#78b8ff" opacity="0.53"/><path d="M91.6 52.6L43.6 31.7L44.1 30.5z" fill="#2a6cff" opacity="0.37"/><path d="M111.5 48.9L196.1 12.4L196.8 13.9z" fill="#3c84ff" opacity="0.31"/><path d="M95.5 58.1L45.1 163.9L43.4 163.0z" fill="#0a1c7a" opacity="0.42"/><path d="M102.4 49.9L167.5 -13.9L169.1 -12.3z" fill="#1e5cf8" opacity="0.32"/><path d="M98.5 57.1L141.4 115.4L140.1 116.4z" fill="#06104e" opacity="0.52"/><path d="M92.9 43.9L70.4 -15.3L71.8 -15.8z" fill="#1e5cf8" opacity="0.60"/><path d="M101.2 60.6L161.9 140.1L160.9 140.8z" fill="#06104e" opacity="0.36"/><path d="M93.2 54.6L17.7 47.2L17.9 46.0z" fill="#0c2ab0" opacity="0.40"/><path d="M109.9 58.4L189.3 78.8L189.1 79.4z" fill="#78b8ff" opacity="0.60"/><path d="M108.0 59.9L168.9 85.9L168.0 87.9z" fill="#3c84ff" opacity="0.73"/><path d="M106.1 45.1L135.5 12.7L136.0 13.1z" fill="#06104e" opacity="0.35"/><path d="M78.3 55.8L24.3 58.9L24.3 57.6z" fill="#78b8ff" opacity="0.40"/><path d="M111.1 47.9L166.5 19.4L166.9 20.2z" fill="#1a50f0" opacity="0.53"/><path d="M96.3 38.5L91.7 -33.1L94.3 -33.2z" fill="#78b8ff" opacity="0.62"/><path d="M94.7 54.2L19.9 29.3L20.5 27.4z" fill="#0a1c7a" opacity="0.71"/><path d="M104.5 50.4L197.0 -7.2L197.8 -5.9z" fill="#78b8ff" opacity="0.51"/><path d="M95.9 57.2L61.9 124.4L61.0 123.9z" fill="#0a1c7a" opacity="0.55"/><path d="M96.6 60.3L91.5 142.4L89.4 142.2z" fill="#0c2ab0" opacity="0.45"/><path d="M108.8 46.2L150.8 14.5L151.0 14.8z" fill="#3c84ff" opacity="0.58"/><path d="M90.1 48.5L44.3 5.8L45.1 4.9z" fill="#1e5cf8" opacity="0.70"/><path d="M95.0 56.8L52.8 96.8L51.5 95.5z" fill="#2f7bff" opacity="0.42"/><path d="M94.6 55.1L-1.4 59.0L-1.4 57.2z" fill="#78b8ff" opacity="0.40"/><path d="M96.1 53.2L56.8 -29.4L57.8 -29.9z" fill="#06104e" opacity="0.30"/><path d="M81.9 50.4L42.9 39.4L43.4 37.8z" fill="#2f7bff" opacity="0.70"/><path d="M94.6 48.7L75.2 0.9L76.6 0.4z" fill="#2a6cff" opacity="0.44"/><path d="M94.0 41.0L68.5 -68.9L71.5 -69.5z" fill="#5aa0ff" opacity="0.37"/><path d="M88.2 46.6L39.0 0.5L40.1 -0.6z" fill="#78b8ff" opacity="0.47"/><path d="M90.3 43.1L57.4 -13.4L58.7 -14.1z" fill="#5aa0ff" opacity="0.71"/><path d="M95.4 35.3L86.3 -59.9L89.6 -60.2z" fill="#78b8ff" opacity="0.35"/><path d="M86.8 58.2L37.1 74.7L36.6 73.1z" fill="#06104e" opacity="0.69"/><path d="M107.5 58.7L204.6 91.8L204.1 93.1z" fill="#06104e" opacity="0.41"/><path d="M87.5 44.3L53.8 6.9L54.5 6.2z" fill="#1a50f0" opacity="0.68"/><path d="M101.5 46.6L146.5 -39.4L148.4 -38.3z" fill="#0c2ab0" opacity="0.63"/><path d="M96.3 60.6L85.7 154.0L84.7 153.9z" fill="#78b8ff" opacity="0.40"/><path d="M102.0 66.5L147.4 169.7L146.6 170.0z" fill="#5aa0ff" opacity="0.42"/><path d="M95.2 68.9L86.8 135.3L85.8 135.2z" fill="#5aa0ff" opacity="0.32"/><path d="M96.4 52.3L80.0 -15.9L80.6 -16.0z" fill="#2f7bff" opacity="0.75"/><path d="M98.8 56.7L165.5 118.5L164.6 119.5z" fill="#1e5cf8" opacity="0.38"/><path d="M113.1 62.3L190.3 96.1L189.6 97.7z" fill="#1a50f0" opacity="0.48"/><path d="M82.5 41.7L36.4 1.1L37.8 -0.5z" fill="#1a50f0" opacity="0.55"/><path d="M98.6 50.1L114.9 -0.8L115.4 -0.6z" fill="#78b8ff" opacity="0.70"/><path d="M80.7 62.4L31.9 84.7L31.6 84.1z" fill="#0c2ab0" opacity="0.36"/><path d="M92.7 50.7L34.1 -7.3L34.9 -8.2z" fill="#0a1c7a" opacity="0.55"/><path d="M95.0 54.2L-6.5 15.4L-6.1 14.4z" fill="#3c84ff" opacity="0.30"/><path d="M88.6 68.9L30.8 166.1L29.7 165.5z" fill="#06104e" opacity="0.52"/><path d="M89.2 59.7L50.4 83.6L49.7 82.3z" fill="#2f7bff" opacity="0.58"/><path d="M99.5 50.2L130.7 -10.0L131.5 -9.6z" fill="#1a50f0" opacity="0.75"/><path d="M82.9 60.3L37.3 78.2L36.7 76.5z" fill="#2a6cff" opacity="0.73"/><path d="M90.3 53.3L46.5 43.0L46.8 41.8z" fill="#2f7bff" opacity="0.44"/><path d="M91.2 54.5L-29.3 44.1L-29.2 43.3z" fill="#2a6cff" opacity="0.65"/><path d="M95.3 73.6L89.2 144.3L88.1 144.2z" fill="#78b8ff" opacity="0.66"/><path d="M106.3 37.6L123.6 3.4L124.9 4.1z" fill="#1e5cf8" opacity="0.48"/><path d="M91.9 37.3L82.3 5.2L82.9 5.1z" fill="#0c2ab0" opacity="0.36"/><path d="M92.0 64.9L65.6 120.0L64.0 119.2z" fill="#0a1c7a" opacity="0.58"/><path d="M94.0 56.0L0.0 87.4L-0.4 86.0z" fill="#0c2ab0" opacity="0.34"/><path d="M94.1 60.0L42.6 150.0L40.2 148.6z" fill="#2f7bff" opacity="0.44"/><path d="M98.3 59.6L119.4 131.6L118.2 132.0z" fill="#5aa0ff" opacity="0.49"/><path d="M106.2 55.5L172.6 58.8L172.5 60.2z" fill="#2f7bff" opacity="0.68"/><path d="M97.4 49.9L100.8 -0.2L101.2 -0.2z" fill="#0c2ab0" opacity="0.35"/><path d="M116.3 53.5L164.3 49.1L164.4 50.3z" fill="#06104e" opacity="0.65"/><path d="M99.5 52.9L158.1 1.5L159.5 3.2z" fill="#0a1c7a" opacity="0.70"/><path d="M97.4 52.9L114.7 -52.0L116.8 -51.6z" fill="#06104e" opacity="0.71"/><path d="M104.7 57.8L177.4 83.1L176.7 84.9z" fill="#06104e" opacity="0.53"/><path d="M81.4 48.0L1.0 12.0L1.4 11.1z" fill="#1e5cf8" opacity="0.50"/><path d="M86.2 57.3L18.9 72.4L18.4 70.3z" fill="#2f7bff" opacity="0.56"/><path d="M83.8 53.7L11.6 47.1L11.7 46.5z" fill="#0c2ab0" opacity="0.32"/><path d="M108.0 58.9L169.0 80.1L168.6 81.2z" fill="#78b8ff" opacity="0.63"/><path d="M89.4 73.3L66.3 131.2L64.4 130.4z" fill="#5aa0ff" opacity="0.64"/><path d="M101.3 51.8L195.7 -19.9L196.4 -19.1z" fill="#5aa0ff" opacity="0.67"/><path d="M102.9 36.0L112.8 2.1L113.8 2.4z" fill="#2a6cff" opacity="0.62"/><path d="M97.0 65.2L97.8 147.9L95.3 147.9z" fill="#06104e" opacity="0.39"/><path d="M96.4 58.3L80.6 148.0L78.5 147.6z" fill="#1e5cf8" opacity="0.69"/><path d="M99.7 56.3L205.0 106.4L204.0 108.4z" fill="#3c84ff" opacity="0.66"/><path d="M99.2 58.1L128.0 97.9L127.3 98.4z" fill="#0a1c7a" opacity="0.73"/><path d="M98.8 64.3L116.5 152.2L115.2 152.5z" fill="#2a6cff" opacity="0.68"/><path d="M94.6 52.8L0.1 -30.2L2.6 -33.0z" fill="#1a50f0" opacity="0.54"/><path d="M89.1 72.8L59.9 142.2L57.3 141.1z" fill="#06104e" opacity="0.47"/><path d="M104.0 39.3L146.6 -60.5L149.4 -59.2z" fill="#0c2ab0" opacity="0.39"/><path d="M98.3 59.9L122.4 148.0L120.0 148.7z" fill="#2a6cff" opacity="0.36"/><path d="M106.7 63.6L156.4 106.5L154.8 108.2z" fill="#1a50f0" opacity="0.30"/><path d="M110.5 61.3L205.8 104.7L205.3 105.9z" fill="#06104e" opacity="0.39"/><path d="M104.9 58.8L186.5 97.4L185.9 98.6z" fill="#78b8ff" opacity="0.51"/><path d="M88.8 54.7L-9.3 52.3L-9.1 49.1z" fill="#1a50f0" opacity="0.52"/><path d="M110.1 67.0L190.7 139.5L189.9 140.4z" fill="#3c84ff" opacity="0.60"/><path d="M88.4 57.5L-7.6 87.2L-8.6 84.0z" fill="#0c2ab0" opacity="0.40"/><path d="M91.9 48.8L34.6 -18.9L35.8 -19.9z" fill="#78b8ff" opacity="0.43"/><path d="M94.8 49.0L68.0 -22.7L69.8 -23.3z" fill="#5aa0ff" opacity="0.57"/><path d="M101.7 49.8L135.5 11.4L136.1 12.0z" fill="#0c2ab0" opacity="0.35"/><path d="M93.8 50.2L34.0 -39.0L35.7 -40.1z" fill="#2a6cff" opacity="0.47"/><path d="M95.6 46.9L75.1 -64.8L77.9 -65.3z" fill="#2a6cff" opacity="0.60"/><path d="M99.8 59.2L147.8 129.8L147.2 130.2z" fill="#1e5cf8" opacity="0.60"/><path d="M81.6 42.9L-6.2 -23.1L-3.7 -26.2z" fill="#06104e" opacity="0.50"/><path d="M97.5 58.9L104.4 109.1L103.3 109.2z" fill="#1e5cf8" opacity="0.60"/><path d="M99.8 44.0L119.8 -39.0L122.6 -38.3z" fill="#1e5cf8" opacity="0.47"/><path d="M106.6 67.0L132.7 99.1L132.0 99.6z" fill="#5aa0ff" opacity="0.73"/><path d="M90.9 37.7L61.4 -41.7L63.9 -42.6z" fill="#1e5cf8" opacity="0.65"/><path d="M98.7 56.6L184.5 135.3L183.0 136.9z" fill="#2a6cff" opacity="0.35"/><path d="M80.3 65.2L1.9 114.3L0.7 112.3z" fill="#3c84ff" opacity="0.44"/><path d="M84.8 54.4L36.7 52.5L36.7 51.9z" fill="#3c84ff" opacity="0.53"/><path d="M94.7 61.0L62.8 146.0L61.4 145.5z" fill="#1e5cf8" opacity="0.32"/><path d="M99.4 66.8L115.3 139.8L113.8 140.1z" fill="#3c84ff" opacity="0.66"/><path d="M84.8 54.7L33.1 53.8L33.1 53.2z" fill="#0c2ab0" opacity="0.58"/><path d="M103.2 47.9L129.8 16.1L130.9 17.1z" fill="#5aa0ff" opacity="0.66"/><path d="M103.8 60.6L154.4 101.0L153.2 102.4z" fill="#0c2ab0" opacity="0.31"/><path d="M111.9 67.4L175.5 119.2L174.6 120.3z" fill="#2a6cff" opacity="0.48"/><path d="M93.4 66.1L66.2 152.8L65.1 152.5z" fill="#06104e" opacity="0.45"/><path d="M79.1 56.2L-28.3 65.1L-28.5 62.2z" fill="#0c2ab0" opacity="0.74"/><path d="M108.9 49.1L160.9 23.1L161.2 23.7z" fill="#0c2ab0" opacity="0.42"/><path d="M89.9 62.8L44.4 113.5L43.4 112.6z" fill="#06104e" opacity="0.45"/><path d="M105.6 62.7L144.1 96.9L143.5 97.6z" fill="#06104e" opacity="0.55"/><path d="M93.9 57.2L32.8 102.4L32.3 101.6z" fill="#0a1c7a" opacity="0.46"/><path d="M107.9 51.5L200.2 21.1L200.9 23.1z" fill="#0a1c7a" opacity="0.48"/><rect width="188" height="112.5" fill="url(#sbm)"/><rect x="145" y="36" width="4.500" height="4.500" fill="#e8ecf4"/><rect x="156" y="36" width="4" height="4.500" fill="#f4f6fa"/><rect x="144" y="42" width="6.500" height="1.400" fill="#dfe8ff" opacity=".6"/><rect x="155" y="42" width="6.500" height="1.400" fill="#dfe8ff" opacity=".6"/><rect x="4.2" y="2.2" width="3.600" height="3.600" rx=".8" fill="#f0e090" opacity=".85"/><rect x="2.8" y="7" width="6.400" height="1.200" fill="#dfe8ff" opacity=".4"/><rect x="4.2" y="14.2" width="3.600" height="3.600" rx=".8" fill="#a0c8f8" opacity=".85"/><rect x="2.8" y="19" width="6.400" height="1.200" fill="#dfe8ff" opacity=".4"/><rect x="4.2" y="25.2" width="3.600" height="3.600" rx=".8" fill="#e8f0f8" opacity=".85"/><rect x="2.8" y="30" width="6.400" height="1.200" fill="#dfe8ff" opacity=".4"/><rect x="4.2" y="37.2" width="3.600" height="3.600" rx=".8" fill="#f0d060" opacity=".85"/><rect x="2.8" y="42" width="6.400" height="1.200" fill="#dfe8ff" opacity=".4"/><rect x="4.2" y="49.2" width="3.600" height="3.600" rx=".8" fill="#e04030" opacity=".85"/><rect x="2.8" y="54" width="6.400" height="1.200" fill="#dfe8ff" opacity=".4"/><rect x="4.2" y="60.2" width="3.600" height="3.600" rx=".8" fill="#60a0f0" opacity=".85"/><rect x="2.8" y="65" width="6.400" height="1.200" fill="#dfe8ff" opacity=".4"/><rect x="0" y="107.5" width="188" height="5" fill="#2459d8"/><rect x="0" y="107.5" width="188" height="1" fill="#4a86ee"/><path d="M0 107.5h11q2.500 2.5 0 5h-11z" fill="#3b9b3b"/><rect x="2.500" y="109.3" width="6" height="1.600" fill="#d8f0d0" opacity=".8"/><rect x="166" y="107.5" width="22" height="5" fill="#1691e8"/><g fill="#cfe3ff" opacity=".8"><rect x="168" y="109.3" width="1.800" height="1.800"/><rect x="171" y="109.3" width="1.800" height="1.800"/><rect x="174" y="109.3" width="1.800" height="1.800"/><rect x="178" y="109.3" width="7" height="1.600"/></g><g opacity=".85"><rect x="15" y="109.3" width="1.800" height="1.800" fill="#e8c040"/><rect x="18" y="109.3" width="1.800" height="1.800" fill="#d0e0ff"/><rect x="21" y="109.3" width="1.800" height="1.800" fill="#60a0ff"/></g></svg></div>
<div class="thumb" style="left:405.3px;top:236px;height:116.5px"><svg width="188" height="112.5" viewBox="0 0 188 112.5"><defs><linearGradient id="b6" x1="0" y1="0" x2="1" y2="1"><stop offset="0" stop-color="#1a48d8"/><stop offset=".5" stop-color="#1c4cd0"/><stop offset="1" stop-color="#0c1e78"/></linearGradient><linearGradient id="b6d" x1="0" y1="0" x2="0" y2="1"><stop offset="0" stop-color="#06104a" stop-opacity="0"/><stop offset="1" stop-color="#06104a" stop-opacity=".85"/></linearGradient></defs><rect width="188" height="112.5" fill="url(#b6)"/><path d="M90 0L188 0V40Q150 20 90 0z" fill="#3a74f0" opacity=".5"/><path d="M120 0L188 0V18Q160 8 120 0z" fill="#6a9cf8" opacity=".45"/><path d="M0 0H60Q30 30 0 50z" fill="#2a5cf0" opacity=".5"/><rect y="78" width="188" height="34.5" fill="url(#b6d)"/><rect x="58" y="2" width="4.500" height="4.500" fill="#e8ecf4"/><rect x="69" y="2" width="4" height="5" fill="#f4f6fa"/><rect x="57" y="8" width="6.500" height="1.200" fill="#dfe8ff" opacity=".6"/><rect x="68" y="8" width="6.500" height="1.200" fill="#dfe8ff" opacity=".6"/><rect x="18" y="11" width="147.5" height="83" fill="#fff"/><rect x="18" y="11" width="147.5" height="5.500" fill="#bcd0ee"/><rect x="19.5" y="12" width="26" height="4.500" rx="1" fill="#eef3fb"/><rect x="21" y="13.4" width="18" height="1.300" fill="#556" opacity=".7"/><rect x="18" y="16.5" width="147.5" height="4.500" fill="#e4ebf6"/><rect x="30" y="17.3" width="125.5" height="3" rx=".6" fill="#fff" stroke="#b8c4d6" stroke-width=".3"/><rect x="33" y="18.2" width="34" height="1.200" fill="#667" opacity=".7"/><g fill="#556"><rect x="20" y="18" width="2" height="1.500"/><rect x="23.5" y="18" width="2" height="1.500"/><rect x="27" y="18" width="1.600" height="1.500"/></g><rect x="163.5" y="21" width="2" height="73" fill="#e6ebf2"/><rect x="163.7" y="22" width="1.600" height="14" fill="#a9bfe6"/><rect x="19.5" y="25.5" width="83" height="6" fill="#1a1a1a"/><rect x="21.0" y="27.9" width="6" height="1.200" fill="#ccc" opacity=".75"/><rect x="30.1" y="27.9" width="6" height="1.200" fill="#ccc" opacity=".75"/><rect x="39.2" y="27.9" width="6" height="1.200" fill="#ccc" opacity=".75"/><rect x="48.3" y="27.9" width="6" height="1.200" fill="#ccc" opacity=".75"/><rect x="57.4" y="27.9" width="6" height="1.200" fill="#ccc" opacity=".75"/><rect x="66.5" y="27.9" width="6" height="1.200" fill="#ccc" opacity=".75"/><rect x="75.6" y="27.9" width="6" height="1.200" fill="#ccc" opacity=".75"/><rect x="84.7" y="27.9" width="6" height="1.200" fill="#ccc" opacity=".75"/><rect x="93.8" y="27.9" width="6" height="1.200" fill="#ccc" opacity=".75"/><rect x="37.7" y="25.5" width="9" height="6" fill="#2468c8"/><rect x="39.2" y="27.9" width="6" height="1.200" fill="#fff"/><rect x="137.5" y="23.0" width="25" height="7.500" fill="#17355f"/><rect x="139.0" y="24.2" width="5" height="5" fill="#7fa8d8"/><rect x="145.0" y="24.5" width="11" height="1.800" fill="#dfe8f4"/><rect x="145.0" y="27.3" width="11" height="1.800" fill="#9ab8e0"/><text x="156.5" y="29.8" font-size="7" font-weight="bold" fill="#3a7ad8" font-family="Liberation Sans,sans-serif">12</text><rect x="19.5" y="32.3" width="142.5" height=".6" fill="#2468c8"/><text x="25" y="38.5" font-size="3.400" font-weight="bold" fill="#1f5fc0" font-family="Liberation Sans,sans-serif">Features</text><rect x="25" y="42.0" width="3.500" height="1.600" fill="#dfe6f2"/><rect x="30" y="42.5" width="46" height=".7" fill="#667" opacity=".7"/><rect x="25" y="51.00" width="132.0" height=".7" fill="#8a8f98" opacity="0.6"/><rect x="25" y="52.50" width="63.4" height=".7" fill="#8a8f98" opacity="0.6"/><rect x="27.500" y="57.5" width="6" height="5" rx=".8" fill="#fff" stroke="#2468c8" stroke-width=".7"/><rect x="32" y="61.5" width="2" height="2" fill="#d03020"/><rect x="36" y="58.5" width="24" height="1.100" fill="#2a6ad0" opacity=".9"/><rect x="36" y="62.50" width="78.0" height=".7" fill="#8a8f98" opacity="0.6"/><rect x="36" y="64.00" width="78.0" height=".7" fill="#8a8f98" opacity="0.6"/><rect x="36" y="65.50" width="46.8" height=".7" fill="#8a8f98" opacity="0.6"/><rect x="36" y="69.50" width="78.0" height=".7" fill="#8a8f98" opacity="0.6"/><rect x="36" y="71.00" width="78.0" height=".7" fill="#8a8f98" opacity="0.6"/><rect x="36" y="72.50" width="78.0" height=".7" fill="#8a8f98" opacity="0.6"/><rect x="36" y="74.00" width="78.0" height=".7" fill="#8a8f98" opacity="0.6"/><rect x="36" y="75.50" width="46.8" height=".7" fill="#8a8f98" opacity="0.6"/><path d="M122 61.5l27-3.500q2 0 2 2v18q0 2-2 2l-27-2q-1.500 0-1.500-2v-12.500q0-2 1.500-2z" fill="#1a1a1a"/><path d="M124 63.5l24.500-3v17l-24.500-1.500z" fill="#123a8a"/><rect x="126.0" y="65.0" width="4" height="4" fill="#2a8ae0"/><rect x="126.0" y="71.0" width="4" height="4" fill="#e04040"/><rect x="131.6" y="64.5" width="4" height="4" fill="#40a8e8"/><rect x="131.6" y="70.5" width="4" height="4" fill="#e8a030"/><rect x="137.2" y="64.0" width="4" height="4" fill="#8040c0"/><rect x="137.2" y="70.0" width="4" height="4" fill="#30a060"/><rect x="142.8" y="63.5" width="4" height="4" fill="#d04080"/><rect x="142.8" y="69.5" width="4" height="4" fill="#3070d0"/><rect x="4.2" y="2.2" width="3.600" height="3.600" rx=".8" fill="#f0e090" opacity=".85"/><rect x="2.8" y="7" width="6.400" height="1.200" fill="#dfe8ff" opacity=".4"/><rect x="4.2" y="14.2" width="3.600" height="3.600" rx=".8" fill="#a0c8f8" opacity=".85"/><rect x="2.8" y="19" width="6.400" height="1.200" fill="#dfe8ff" opacity=".4"/><rect x="4.2" y="25.2" width="3.600" height="3.600" rx=".8" fill="#e8f0f8" opacity=".85"/><rect x="2.8" y="30" width="6.400" height="1.200" fill="#dfe8ff" opacity=".4"/><rect x="4.2" y="37.2" width="3.600" height="3.600" rx=".8" fill="#f0d060" opacity=".85"/><rect x="2.8" y="42" width="6.400" height="1.200" fill="#dfe8ff" opacity=".4"/><rect x="4.2" y="48.2" width="3.600" height="3.600" rx=".8" fill="#e04030" opacity=".85"/><rect x="2.8" y="53" width="6.400" height="1.200" fill="#dfe8ff" opacity=".4"/><rect x="0" y="107.5" width="188" height="5" fill="#2459d8"/><rect x="0" y="107.5" width="188" height="1" fill="#4a86ee"/><path d="M0 107.5h11q2.500 2.5 0 5h-11z" fill="#3b9b3b"/><rect x="2.500" y="109.3" width="6" height="1.600" fill="#d8f0d0" opacity=".8"/><rect x="166" y="107.5" width="22" height="5" fill="#1691e8"/><g fill="#cfe3ff" opacity=".8"><rect x="168" y="109.3" width="1.800" height="1.800"/><rect x="171" y="109.3" width="1.800" height="1.800"/><rect x="174" y="109.3" width="1.800" height="1.800"/><rect x="178" y="109.3" width="7" height="1.600"/></g><g opacity=".85"><rect x="15" y="109.3" width="1.800" height="1.800" fill="#e8c040"/><rect x="18" y="109.3" width="1.800" height="1.800" fill="#d0e0ff"/><rect x="21" y="109.3" width="1.800" height="1.800" fill="#60a0ff"/></g></svg></div>
<div class="thumb" style="left:617.6px;top:236px;height:116.5px"><svg width="188" height="112.5" viewBox="0 0 188 112.5"><defs><linearGradient id="sk7" x1="0" y1="0" x2="0" y2="1"><stop offset="0" stop-color="#2d68de"/><stop offset="1" stop-color="#86aef2"/></linearGradient><linearGradient id="hl7" x1="0" y1="0" x2=".3" y2="1"><stop offset="0" stop-color="#5aa61c"/><stop offset=".45" stop-color="#3d8a16"/><stop offset="1" stop-color="#2a6a10"/></linearGradient></defs><rect width="188" height="112.5" fill="url(#sk7)"/><ellipse cx="46" cy="8" rx="14" ry="4" fill="#fff" opacity="0.85"/><ellipse cx="62" cy="5" rx="10" ry="3" fill="#fff" opacity="0.8"/><ellipse cx="30" cy="14" rx="10" ry="3" fill="#fff" opacity="0.6"/><ellipse cx="92" cy="3" rx="12" ry="3" fill="#fff" opacity="0.7"/><ellipse cx="72" cy="25" rx="9" ry="3" fill="#fff" opacity="0.85"/><ellipse cx="64" cy="27" rx="5" ry="2" fill="#fff" opacity="0.7"/><ellipse cx="52" cy="41" rx="10" ry="4.5" fill="#fff" opacity="0.8"/><ellipse cx="44" cy="44" rx="6" ry="2.5" fill="#fff" opacity="0.6"/><ellipse cx="110" cy="40" rx="10" ry="4" fill="#fff" opacity="0.85"/><ellipse cx="118" cy="43" rx="8" ry="3" fill="#fff" opacity="0.7"/><ellipse cx="100" cy="12" rx="14" ry="3" fill="#fff" opacity="0.5"/><ellipse cx="86" cy="52" rx="8" ry="2" fill="#fff" opacity="0.5"/><path d="M0 60Q30 55 58 55T120 68Q150 76 188 72V112.5H0z" fill="url(#hl7)"/><path d="M0 86Q60 80 120 92T188 96V112.5H0z" fill="#245c0e" opacity=".55"/><path d="M20 60Q50 57 80 62T120 72Q80 66 20 64z" fill="#8cc838" opacity=".5"/><rect x="4.2" y="2.2" width="3.600" height="3.600" rx=".8" fill="#f0e090" opacity=".85"/><rect x="2.8" y="7" width="6.400" height="1.200" fill="#dfe8ff" opacity=".4"/><rect x="4.2" y="13.2" width="3.600" height="3.600" rx=".8" fill="#a0c8f8" opacity=".85"/><rect x="2.8" y="18" width="6.400" height="1.200" fill="#dfe8ff" opacity=".4"/><rect x="4.2" y="25.2" width="3.600" height="3.600" rx=".8" fill="#e8f0f8" opacity=".85"/><rect x="2.8" y="30" width="6.400" height="1.200" fill="#dfe8ff" opacity=".4"/><rect x="4.2" y="37.2" width="3.600" height="3.600" rx=".8" fill="#f0d060" opacity=".85"/><rect x="2.8" y="42" width="6.400" height="1.200" fill="#dfe8ff" opacity=".4"/><rect x="4.2" y="49.2" width="3.600" height="3.600" rx=".8" fill="#e04030" opacity=".85"/><rect x="2.8" y="54" width="6.400" height="1.200" fill="#dfe8ff" opacity=".4"/><rect x="4.2" y="61.2" width="3.600" height="3.600" rx=".8" fill="#60a0f0" opacity=".85"/><rect x="2.8" y="66" width="6.400" height="1.200" fill="#dfe8ff" opacity=".4"/><rect x="4.2" y="73.2" width="3.600" height="3.600" rx=".8" fill="#d0d0d0" opacity=".85"/><rect x="2.8" y="78" width="6.400" height="1.200" fill="#dfe8ff" opacity=".4"/><rect x="4.2" y="85.2" width="3.600" height="3.600" rx=".8" fill="#f0f0f0" opacity=".85"/><rect x="2.8" y="90" width="6.400" height="1.200" fill="#dfe8ff" opacity=".4"/><rect x="4.2" y="97.2" width="3.600" height="3.600" rx=".8" fill="#80b0f0" opacity=".85"/><rect x="2.8" y="102" width="6.400" height="1.200" fill="#dfe8ff" opacity=".4"/><rect x="16.2" y="2.2" width="3.600" height="3.600" rx=".8" fill="#e84030" opacity=".85"/><rect x="14.8" y="7" width="6.400" height="1.200" fill="#dfe8ff" opacity=".4"/><rect x="16.2" y="13.2" width="3.600" height="3.600" rx=".8" fill="#f0f0f0" opacity=".85"/><rect x="14.8" y="18" width="6.400" height="1.200" fill="#dfe8ff" opacity=".4"/><rect x="16.2" y="25.2" width="3.600" height="3.600" rx=".8" fill="#a0c0f0" opacity=".85"/><rect x="14.8" y="30" width="6.400" height="1.200" fill="#dfe8ff" opacity=".4"/><rect x="16.2" y="37.2" width="3.600" height="3.600" rx=".8" fill="#d0d8e8" opacity=".85"/><rect x="14.8" y="42" width="6.400" height="1.200" fill="#dfe8ff" opacity=".4"/><rect x="16.2" y="49.2" width="3.600" height="3.600" rx=".8" fill="#80a0e0" opacity=".85"/><rect x="14.8" y="54" width="6.400" height="1.200" fill="#dfe8ff" opacity=".4"/><rect x="0" y="107.5" width="188" height="5" fill="#2459d8"/><rect x="0" y="107.5" width="188" height="1" fill="#4a86ee"/><path d="M0 107.5h11q2.500 2.5 0 5h-11z" fill="#3b9b3b"/><rect x="2.500" y="109.3" width="6" height="1.600" fill="#d8f0d0" opacity=".8"/><rect x="166" y="107.5" width="22" height="5" fill="#1691e8"/><g fill="#cfe3ff" opacity=".8"><rect x="168" y="109.3" width="1.800" height="1.800"/><rect x="171" y="109.3" width="1.800" height="1.800"/><rect x="174" y="109.3" width="1.800" height="1.800"/><rect x="178" y="109.3" width="7" height="1.600"/></g><g opacity=".85"><rect x="15" y="109.3" width="1.800" height="1.800" fill="#e8c040"/><rect x="18" y="109.3" width="1.800" height="1.800" fill="#d0e0ff"/><rect x="21" y="109.3" width="1.800" height="1.800" fill="#60a0ff"/></g></svg></div>
<svg style="left:242.5px;top:201.7px" width="14" height="14" viewBox="0 0 14 14"><defs><linearGradient id="cg" x1="0" y1="0" x2="0" y2="1"><stop offset="0" stop-color="#8fb0e0"/><stop offset=".5" stop-color="#5480c4"/><stop offset="1" stop-color="#3f68a8"/></linearGradient></defs><circle cx="7" cy="7" r="6.700" fill="url(#cg)"/><rect x="2.800" y="3.800" width="8.400" height="5.800" rx=".6" fill="#2c2c2c"/><rect x="5.500" y="5.400" width="4.200" height="2.400" fill="#e8ece8"/><rect x="3.600" y="5.400" width="1.400" height="2.400" fill="#5a7a3a"/><rect x="4" y="10" width="6" height=".9" fill="#9a8a4a"/></svg>
<svg style="left:259.5px;top:202.9px" width="12" height="12" viewBox="0 0 12 12"><rect x=".4" y=".4" width="10.800" height="10.800" fill="#fff" stroke="#9dbce6" stroke-width=".8"/><path d="M1.400 1.800h3.800l.6.900h4.800v1H1.400z" fill="#6f7276"/><rect x="1.400" y="3.300" width="9.200" height="6.400" fill="#f0b45c"/></svg>
<svg style="left:274.0px;top:201.7px" width="14" height="14" viewBox="0 0 14 14"><circle cx="7" cy="7" r="6.700" fill="url(#cg)"/><rect x="3.400" y="3.200" width="4.400" height="4.400" rx=".8" fill="#f4c020"/><rect x="6" y="6" width="4.400" height="4.400" rx=".8" fill="#f4c020" stroke="#c89800" stroke-width=".3"/><rect x="8.800" y="2.800" width="2" height="2" fill="#3ab0f0"/><rect x="2.800" y="8.800" width="2" height="2" fill="#3ab0f0"/></svg>
<svg style="left:290.7px;top:202.9px" width="12" height="12" viewBox="0 0 12 12"><rect x=".4" y=".4" width="10.800" height="10.800" fill="#fff" stroke="#9dbce6" stroke-width=".8"/><rect x="1.600" y="1.600" width="8.600" height="7.400" fill="#3fae6a"/><rect x="2.600" y="2.500" width="3" height="3.600" fill="#fff"/><rect x="6.500" y="2.500" width="1.300" height="1.300" fill="#fff"/><rect x="8.200" y="2.500" width="1.300" height="1.300" fill="#fff"/><rect x="6.500" y="4.500" width="1.300" height="1.300" fill="#fff"/><rect x="8.200" y="4.500" width="1.300" height="1.300" fill="#fff"/><rect x="6.500" y="6.500" width="1.300" height="1.300" fill="#fff"/><rect x="8.200" y="6.500" width="1.300" height="1.300" fill="#fff"/><rect x="2.600" y="6.800" width="3" height="1.200" fill="#d8f0e0"/><rect x="2" y="9.300" width="4.500" height=".8" fill="#b89a3c"/></svg>
<svg style="left:306.2px;top:202.9px" width="12" height="12" viewBox="0 0 12 12"><rect x=".4" y=".4" width="10.800" height="10.800" fill="#fff" stroke="#9dbce6" stroke-width=".8"/><rect x="1.500" y="2" width="8.800" height="7.400" fill="#141414"/><rect x="1.500" y="2" width="8.800" height="1.200" fill="#555"/><text x="2.200" y="8" font-size="4.200" fill="#eee" font-family="Liberation Mono,monospace" font-weight="bold">C:\</text></svg>
<svg style="left:321.0px;top:202.4px" width="14" height="13" viewBox="0 0 14 13"><rect x=".4" y=".4" width="13" height="12" fill="#fff" stroke="#8db2e4" stroke-width=".8"/><path d="M3 2.600h8q.6 0 .6.600v4.600q0 .6-.6.600H6.400L4.800 10.200V8.400H3q-.6 0-.6-.6V3.200q0-.6.600-.6z" fill="#fff" stroke="#7a7e84" stroke-width=".6"/><rect x="4" y="4" width="6" height="2.600" fill="#a9c4e6"/></svg>
<div class="lab" style="left:193.0px;top:216px"><div class="abs" style="left:1.0px;top:-2.0px;font-size:5.8px;line-height:10px;white-space:nowrap;transform-origin:0 0;transform:scaleX(0.822);">AJK1</div><div class="abs" style="left:1.0px;top:6.0px;font-size:5.8px;line-height:10px;white-space:nowrap;transform-origin:0 0;transform:scaleX(0.827);">AJK</div><div class="abs" style="left:155.6px;top:-2.0px;font-size:5.8px;line-height:10px;white-space:nowrap;transform-origin:100% 0;transform:scaleX(0.925);">Windows XP</div><div class="abs" style="left:161.1px;top:6.0px;font-size:5.8px;line-height:10px;white-space:nowrap;transform-origin:100% 0;transform:scaleX(0.824);">10.0.1.201</div></div>
<svg style="left:454.8px;top:201.7px" width="14" height="14" viewBox="0 0 14 14"><defs><linearGradient id="cg" x1="0" y1="0" x2="0" y2="1"><stop offset="0" stop-color="#8fb0e0"/><stop offset=".5" stop-color="#5480c4"/><stop offset="1" stop-color="#3f68a8"/></linearGradient></defs><circle cx="7" cy="7" r="6.700" fill="url(#cg)"/><rect x="2.800" y="3.800" width="8.400" height="5.800" rx=".6" fill="#2c2c2c"/><rect x="5.500" y="5.400" width="4.200" height="2.400" fill="#e8ece8"/><rect x="3.600" y="5.400" width="1.400" height="2.400" fill="#5a7a3a"/><rect x="4" y="10" width="6" height=".9" fill="#9a8a4a"/></svg>
<svg style="left:471.8px;top:202.9px" width="12" height="12" viewBox="0 0 12 12"><rect x=".4" y=".4" width="10.800" height="10.800" fill="#fff" stroke="#9dbce6" stroke-width=".8"/><path d="M1.400 1.800h3.800l.6.900h4.800v1H1.400z" fill="#6f7276"/><rect x="1.400" y="3.300" width="9.200" height="6.400" fill="#f0b45c"/></svg>
<svg style="left:486.3px;top:201.7px" width="14" height="14" viewBox="0 0 14 14"><circle cx="7" cy="7" r="6.700" fill="url(#cg)"/><rect x="3.400" y="3.200" width="4.400" height="4.400" rx=".8" fill="#f4c020"/><rect x="6" y="6" width="4.400" height="4.400" rx=".8" fill="#f4c020" stroke="#c89800" stroke-width=".3"/><rect x="8.800" y="2.800" width="2" height="2" fill="#3ab0f0"/><rect x="2.800" y="8.800" width="2" height="2" fill="#3ab0f0"/></svg>
<svg style="left:503.0px;top:202.9px" width="12" height="12" viewBox="0 0 12 12"><rect x=".4" y=".4" width="10.800" height="10.800" fill="#fff" stroke="#9dbce6" stroke-width=".8"/><rect x="1.600" y="1.600" width="8.600" height="7.400" fill="#3fae6a"/><rect x="2.600" y="2.500" width="3" height="3.600" fill="#fff"/><rect x="6.500" y="2.500" width="1.300" height="1.300" fill="#fff"/><rect x="8.200" y="2.500" width="1.300" height="1.300" fill="#fff"/><rect x="6.500" y="4.500" width="1.300" height="1.300" fill="#fff"/><rect x="8.200" y="4.500" width="1.300" height="1.300" fill="#fff"/><rect x="6.500" y="6.500" width="1.300" height="1.300" fill="#fff"/><rect x="8.200" y="6.500" width="1.300" height="1.300" fill="#fff"/><rect x="2.600" y="6.800" width="3" height="1.200" fill="#d8f0e0"/><rect x="2" y="9.300" width="4.500" height=".8" fill="#b89a3c"/></svg>
<svg style="left:518.5px;top:202.9px" width="12" height="12" viewBox="0 0 12 12"><rect x=".4" y=".4" width="10.800" height="10.800" fill="#fff" stroke="#9dbce6" stroke-width=".8"/><rect x="1.500" y="2" width="8.800" height="7.400" fill="#141414"/><rect x="1.500" y="2" width="8.800" height="1.200" fill="#555"/><text x="2.200" y="8" font-size="4.200" fill="#eee" font-family="Liberation Mono,monospace" font-weight="bold">C:\</text></svg>
<svg style="left:533.3px;top:202.4px" width="14" height="13" viewBox="0 0 14 13"><rect x=".4" y=".4" width="13" height="12" fill="#fff" stroke="#8db2e4" stroke-width=".8"/><path d="M3 2.600h8q.6 0 .6.600v4.600q0 .6-.6.600H6.400L4.800 10.200V8.400H3q-.6 0-.6-.6V3.200q0-.6.600-.6z" fill="#fff" stroke="#7a7e84" stroke-width=".6"/><rect x="4" y="4" width="6" height="2.600" fill="#a9c4e6"/></svg>
<div class="lab" style="left:405.3px;top:216px"><div class="abs" style="left:1.0px;top:-2.0px;font-size:5.8px;line-height:10px;white-space:nowrap;transform-origin:0 0;transform:scaleX(0.822);">AJK3</div><div class="abs" style="left:1.0px;top:6.0px;font-size:5.8px;line-height:10px;white-space:nowrap;transform-origin:0 0;transform:scaleX(0.827);">AJK</div><div class="abs" style="left:155.6px;top:-2.0px;font-size:5.8px;line-height:10px;white-space:nowrap;transform-origin:100% 0;transform:scaleX(0.925);">Windows XP</div><div class="abs" style="left:161.1px;top:6.0px;font-size:5.8px;line-height:10px;white-space:nowrap;transform-origin:100% 0;transform:scaleX(0.824);">10.0.1.203</div></div>
<svg style="left:667.1px;top:201.7px" width="14" height="14" viewBox="0 0 14 14"><defs><linearGradient id="cg" x1="0" y1="0" x2="0" y2="1"><stop offset="0" stop-color="#8fb0e0"/><stop offset=".5" stop-color="#5480c4"/><stop offset="1" stop-color="#3f68a8"/></linearGradient></defs><circle cx="7" cy="7" r="6.700" fill="url(#cg)"/><rect x="2.800" y="3.800" width="8.400" height="5.800" rx=".6" fill="#2c2c2c"/><rect x="5.500" y="5.400" width="4.200" height="2.400" fill="#e8ece8"/><rect x="3.600" y="5.400" width="1.400" height="2.400" fill="#5a7a3a"/><rect x="4" y="10" width="6" height=".9" fill="#9a8a4a"/></svg>
<svg style="left:684.1px;top:202.9px" width="12" height="12" viewBox="0 0 12 12"><rect x=".4" y=".4" width="10.800" height="10.800" fill="#fff" stroke="#9dbce6" stroke-width=".8"/><path d="M1.400 1.800h3.800l.6.900h4.800v1H1.400z" fill="#6f7276"/><rect x="1.400" y="3.300" width="9.200" height="6.400" fill="#f0b45c"/></svg>
<svg style="left:698.6px;top:201.7px" width="14" height="14" viewBox="0 0 14 14"><circle cx="7" cy="7" r="6.700" fill="url(#cg)"/><rect x="3.400" y="3.200" width="4.400" height="4.400" rx=".8" fill="#f4c020"/><rect x="6" y="6" width="4.400" height="4.400" rx=".8" fill="#f4c020" stroke="#c89800" stroke-width=".3"/><rect x="8.800" y="2.800" width="2" height="2" fill="#3ab0f0"/><rect x="2.800" y="8.800" width="2" height="2" fill="#3ab0f0"/></svg>
<svg style="left:715.3px;top:202.9px" width="12" height="12" viewBox="0 0 12 12"><rect x=".4" y=".4" width="10.800" height="10.800" fill="#fff" stroke="#9dbce6" stroke-width=".8"/><rect x="1.600" y="1.600" width="8.600" height="7.400" fill="#3fae6a"/><rect x="2.600" y="2.500" width="3" height="3.600" fill="#fff"/><rect x="6.500" y="2.500" width="1.300" height="1.300" fill="#fff"/><rect x="8.200" y="2.500" width="1.300" height="1.300" fill="#fff"/><rect x="6.500" y="4.500" width="1.300" height="1.300" fill="#fff"/><rect x="8.200" y="4.500" width="1.300" height="1.300" fill="#fff"/><rect x="6.500" y="6.500" width="1.300" height="1.300" fill="#fff"/><rect x="8.200" y="6.500" width="1.300" height="1.300" fill="#fff"/><rect x="2.600" y="6.800" width="3" height="1.200" fill="#d8f0e0"/><rect x="2" y="9.300" width="4.500" height=".8" fill="#b89a3c"/></svg>
<svg style="left:730.8px;top:202.9px" width="12" height="12" viewBox="0 0 12 12"><rect x=".4" y=".4" width="10.800" height="10.800" fill="#fff" stroke="#9dbce6" stroke-width=".8"/><rect x="1.500" y="2" width="8.800" height="7.400" fill="#141414"/><rect x="1.500" y="2" width="8.800" height="1.200" fill="#555"/><text x="2.200" y="8" font-size="4.200" fill="#eee" font-family="Liberation Mono,monospace" font-weight="bold">C:\</text></svg>
<svg style="left:745.6px;top:202.4px" width="14" height="13" viewBox="0 0 14 13"><rect x=".4" y=".4" width="13" height="12" fill="#fff" stroke="#8db2e4" stroke-width=".8"/><path d="M3 2.600h8q.6 0 .6.600v4.600q0 .6-.6.600H6.400L4.800 10.200V8.400H3q-.6 0-.6-.6V3.200q0-.6.600-.6z" fill="#fff" stroke="#7a7e84" stroke-width=".6"/><rect x="4" y="4" width="6" height="2.600" fill="#a9c4e6"/></svg>
<div class="lab" style="left:617.6px;top:216px"><div class="abs" style="left:1.0px;top:-2.0px;font-size:5.8px;line-height:10px;white-space:nowrap;transform-origin:0 0;transform:scaleX(0.822);">AJK4</div><div class="abs" style="left:1.0px;top:6.0px;font-size:5.8px;line-height:10px;white-space:nowrap;transform-origin:0 0;transform:scaleX(0.827);">AJK</div><div class="abs" style="left:155.6px;top:-2.0px;font-size:5.8px;line-height:10px;white-space:nowrap;transform-origin:100% 0;transform:scaleX(0.925);">Windows XP</div><div class="abs" style="left:161.1px;top:6.0px;font-size:5.8px;line-height:10px;white-space:nowrap;transform-origin:100% 0;transform:scaleX(0.824);">10.0.1.204</div></div>
<svg style="left:879.5px;top:201.7px" width="14" height="14" viewBox="0 0 14 14"><defs><linearGradient id="cg" x1="0" y1="0" x2="0" y2="1"><stop offset="0" stop-color="#8fb0e0"/><stop offset=".5" stop-color="#5480c4"/><stop offset="1" stop-color="#3f68a8"/></linearGradient></defs><circle cx="7" cy="7" r="6.700" fill="url(#cg)"/><rect x="2.800" y="3.800" width="8.400" height="5.800" rx=".6" fill="#2c2c2c"/><rect x="5.500" y="5.400" width="4.200" height="2.400" fill="#e8ece8"/><rect x="3.600" y="5.400" width="1.400" height="2.400" fill="#5a7a3a"/><rect x="4" y="10" width="6" height=".9" fill="#9a8a4a"/></svg>
<svg style="left:896.5px;top:202.9px" width="12" height="12" viewBox="0 0 12 12"><rect x=".4" y=".4" width="10.800" height="10.800" fill="#fff" stroke="#9dbce6" stroke-width=".8"/><path d="M1.400 1.800h3.800l.6.900h4.800v1H1.400z" fill="#6f7276"/><rect x="1.400" y="3.300" width="9.200" height="6.400" fill="#f0b45c"/></svg>
<svg style="left:911.0px;top:201.7px" width="14" height="14" viewBox="0 0 14 14"><circle cx="7" cy="7" r="6.700" fill="url(#cg)"/><rect x="3.400" y="3.200" width="4.400" height="4.400" rx=".8" fill="#f4c020"/><rect x="6" y="6" width="4.400" height="4.400" rx=".8" fill="#f4c020" stroke="#c89800" stroke-width=".3"/><rect x="8.800" y="2.800" width="2" height="2" fill="#3ab0f0"/><rect x="2.800" y="8.800" width="2" height="2" fill="#3ab0f0"/></svg>
<svg style="left:927.7px;top:202.9px" width="12" height="12" viewBox="0 0 12 12"><rect x=".4" y=".4" width="10.800" height="10.800" fill="#fff" stroke="#9dbce6" stroke-width=".8"/><rect x="1.600" y="1.600" width="8.600" height="7.400" fill="#3fae6a"/><rect x="2.600" y="2.500" width="3" height="3.600" fill="#fff"/><rect x="6.500" y="2.500" width="1.300" height="1.300" fill="#fff"/><rect x="8.200" y="2.500" width="1.300" height="1.300" fill="#fff"/><rect x="6.500" y="4.500" width="1.300" height="1.300" fill="#fff"/><rect x="8.200" y="4.500" width="1.300" height="1.300" fill="#fff"/><rect x="6.500" y="6.500" width="1.300" height="1.300" fill="#fff"/><rect x="8.200" y="6.500" width="1.300" height="1.300" fill="#fff"/><rect x="2.600" y="6.800" width="3" height="1.200" fill="#d8f0e0"/><rect x="2" y="9.300" width="4.500" height=".8" fill="#b89a3c"/></svg>
<svg style="left:943.2px;top:202.9px" width="12" height="12" viewBox="0 0 12 12"><rect x=".4" y=".4" width="10.800" height="10.800" fill="#fff" stroke="#9dbce6" stroke-width=".8"/><rect x="1.500" y="2" width="8.800" height="7.400" fill="#141414"/><rect x="1.500" y="2" width="8.800" height="1.200" fill="#555"/><text x="2.200" y="8" font-size="4.200" fill="#eee" font-family="Liberation Mono,monospace" font-weight="bold">C:\</text></svg>
<svg style="left:958.0px;top:202.4px" width="14" height="13" viewBox="0 0 14 13"><rect x=".4" y=".4" width="13" height="12" fill="#fff" stroke="#8db2e4" stroke-width=".8"/><path d="M3 2.600h8q.6 0 .6.600v4.600q0 .6-.6.600H6.400L4.800 10.200V8.400H3q-.6 0-.6-.6V3.200q0-.6.600-.6z" fill="#fff" stroke="#7a7e84" stroke-width=".6"/><rect x="4" y="4" width="6" height="2.600" fill="#a9c4e6"/></svg>
<div class="lab" style="left:830.0px;top:216px"><div class="abs" style="left:1.0px;top:-2.0px;font-size:5.8px;line-height:10px;white-space:nowrap;transform-origin:0 0;transform:scaleX(0.822);">AJK5</div><div class="abs" style="left:1.0px;top:6.0px;font-size:5.8px;line-height:10px;white-space:nowrap;transform-origin:0 0;transform:scaleX(0.827);">AJK</div><div class="abs" style="left:155.6px;top:-2.0px;font-size:5.8px;line-height:10px;white-space:nowrap;transform-origin:100% 0;transform:scaleX(0.925);">Windows XP</div><div class="abs" style="left:161.1px;top:6.0px;font-size:5.8px;line-height:10px;white-space:nowrap;transform-origin:100% 0;transform:scaleX(0.824);">10.0.1.205</div></div>
<svg style="left:242.5px;top:342.5px" width="14" height="14" viewBox="0 0 14 14"><defs><linearGradient id="cg" x1="0" y1="0" x2="0" y2="1"><stop offset="0" stop-color="#8fb0e0"/><stop offset=".5" stop-color="#5480c4"/><stop offset="1" stop-color="#3f68a8"/></linearGradient></defs><circle cx="7" cy="7" r="6.700" fill="url(#cg)"/><rect x="2.800" y="3.800" width="8.400" height="5.800" rx=".6" fill="#2c2c2c"/><rect x="5.500" y="5.400" width="4.200" height="2.400" fill="#e8ece8"/><rect x="3.600" y="5.400" width="1.400" height="2.400" fill="#5a7a3a"/><rect x="4" y="10" width="6" height=".9" fill="#9a8a4a"/></svg>
<svg style="left:259.5px;top:343.7px" width="12" height="12" viewBox="0 0 12 12"><rect x=".4" y=".4" width="10.800" height="10.800" fill="#fff" stroke="#9dbce6" stroke-width=".8"/><path d="M1.400 1.800h3.800l.6.900h4.800v1H1.400z" fill="#6f7276"/><rect x="1.400" y="3.300" width="9.200" height="6.400" fill="#f0b45c"/></svg>
<svg style="left:274.0px;top:342.5px" width="14" height="14" viewBox="0 0 14 14"><circle cx="7" cy="7" r="6.700" fill="url(#cg)"/><rect x="3.400" y="3.200" width="4.400" height="4.400" rx=".8" fill="#f4c020"/><rect x="6" y="6" width="4.400" height="4.400" rx=".8" fill="#f4c020" stroke="#c89800" stroke-width=".3"/><rect x="8.800" y="2.800" width="2" height="2" fill="#3ab0f0"/><rect x="2.800" y="8.800" width="2" height="2" fill="#3ab0f0"/></svg>
<svg style="left:290.7px;top:343.7px" width="12" height="12" viewBox="0 0 12 12"><rect x=".4" y=".4" width="10.800" height="10.800" fill="#fff" stroke="#9dbce6" stroke-width=".8"/><rect x="1.600" y="1.600" width="8.600" height="7.400" fill="#3fae6a"/><rect x="2.600" y="2.500" width="3" height="3.600" fill="#fff"/><rect x="6.500" y="2.500" width="1.300" height="1.300" fill="#fff"/><rect x="8.200" y="2.500" width="1.300" height="1.300" fill="#fff"/><rect x="6.500" y="4.500" width="1.300" height="1.300" fill="#fff"/><rect x="8.200" y="4.500" width="1.300" height="1.300" fill="#fff"/><rect x="6.500" y="6.500" width="1.300" height="1.300" fill="#fff"/><rect x="8.200" y="6.500" width="1.300" height="1.300" fill="#fff"/><rect x="2.600" y="6.800" width="3" height="1.200" fill="#d8f0e0"/><rect x="2" y="9.300" width="4.500" height=".8" fill="#b89a3c"/></svg>
<svg style="left:306.2px;top:343.7px" width="12" height="12" viewBox="0 0 12 12"><rect x=".4" y=".4" width="10.800" height="10.800" fill="#fff" stroke="#9dbce6" stroke-width=".8"/><rect x="1.500" y="2" width="8.800" height="7.400" fill="#141414"/><rect x="1.500" y="2" width="8.800" height="1.200" fill="#555"/><text x="2.200" y="8" font-size="4.200" fill="#eee" font-family="Liberation Mono,monospace" font-weight="bold">C:\</text></svg>
<svg style="left:321.0px;top:343.2px" width="14" height="13" viewBox="0 0 14 13"><rect x=".4" y=".4" width="13" height="12" fill="#fff" stroke="#8db2e4" stroke-width=".8"/><path d="M3 2.600h8q.6 0 .6.600v4.600q0 .6-.6.600H6.400L4.800 10.200V8.400H3q-.6 0-.6-.6V3.200q0-.6.600-.6z" fill="#fff" stroke="#7a7e84" stroke-width=".6"/><rect x="4" y="4" width="6" height="2.600" fill="#a9c4e6"/></svg>
<div class="lab" style="left:193.0px;top:357px"><div class="abs" style="left:1.0px;top:-2.0px;font-size:5.8px;line-height:10px;white-space:nowrap;transform-origin:0 0;transform:scaleX(0.822);">AJK6</div><div class="abs" style="left:1.0px;top:6.0px;font-size:5.8px;line-height:10px;white-space:nowrap;transform-origin:0 0;transform:scaleX(0.827);">AJK</div><div class="abs" style="left:155.6px;top:-2.0px;font-size:5.8px;line-height:10px;white-space:nowrap;transform-origin:100% 0;transform:scaleX(0.925);">Windows XP</div><div class="abs" style="left:161.1px;top:6.0px;font-size:5.8px;line-height:10px;white-space:nowrap;transform-origin:100% 0;transform:scaleX(0.824);">10.0.1.206</div></div>
<svg style="left:454.8px;top:342.5px" width="14" height="14" viewBox="0 0 14 14"><defs><linearGradient id="cg" x1="0" y1="0" x2="0" y2="1"><stop offset="0" stop-color="#8fb0e0"/><stop offset=".5" stop-color="#5480c4"/><stop offset="1" stop-color="#3f68a8"/></linearGradient></defs><circle cx="7" cy="7" r="6.700" fill="url(#cg)"/><rect x="2.800" y="3.800" width="8.400" height="5.800" rx=".6" fill="#2c2c2c"/><rect x="5.500" y="5.400" width="4.200" height="2.400" fill="#e8ece8"/><rect x="3.600" y="5.400" width="1.400" height="2.400" fill="#5a7a3a"/><rect x="4" y="10" width="6" height=".9" fill="#9a8a4a"/></svg>
<svg style="left:471.8px;top:343.7px" width="12" height="12" viewBox="0 0 12 12"><rect x=".4" y=".4" width="10.800" height="10.800" fill="#fff" stroke="#9dbce6" stroke-width=".8"/><path d="M1.400 1.800h3.800l.6.900h4.800v1H1.400z" fill="#6f7276"/><rect x="1.400" y="3.300" width="9.200" height="6.400" fill="#f0b45c"/></svg>
<svg style="left:486.3px;top:342.5px" width="14" height="14" viewBox="0 0 14 14"><circle cx="7" cy="7" r="6.700" fill="url(#cg)"/><rect x="3.400" y="3.200" width="4.400" height="4.400" rx=".8" fill="#f4c020"/><rect x="6" y="6" width="4.400" height="4.400" rx=".8" fill="#f4c020" stroke="#c89800" stroke-width=".3"/><rect x="8.800" y="2.800" width="2" height="2" fill="#3ab0f0"/><rect x="2.800" y="8.800" width="2" height="2" fill="#3ab0f0"/></svg>
<svg style="left:503.0px;top:343.7px" width="12" height="12" viewBox="0 0 12 12"><rect x=".4" y=".4" width="10.800" height="10.800" fill="#fff" stroke="#9dbce6" stroke-width=".8"/><rect x="1.600" y="1.600" width="8.600" height="7.400" fill="#3fae6a"/><rect x="2.600" y="2.500" width="3" height="3.600" fill="#fff"/><rect x="6.500" y="2.500" width="1.300" height="1.300" fill="#fff"/><rect x="8.200" y="2.500" width="1.300" height="1.300" fill="#fff"/><rect x="6.500" y="4.500" width="1.300" height="1.300" fill="#fff"/><rect x="8.200" y="4.500" width="1.300" height="1.300" fill="#fff"/><rect x="6.500" y="6.500" width="1.300" height="1.300" fill="#fff"/><rect x="8.200" y="6.500" width="1.300" height="1.300" fill="#fff"/><rect x="2.600" y="6.800" width="3" height="1.200" fill="#d8f0e0"/><rect x="2" y="9.300" width="4.500" height=".8" fill="#b89a3c"/></svg>
<svg style="left:518.5px;top:343.7px" width="12" height="12" viewBox="0 0 12 12"><rect x=".4" y=".4" width="10.800" height="10.800" fill="#fff" stroke="#9dbce6" stroke-width=".8"/><rect x="1.500" y="2" width="8.800" height="7.400" fill="#141414"/><rect x="1.500" y="2" width="8.800" height="1.200" fill="#555"/><text x="2.200" y="8" font-size="4.200" fill="#eee" font-family="Liberation Mono,monospace" font-weight="bold">C:\</text></svg>
<svg style="left:533.3px;top:343.2px" width="14" height="13" viewBox="0 0 14 13"><rect x=".4" y=".4" width="13" height="12" fill="#fff" stroke="#8db2e4" stroke-width=".8"/><path d="M3 2.600h8q.6 0 .6.600v4.600q0 .6-.6.600H6.400L4.800 10.200V8.400H3q-.6 0-.6-.6V3.200q0-.6.600-.6z" fill="#fff" stroke="#7a7e84" stroke-width=".6"/><rect x="4" y="4" width="6" height="2.600" fill="#a9c4e6"/></svg>
<div class="lab" style="left:405.3px;top:357px"><div class="abs" style="left:1.0px;top:-2.0px;font-size:5.8px;line-height:10px;white-space:nowrap;transform-origin:0 0;transform:scaleX(0.822);">AJK7</div><div class="abs" style="left:1.0px;top:6.0px;font-size:5.8px;line-height:10px;white-space:nowrap;transform-origin:0 0;transform:scaleX(0.827);">AJK</div><div class="abs" style="left:155.6px;top:-2.0px;font-size:5.8px;line-height:10px;white-space:nowrap;transform-origin:100% 0;transform:scaleX(0.925);">Windows XP</div><div class="abs" style="left:161.1px;top:6.0px;font-size:5.8px;line-height:10px;white-space:nowrap;transform-origin:100% 0;transform:scaleX(0.824);">10.0.1.207</div></div>
<svg style="left:667.1px;top:342.5px" width="14" height="14" viewBox="0 0 14 14"><defs><linearGradient id="cg" x1="0" y1="0" x2="0" y2="1"><stop offset="0" stop-color="#8fb0e0"/><stop offset=".5" stop-color="#5480c4"/><stop offset="1" stop-color="#3f68a8"/></linearGradient></defs><circle cx="7" cy="7" r="6.700" fill="url(#cg)"/><rect x="2.800" y="3.800" width="8.400" height="5.800" rx=".6" fill="#2c2c2c"/><rect x="5.500" y="5.400" width="4.200" height="2.400" fill="#e8ece8"/><rect x="3.600" y="5.400" width="1.400" height="2.400" fill="#5a7a3a"/><rect x="4" y="10" width="6" height=".9" fill="#9a8a4a"/></svg>
<svg style="left:684.1px;top:343.7px" width="12" height="12" viewBox="0 0 12 12"><rect x=".4" y=".4" width="10.800" height="10.800" fill="#fff" stroke="#9dbce6" stroke-width=".8"/><path d="M1.400 1.800h3.800l.6.900h4.800v1H1.400z" fill="#6f7276"/><rect x="1.400" y="3.300" width="9.200" height="6.400" fill="#f0b45c"/></svg>
<svg style="left:698.6px;top:342.5px" width="14" height="14" viewBox="0 0 14 14"><circle cx="7" cy="7" r="6.700" fill="url(#cg)"/><rect x="3.400" y="3.200" width="4.400" height="4.400" rx=".8" fill="#f4c020"/><rect x="6" y="6" width="4.400" height="4.400" rx=".8" fill="#f4c020" stroke="#c89800" stroke-width=".3"/><rect x="8.800" y="2.800" width="2" height="2" fill="#3ab0f0"/><rect x="2.800" y="8.800" width="2" height="2" fill="#3ab0f0"/></svg>
<svg style="left:715.3px;top:343.7px" width="12" height="12" viewBox="0 0 12 12"><rect x=".4" y=".4" width="10.800" height="10.800" fill="#fff" stroke="#9dbce6" stroke-width=".8"/><rect x="1.600" y="1.600" width="8.600" height="7.400" fill="#3fae6a"/><rect x="2.600" y="2.500" width="3" height="3.600" fill="#fff"/><rect x="6.500" y="2.500" width="1.300" height="1.300" fill="#fff"/><rect x="8.200" y="2.500" width="1.300" height="1.300" fill="#fff"/><rect x="6.500" y="4.500" width="1.300" height="1.300" fill="#fff"/><rect x="8.200" y="4.500" width="1.300" height="1.300" fill="#fff"/><rect x="6.500" y="6.500" width="1.300" height="1.300" fill="#fff"/><rect x="8.200" y="6.500" width="1.300" height="1.300" fill="#fff"/><rect x="2.600" y="6.800" width="3" height="1.200" fill="#d8f0e0"/><rect x="2" y="9.300" width="4.500" height=".8" fill="#b89a3c"/></svg>
<svg style="left:730.8px;top:343.7px" width="12" height="12" viewBox="0 0 12 12"><rect x=".4" y=".4" width="10.800" height="10.800" fill="#fff" stroke="#9dbce6" stroke-width=".8"/><rect x="1.500" y="2" width="8.800" height="7.400" fill="#141414"/><rect x="1.500" y="2" width="8.800" height="1.200" fill="#555"/><text x="2.200" y="8" font-size="4.200" fill="#eee" font-family="Liberation Mono,monospace" font-weight="bold">C:\</text></svg>
<svg style="left:745.6px;top:343.2px" width="14" height="13" viewBox="0 0 14 13"><rect x=".4" y=".4" width="13" height="12" fill="#fff" stroke="#8db2e4" stroke-width=".8"/><path d="M3 2.600h8q.6 0 .6.600v4.600q0 .6-.6.600H6.400L4.800 10.200V8.400H3q-.6 0-.6-.6V3.200q0-.6.600-.6z" fill="#fff" stroke="#7a7e84" stroke-width=".6"/><rect x="4" y="4" width="6" height="2.600" fill="#a9c4e6"/></svg>
<div class="lab" style="left:617.6px;top:357px"><div class="abs" style="left:1.0px;top:-2.0px;font-size:5.8px;line-height:10px;white-space:nowrap;transform-origin:0 0;transform:scaleX(0.822);">AJK8</div><div class="abs" style="left:1.0px;top:6.0px;font-size:5.8px;line-height:10px;white-space:nowrap;transform-origin:0 0;transform:scaleX(0.827);">AJK</div><div class="abs" style="left:155.6px;top:-2.0px;font-size:5.8px;line-height:10px;white-space:nowrap;transform-origin:100% 0;transform:scaleX(0.925);">Windows XP</div><div class="abs" style="left:161.1px;top:6.0px;font-size:5.8px;line-height:10px;white-space:nowrap;transform-origin:100% 0;transform:scaleX(0.824);">10.0.1.208</div></div>
<div id="pop" class="abs">
<div class="abs col"></div>
<div class="abs hd"></div>
<!-- header icons -->
<svg style="left:.8px;top:.6px" width="22.600" height="20.400" viewBox="0 0 20 18"><g fill="none" stroke="#2e6db4" stroke-width="2.3"><rect x="-5" y="-3.500" width="10" height="7" rx="3.300" transform="translate(6.800 11.700) rotate(-45)"/><rect x="-5" y="-3.500" width="10" height="7" rx="3.300" transform="translate(12.600 5.900) rotate(-45)"/></g><path d="M12 10.800l5.400 5.400M17.400 10.800l-5.400 5.400" stroke="#d8361e" stroke-width="1.900"/></svg>
<svg style="left:24.300px;top:3px" width="17.800" height="16" viewBox="0 0 19 17"><rect x=".7" y=".7" width="16.600" height="11.400" rx=".8" fill="#fff" stroke="#3476c6" stroke-width="1.300"/><path d="M1.400 8.400q3.600-3 7.600-.4 3.700 2.300 7.600 1.600v1.900H1.400z" fill="#3fae6a"/><circle cx="12.600" cy="4.400" r="2" fill="#f4a62a"/><path d="M9 12.200v2.200M4.800 15h8.400" stroke="#3476c6" stroke-width="1.300"/></svg>
<svg style="left:46.500px;top:3.800px" width="17" height="15" viewBox="0 0 17 15"><path d="M.2.400h6.200l1 1.500h8.600v2H.2z" fill="#6f7276"/><rect x=".2" y="2.900" width="15.900" height="11" fill="#f0b45c"/></svg>
<svg style="left:68.500px;top:2.200px" width="18" height="18" viewBox="0 0 18 18"><path d="M8.400.8l7.200 3.600v8.400l-7.200 3.800-7.200-3.800V4.400z" fill="#fff" stroke="#3476c6" stroke-width="1.300" stroke-linejoin="round"/><path d="M1.200 4.400l7.200 3.700 7.200-3.700M8.400 8.100v8.500" fill="none" stroke="#3476c6" stroke-width="1.200"/><path d="M8.400 3.300l3.400 1.600-3.400 1.700L5 4.900z" fill="#f4b45a"/><path d="M3.700 8l2.800 1.400v3.400l-2.800-1.400zM13.100 8l-2.800 1.400v3.400l2.800-1.400z" fill="#f4b45a"/></svg>
<svg style="left:91.500px;top:4.500px" width="18" height="15" viewBox="0 0 18 15"><rect x=".4" y=".4" width="16.600" height="11.200" rx=".8" fill="#3fae6a"/><rect x="1.800" y="1.800" width="5.200" height="5" fill="#fff"/><rect x="8.400" y="1.800" width="3.400" height="1.900" fill="#fff"/><rect x="12.600" y="1.800" width="3.400" height="1.900" fill="#fff"/><rect x="8.400" y="4.700" width="3.400" height="1.900" fill="#fff"/><rect x="12.600" y="4.700" width="3.400" height="1.900" fill="#fff"/><rect x="8.400" y="7.600" width="3.400" height="1.900" fill="#fff"/><rect x="12.600" y="7.600" width="3.400" height="1.900" fill="#fff"/><rect x="1.800" y="8" width="1.200" height="1.700" fill="#fff"/><rect x="3.700" y="8" width="1.200" height="1.700" fill="#fff"/><rect x="5.600" y="8" width="1.200" height="1.700" fill="#fff"/><rect x="1.400" y="12" width="8" height="1.200" fill="#b89a3c"/></svg>
<svg style="left:114px;top:3px" width="18" height="17" viewBox="0 0 18 17"><rect x=".7" y=".7" width="15.800" height="11.400" rx=".8" fill="#6f7276" stroke="#3476c6" stroke-width="1.300"/><rect x="1.400" y="1.400" width="14.400" height="1.600" fill="#9ea1a5"/><text x="3.200" y="9" font-size="4" fill="#e8e8e8" font-family="Liberation Mono,monospace">c:\</text><path d="M8.600 12.200v2.200M4.600 15h8" stroke="#3476c6" stroke-width="1.300"/></svg>
<svg style="left:135.200px;top:2.800px" width="18" height="17" viewBox="0 0 18 17"><path d="M1.500.7h13.600q.9 0 .9.900v9.200q0 .9-.9.900H6.300l-2.500 3v-3H1.500q-.9 0-.9-.9V1.600q0-.9.900-.9z" fill="#fff" stroke="#8e9196" stroke-width=".9"/><rect x="3" y="3.200" width="10.600" height="5" fill="#a9c4e6"/></svg>
<svg style="left:157px;top:2px" width="18.400" height="16.500" viewBox="0 0 19 17"><path d="M.5 1h10.500l3 3v8.800H.5z" fill="#f7d4a0"/><path d="M3.500 3.200h10.800l3.400 3.400v9.600H3.500z" fill="#f4b45a"/><path d="M14.300 3.200l3.400 3.400h-3.400z" fill="#fbe3bf"/><rect x="5.500" y="7" width="7" height="7" fill="#b89668"/><rect x="9.500" y="10.500" width="6" height="3.500" fill="#b89668"/></svg>
<svg style="left:219.500px;top:3.500px" width="5" height="5" viewBox="0 0 5 5"><path d="M.5.500l3.800 3.800M4.300.5L.5 4.300" stroke="#d8361e" stroke-width="1.100"/></svg>
<!-- row icons (col centre x≈10) -->
<svg style="left:3px;top:27.500px" width="15" height="13" viewBox="0 0 15 13"><rect x=".7" y=".7" width="12.800" height="8.600" rx=".6" fill="#fff" stroke="#2e6db4" stroke-width="1.300"/><path d="M7.100 9.400v1.900M3.400 11.800h7.400" stroke="#2e6db4" stroke-width="1.200"/></svg>
<svg style="left:3.500px;top:43.500px" width="14" height="14" viewBox="0 0 14 14"><circle cx="6.800" cy="4" r="3" fill="#fff" stroke="#2e6db4" stroke-width="1.100"/><path d="M1 12.800q0-4.800 3.600-5.200l2.200 2 2.200-2q3.600.4 3.600 5.200z" fill="#fff" stroke="#2e6db4" stroke-width="1.100" stroke-linejoin="round"/><path d="M3.900 3.200q2.900.6 5.800-.8" stroke="#2e6db4" stroke-width="1.400" fill="none"/></svg>
<svg style="left:2.500px;top:60px" width="15" height="13" viewBox="0 0 15 13"><path d="M7.300.6l7 6.400h-2v5.400H8.800V8.600h-3v3.800H2.300V7h-2z" fill="#5b5f64"/><rect x="11" y="1" width="1.700" height="2.800" fill="#2e6db4"/></svg>
<svg style="left:3px;top:76.500px" width="14" height="14" viewBox="0 0 14 14"><path d="M2.300 4.400A5.500 5.500 0 1 1 1.300 7" fill="none" stroke="#2fa36b" stroke-width="1.400"/><path d="M.2 2.200l3.600.3-.6 3.400z" fill="#2fa36b"/><path d="M6.800 3.600v3.600l2.400 1.500" fill="none" stroke="#444" stroke-width="1"/></svg>
<svg style="left:3.500px;top:92.500px" width="13" height="14" viewBox="0 0 13 14"><path d="M0 1.600l5-.8v4.700H0zM5.700.7L12 0v5.500H5.700zM0 6.200h5v4.700l-5-.8zM5.700 6.200H12v5.500l-6.300-.9z" fill="#1cb4f2"/><text x="4.600" y="14" font-size="6.600" font-weight="bold" fill="#222" font-family="Liberation Sans,sans-serif" letter-spacing="-.3">64</text></svg>
<svg style="left:3px;top:110px" width="14" height="10" viewBox="0 0 14 10"><rect width="13.600" height="9.400" fill="#2b4a9c"/><path d="M0 0l13.600 9.400M13.600 0L0 9.400" stroke="#fff" stroke-width="2"/><path d="M0 0l13.600 9.400M13.600 0L0 9.400" stroke="#d8362a" stroke-width=".8"/><path d="M6.800 0v9.400M0 4.700h13.600" stroke="#fff" stroke-width="3"/><path d="M6.800 0v9.400M0 4.700h13.600" stroke="#d8362a" stroke-width="1.700"/></svg>
<svg style="left:3px;top:125px" width="15" height="12" viewBox="0 0 15 12"><rect x=".7" y=".7" width="12.800" height="8.200" rx=".4" fill="#fff" stroke="#2e6db4" stroke-width="1.300"/><path d="M.4 10.600h13.400" stroke="#2e6db4" stroke-width="1.300"/></svg>
<svg style="left:3px;top:139.500px" width="15" height="14" viewBox="0 0 15 14"><g fill="#8b8f94"><rect x=".4" y="9" width="2" height="4.500"/><rect x="3.200" y="7.400" width="2" height="6.100"/><rect x="6" y="5.600" width="2" height="7.900"/><rect x="8.800" y="3.600" width="2" height="9.900"/><rect x="11.600" y="1.400" width="2" height="12.100"/></g><g fill="#6aaa2a"><rect x=".4" y="11" width="2" height="2.500"/><rect x="3.200" y="11" width="2" height="2.500"/></g><path d="M4.600.4l4 7.200H.6z" fill="#f4c31a" stroke="#a98600" stroke-width=".4"/><path d="M4.600 2.800v2.600M4.600 6.100v.7" stroke="#222" stroke-width=".8"/></svg>
<div class="abs" style="left:22.8px;top:29.0px;font-size:6.6px;line-height:10px;white-space:nowrap;transform-origin:0 0;transform:scaleX(1.012);">INVH454</div>
<div class="abs" style="left:22.8px;top:46.0px;font-size:6.6px;line-height:10px;white-space:nowrap;transform-origin:0 0;transform:scaleX(0.891);">PCIAJK</div>
<div class="abs" style="left:22.8px;top:63.0px;font-size:6.6px;line-height:10px;white-space:nowrap;transform-origin:0 0;transform:scaleX(1.031);">10.20.1.32:5405</div>
<div class="abs" style="left:22.8px;top:79.0px;font-size:6.6px;line-height:10px;white-space:nowrap;transform-origin:0 0;transform:scaleX(1.067);">13:31:27 23/09/2013</div>
<div class="abs" style="left:22.8px;top:95.0px;font-size:6.6px;line-height:10px;white-space:nowrap;transform-origin:0 0;transform:scaleX(1.023);">Windows 8.1 x64</div>
<div class="abs" style="left:22.8px;top:111.0px;font-size:6.6px;line-height:10px;white-space:nowrap;transform-origin:0 0;transform:scaleX(0.997);">Peterborough, England, United Kingdom, GB</div>
<div class="abs" style="left:22.8px;top:127.0px;font-size:6.6px;line-height:10px;white-space:nowrap;transform-origin:0 0;transform:scaleX(1.042);">All in one</div>
<div class="abs" style="left:22.8px;top:143.0px;font-size:6.6px;line-height:10px;white-space:nowrap;transform-origin:0 0;transform:scaleX(1.004);">Wireless network : NetSupportOpen Type 802.11n Strength 100%</div>
</div>

<div id="w8" class="abs"><div class="abs scr">
<svg width="330" height="178" viewBox="0 0 330 178" style="left:0;top:0"><defs><linearGradient id="w8b" x1="0" y1="0" x2="0" y2="1"><stop offset="0" stop-color="#1b4c9c"/><stop offset="1" stop-color="#174692"/></linearGradient></defs><rect width="330" height="178" fill="url(#w8b)"/><path d="M0 56L0 36Q4.8 28.4 9.6 32.1Q12.2 28.7 14.9 33.8Q19.0 30.3 23.1 33.5Q23.5 29.5 24.0 32.4L24 56z" fill="#0f2962" opacity="0.92"/><path d="M0 56h22q-4 6-12 5-6 3-10-1z" fill="#0f2962" opacity=".9"/><path d="M22 52q3-9 10-11 3-7 11-9 6-6 14-6 7-5 15-3 8-3 14 0 6-3 12 1l2 9q-6 3-12 3-6 4-14 3-6 5-14 4-8 5-16 4-8 6-22 5z" fill="#0f2962" opacity=".92"/><path d="M84 44L84 31.5Q87.9 25.5 91.8 28.0Q95.4 25.7 99.1 28.0Q105.1 23.1 111.1 28.9Q115.0 24.0 118.8 27.7Q122.5 25.5 126.2 27.5Q132.3 23.0 138.4 29.0Q144.0 25.2 149.7 27.8Q154.8 23.3 160.0 29.1Q165.9 25.6 171.8 28.5Q173.9 24.1 176.0 27.4L176 44z" fill="#0f2962" opacity="0.92"/><path d="M84 44h92q-6 8-18 6-10 6-22 2-12 5-24 0-14 3-28-8z" fill="#0f2962" opacity=".9"/><path d="M172 36L172 24Q177.0 16.7 182.0 21.2Q185.6 19.2 189.1 21.7Q193.2 16.9 197.3 20.9Q202.3 18.4 207.3 22.0Q212.1 18.0 216.9 21.3Q221.7 18.6 226.4 21.4Q231.2 18.4 236.0 22.0L236 36z" fill="#11306e" opacity="0.92"/><path d="M250 14q4-6 12-6 4-5 12-4 6-5 14-2 8-4 16 0 8-2 14 2 6-1 12 2v16q-8 6-18 4-8 5-18 2-10 4-20 0-10 3-18-2-8 0-6-12z" fill="#102a66" opacity=".9"/><path d="M288 26q8-6 18-3 6 0 8 5-2 6-10 6-10 3-16-2z" fill="#0e2660" opacity=".9"/><circle cx="117" cy="3" r="31.500" fill="#0a1b4a" opacity=".95"/><circle cx="130.7" cy="5.5" r="0.58" fill="#6fb0ff" opacity="0.82"/><circle cx="119.8" cy="1.0" r="0.44" fill="#6fb0ff" opacity="0.62"/><circle cx="123.5" cy="3.5" r="0.38" fill="#6fb0ff" opacity="0.96"/><circle cx="143.1" cy="3.3" r="0.36" fill="#6fb0ff" opacity="0.61"/><circle cx="110.0" cy="31.0" r="0.46" fill="#6fb0ff" opacity="0.84"/><circle cx="124.9" cy="30.1" r="0.51" fill="#6fb0ff" opacity="0.98"/><circle cx="113.8" cy="6.8" r="0.34" fill="#6fb0ff" opacity="0.53"/><circle cx="111.3" cy="20.2" r="0.30" fill="#6fb0ff" opacity="0.84"/><circle cx="112.1" cy="10.9" r="0.55" fill="#6fb0ff" opacity="0.74"/><circle cx="111.2" cy="16.2" r="0.51" fill="#6fb0ff" opacity="0.53"/><circle cx="117.7" cy="2.9" r="0.52" fill="#6fb0ff" opacity="0.92"/><circle cx="140.5" cy="5.7" r="0.41" fill="#6fb0ff" opacity="0.79"/><circle cx="118.4" cy="3.1" r="0.35" fill="#6fb0ff" opacity="0.98"/><circle cx="124.5" cy="24.4" r="0.58" fill="#6fb0ff" opacity="0.97"/><circle cx="111.1" cy="11.8" r="0.46" fill="#6fb0ff" opacity="0.89"/><circle cx="134.5" cy="17.1" r="0.54" fill="#6fb0ff" opacity="0.93"/><circle cx="144.6" cy="9.5" r="0.33" fill="#6fb0ff" opacity="0.67"/><circle cx="102.2" cy="26.4" r="0.46" fill="#6fb0ff" opacity="0.66"/><circle cx="114.8" cy="7.9" r="0.32" fill="#6fb0ff" opacity="0.57"/><circle cx="117.8" cy="4.2" r="0.60" fill="#6fb0ff" opacity="0.77"/><circle cx="111.1" cy="7.0" r="0.48" fill="#6fb0ff" opacity="0.91"/><circle cx="104.8" cy="6.5" r="0.32" fill="#6fb0ff" opacity="0.96"/><circle cx="131.5" cy="6.0" r="0.55" fill="#6fb0ff" opacity="0.57"/><circle cx="127.2" cy="11.1" r="0.34" fill="#6fb0ff" opacity="0.92"/><circle cx="113.2" cy="16.1" r="0.60" fill="#6fb0ff" opacity="0.93"/><circle cx="130.5" cy="1.0" r="0.45" fill="#6fb0ff" opacity="0.86"/><circle cx="108.3" cy="4.1" r="0.42" fill="#6fb0ff" opacity="0.57"/><circle cx="95.8" cy="23.7" r="0.59" fill="#6fb0ff" opacity="0.81"/><circle cx="106.8" cy="3.0" r="0.33" fill="#6fb0ff" opacity="0.64"/><circle cx="101.8" cy="21.0" r="0.53" fill="#6fb0ff" opacity="0.85"/><circle cx="103.2" cy="19.0" r="0.38" fill="#6fb0ff" opacity="0.74"/><circle cx="109.3" cy="30.3" r="0.49" fill="#6fb0ff" opacity="0.79"/><circle cx="133.4" cy="4.2" r="0.38" fill="#6fb0ff" opacity="0.84"/><circle cx="93.2" cy="8.7" r="0.49" fill="#6fb0ff" opacity="0.90"/><circle cx="105.9" cy="18.8" r="0.52" fill="#6fb0ff" opacity="0.91"/><circle cx="102.1" cy="23.5" r="0.56" fill="#6fb0ff" opacity="0.84"/><circle cx="101.2" cy="1.2" r="0.35" fill="#6fb0ff" opacity="0.92"/><circle cx="121.7" cy="3.8" r="0.43" fill="#6fb0ff" opacity="0.83"/><circle cx="121.0" cy="23.2" r="0.49" fill="#6fb0ff" opacity="0.52"/><circle cx="110.3" cy="4.2" r="0.32" fill="#6fb0ff" opacity="0.57"/><circle cx="114.8" cy="8.0" r="0.36" fill="#6fb0ff" opacity="0.52"/><circle cx="105.9" cy="5.5" r="0.48" fill="#6fb0ff" opacity="0.80"/><circle cx="119.1" cy="30.0" r="0.30" fill="#6fb0ff" opacity="0.70"/><circle cx="114.8" cy="15.1" r="0.33" fill="#6fb0ff" opacity="0.92"/><circle cx="116.2" cy="3.8" r="0.48" fill="#6fb0ff" opacity="0.55"/><circle cx="114.1" cy="6.1" r="0.48" fill="#6fb0ff" opacity="0.78"/><circle cx="117.0" cy="3.0" r="0.33" fill="#6fb0ff" opacity="0.78"/><circle cx="107.8" cy="12.1" r="0.37" fill="#6fb0ff" opacity="0.65"/><circle cx="128.2" cy="1.0" r="0.59" fill="#6fb0ff" opacity="0.96"/><circle cx="131.8" cy="1.2" r="0.42" fill="#6fb0ff" opacity="0.66"/><circle cx="131.7" cy="1.5" r="0.39" fill="#6fb0ff" opacity="0.74"/><circle cx="130.4" cy="15.9" r="0.43" fill="#6fb0ff" opacity="0.65"/><circle cx="132.9" cy="4.3" r="0.38" fill="#6fb0ff" opacity="0.97"/><circle cx="116.5" cy="7.6" r="0.60" fill="#6fb0ff" opacity="0.65"/><path d="M88 19L150 4" stroke="#3a78d8" stroke-width=".7" opacity=".7"/><circle cx="168" cy="26" r="11" fill="#2360c8" opacity=".55"/><path d="M12 52Q13.0 45.9 16 45Q17.5 39.9 21 40Q23.0 35.1 27 35.5Q29.5 31.1 34 32Q36.5 28.1 41 29.5Q43.5 26.4 48 28.5Q50.5 25.1 55 27Q57.5 23.6 62 25.5Q64.5 21.9 69 23.5Q71.5 20.4 76 22.5Q78.5 19.9 83 22.5Q85.5 20.6 90 24Q91.5 22.4 95 26L95 27Q92.0 29.3 88 28Q84.5 30.1 80 28.5Q76.5 31.3 72 30.5Q68.5 33.5 64 33Q60.5 35.8 56 35Q52.5 37.5 48 36.5Q45.0 39.3 41 38.5Q38.5 42.3 35 42.5Q32.5 46.5 29 47Q26.5 51.0 23 51.5Q20.5 55.0 17 55Q15.0 57.3 12 56z" fill="#2ba6f4"/><path d="M15 52q5-3 9-9 6-2 10-7 7-1 12-4 8-1 14-4 8-1 16-3" fill="none" stroke="#7fd4ff" stroke-width="1.100" opacity=".6"/><path d="M229 23.25Q232.0 19.6 235 20.25Q239.0 17.8 243 19.75Q246.5 18.8 250 22.25Q254.0 21.7 258 25.5Q262.0 24.1 266 27.0Q270.0 25.1 274 27.6Q278.0 25.4 282 27.7Q286.0 25.4 290 27.6Q294.0 25.1 298 26.9Q302.0 24.0 306 25.5Q309.5 22.5 313 23.900000000000002Q316.5 20.6 320 21.7Q323.0 18.2 326 19.2Q328.5 15.8 331 16.7L331 20.3Q328.5 22.9 326 22.8Q323.0 25.4 320 25.3Q316.5 27.9 313 27.7Q309.5 30.0 306 29.5Q302.0 31.7 298 31.1Q294.0 33.0 290 32.0Q286.0 33.5 282 32.3Q278.0 33.7 274 32.4Q270.0 33.6 266 32.0Q262.0 32.6 258 30.5Q254.0 30.5 250 27.75Q246.5 27.9 243 25.25Q239.0 26.4 235 24.75Q232.0 26.6 229 25.75z" fill="#2ba6f4"/><path d="M286 29.500q22-.5 44-11" fill="none" stroke="#8fdcff" stroke-width=".7" opacity=".7"/><path d="M290 29q-4-6 4-9 8-3 16 1 6 3 2 8z" fill="#0e2660" opacity=".85"/><path d="M242 36q6-5 12-2 6 2 6 8-2 6-8 6-2 4-6 2-6-2-4-14z" fill="#14357a" opacity=".6"/><path d="M172 8q8-2 14-6l2 2q-6 6-14 8z" fill="#14357a" opacity=".6"/><path d="M0 178v-20q8-8 20-6 8-6 18-2 8 2 12 10 4 8 2 18z" fill="#143678" opacity=".6"/><path d="M52 178q8-14 24-16 6-12 22-16 14-4 22 4 12-2 18 8 14 0 20 10 8 2 12 10z" fill="#10295f" opacity=".9"/><path d="M96 150q8-8 20-6 10-4 16 4-10 6-22 6-8 2-14-4z" fill="#0c2052" opacity=".8"/><path d="M190 178q16-16 40-18 20-10 44-6 24 2 56 16v8z" fill="#143678" opacity=".55"/></svg>
<div class="abs" style="left:40px;top:9.500px;font-size:5.600px;color:#0d2c66;opacity:.4;text-align:right;width:29.500px;line-height:7.200px;white-space:nowrap">Windows XP<br>10.0.1.204</div>
<div class="abs" style="left:251px;top:9.500px;font-size:5.600px;color:#0d2c66;opacity:.4;text-align:right;width:30px;line-height:7.200px;white-space:nowrap">Windows XP<br>10.0.1.205</div>
<div class="abs" style="left:19.9px;top:8.7px;font-size:9.4px;line-height:10px;white-space:nowrap;transform-origin:0 0;transform:scaleX(0.922);color:#fff">Start</div>
<div class="abs" style="left:300px;top:8px;font-size:5px;color:#fff;text-align:right;width:12px">Al</div><div class="abs" style="left:296px;top:13px;font-size:2.800px;color:#dfe8ff;text-align:right;width:16px">Kingsley</div>
<svg style="left:314.500px;top:8.500px" width="7" height="7" viewBox="0 0 7 7"><rect width="6.600" height="6.600" fill="#f2f4f8"/><circle cx="3.300" cy="2.400" r="1.300" fill="#5a6a86"/><path d="M1 6q0-2.400 2.300-2.400T5.600 6z" fill="#5a6a86"/></svg>
<div class="abs" style="left:20.3px;top:34.7px;width:20.7px;height:19.800px;background:#2f7fe0;overflow:hidden"><svg style="left:0;top:0" width="20.3" height="20.300" viewBox="0 0 20.3 20.300"><circle cx="10" cy="8" r="2.800" fill="#fff"/><g stroke="#fff" stroke-width=".9"><path d="M10 2.800v1.600M10 11.600v1.600M4.800 8h1.600M13.600 8h1.600M6.300 4.300l1.100 1.100M12.600 10.600l1.100 1.100M13.700 4.300l-1.100 1.100M7.400 10.600l-1.100 1.100"/></g></svg><div class="abs" style="left:1.500px;bottom:1.500px;width:6px;height:.9px;background:#fff;opacity:.55"></div></div>
<div class="abs" style="left:20.3px;top:55.8px;width:42.6px;height:19.800px;background:#0f9b10;overflow:hidden"><svg style="left:0;top:0" width="41.6" height="20.300" viewBox="0 0 41.6 20.300"><path d="M18.500 6.200l4.500-.8v7.200l-4.500-.8z" fill="none" stroke="#fff" stroke-width="1.100"/><path d="M19.800 7.600v3.200M21.400 7.300v3.800M18.800 9.200h4" stroke="#fff" stroke-width=".5"/><path d="M18 5.600q2.500-2.600 5-.2" fill="none" stroke="#fff" stroke-width=".9"/></svg><div class="abs" style="left:1.500px;bottom:1.500px;width:5px;height:.9px;background:#fff;opacity:.55"></div></div>
<div class="abs" style="left:20.3px;top:77.0px;width:42.6px;height:19.800px;background:#16264f;overflow:hidden"><svg style="left:0;top:0" width="41.6" height="20.300" viewBox="0 0 41.6 20.300"><defs><linearGradient id="vg" x1="0" y1="0" x2="1" y2="1"><stop offset="0" stop-color="#101c40"/><stop offset=".6" stop-color="#1c3a7c"/><stop offset="1" stop-color="#2a5cb8"/></linearGradient></defs><rect width="41.600" height="20.300" fill="url(#vg)"/><path d="M0 6q14 6 41 2M0 12q20 6 41 0M6 0q10 12 30 20" stroke="#3a68c0" stroke-width=".5" fill="none" opacity=".6"/><text x="16" y="13" font-size="4.600" fill="#e8eef8" font-family="Liberation Sans,sans-serif" letter-spacing=".3">VAIO</text></svg><div class="abs" style="left:1.500px;bottom:1.500px;width:5px;height:.9px;background:#fff;opacity:.55"></div></div>
<div class="abs" style="left:20.3px;top:98.1px;width:20.7px;height:19.800px;background:#2672d9;overflow:hidden"><svg style="left:0;top:0" width="20.3" height="20.300" viewBox="0 0 20.3 20.300"><text x="5" y="13.500" font-size="13" font-weight="bold" font-style="italic" fill="#fff" font-family="Liberation Sans,sans-serif">e</text><path d="M4 7q5-5 12-3" fill="none" stroke="#fff" stroke-width="1"/></svg><div class="abs" style="left:1.500px;bottom:1.500px;width:6px;height:.9px;background:#fff;opacity:.55"></div></div>
<div class="abs" style="left:42.2px;top:98.1px;width:20.7px;height:19.800px;background:#0e98a6;overflow:hidden"><svg style="left:0;top:0" width="20.3" height="20.300" viewBox="0 0 20.3 20.300"><rect x="5.500" y="4.500" width="9.500" height="7.500" fill="none" stroke="#fff" stroke-width=".9"/><path d="M6 11l2.600-3 2 2 1.400-1.400 2.600 2.400z" fill="#fff"/><circle cx="12.600" cy="6.600" r=".8" fill="#fff"/></svg><div class="abs" style="left:1.500px;bottom:1.500px;width:6px;height:.9px;background:#fff;opacity:.55"></div></div>
<div class="abs" style="left:20.3px;top:119.3px;width:42.6px;height:19.800px;background:#5f36b0;overflow:hidden"><svg style="left:0;top:0" width="41.6" height="20.300" viewBox="0 0 41.6 20.300"><path d="M17.500 3.500h6.600v2.800q0 3-3.300 3.600-3.300-.6-3.300-3.600z" fill="#fff"/><path d="M17.500 4.300h-1.800q0 3 2.400 3.400M24.100 4.300h1.800q0 3-2.400 3.400" fill="none" stroke="#fff" stroke-width=".8"/><rect x="20.200" y="9.600" width="1.200" height="1.800" fill="#fff"/><rect x="18.400" y="11.300" width="4.800" height="1.300" fill="#fff"/></svg><div class="abs" style="left:1.500px;bottom:1.500px;width:5px;height:.9px;background:#fff;opacity:.55"></div></div>
<div class="abs" style="left:20.3px;top:140.4px;width:42.6px;height:19.800px;background:#c8224c;overflow:hidden"><svg style="left:0;top:0" width="41.6" height="20.300" viewBox="0 0 41.6 20.300"><rect x="17" y="5" width="8" height="6.400" fill="none" stroke="#fff" stroke-width=".9"/><rect x="18.200" y="6.400" width="3" height="3.600" fill="#fff"/><path d="M22 6.800h2M22 8.200h2M22 9.600h2" stroke="#fff" stroke-width=".6"/></svg><div class="abs" style="left:1.500px;bottom:1.500px;width:5px;height:.9px;background:#fff;opacity:.55"></div></div>
<div class="abs" style="left:72.3px;top:34.7px;width:20.7px;height:19.800px;background:#fbe6c6;overflow:hidden"><svg style="left:0;top:0" width="20.3" height="20.300" viewBox="0 0 20.3 20.300"><text x="2" y="12.800" font-size="14.400" fill="#1c1c1c" font-family="Liberation Serif,serif" letter-spacing="-.3">FT</text></svg><div class="abs" style="left:1.500px;bottom:1.500px;width:6px;height:.9px;background:#fff;opacity:.55"></div></div>
<div class="abs" style="left:94.2px;top:34.7px;width:20.7px;height:19.800px;background:#a51cab;overflow:hidden"><svg style="left:0;top:0" width="20.3" height="20.300" viewBox="0 0 20.3 20.300"><rect x="5.400" y="5.600" width="9.600" height="6.600" rx=".8" fill="#fff"/><circle cx="10.200" cy="8.900" r="1.900" fill="#a51cab"/><circle cx="10.200" cy="8.900" r=".9" fill="#fff"/><rect x="12.600" y="6.300" width="1.600" height="1" fill="#a51cab"/></svg><div class="abs" style="left:1.500px;bottom:1.500px;width:6px;height:.9px;background:#fff;opacity:.55"></div></div>
<div class="abs" style="left:72.3px;top:55.8px;width:20.7px;height:19.800px;background:#e2542e;overflow:hidden"><svg style="left:0;top:0" width="20.3" height="20.300" viewBox="0 0 20.3 20.300"><path d="M5.800 11.500v-2.500a4.400 4.400 0 0 1 8.800 0v2.500" fill="none" stroke="#fff" stroke-width="1.100"/><rect x="4.800" y="9.800" width="2.400" height="3.800" rx=".8" fill="#fff"/><rect x="13.200" y="9.800" width="2.400" height="3.800" rx=".8" fill="#fff"/></svg><div class="abs" style="left:1.500px;bottom:1.500px;width:6px;height:.9px;background:#fff;opacity:.55"></div></div>
<div class="abs" style="left:94.2px;top:55.8px;width:20.7px;height:19.800px;background:#c32a50;overflow:hidden"><svg style="left:0;top:0" width="20.3" height="20.300" viewBox="0 0 20.3 20.300"><rect x="5.200" y="5.400" width="10" height="7" rx=".6" fill="none" stroke="#fff" stroke-width="1"/><path d="M9 7.200l3 1.700-3 1.700z" fill="#fff"/></svg><div class="abs" style="left:1.500px;bottom:1.500px;width:6px;height:.9px;background:#fff;opacity:.55"></div></div>
<div class="abs" style="left:72.3px;top:77.0px;width:20.7px;height:19.800px;background:#12b0ee;overflow:hidden"><svg style="left:0;top:0" width="20.3" height="20.300" viewBox="0 0 20.3 20.300"><circle cx="10.200" cy="9" r="4.800" fill="#fff"/><text x="7.600" y="12" font-size="8" font-weight="bold" fill="#12b0ee" font-family="Liberation Sans,sans-serif">S</text></svg><div class="abs" style="left:1.500px;bottom:1.500px;width:6px;height:.9px;background:#fff;opacity:.55"></div></div>
<div class="abs" style="left:94.2px;top:77.0px;width:20.7px;height:19.800px;background:#f6f6f6;overflow:hidden"><svg style="left:0;top:0" width="20.3" height="20.300" viewBox="0 0 20.3 20.300"><text x="2.200" y="11.500" font-size="6.200" font-weight="bold" font-family="Liberation Sans,sans-serif" letter-spacing="-.3"><tspan fill="#e53238">e</tspan><tspan fill="#0064d2">b</tspan><tspan fill="#f5af02">a</tspan><tspan fill="#86b817">y</tspan></text></svg><div class="abs" style="left:1.500px;bottom:1.500px;width:6px;height:.9px;background:#fff;opacity:.55"></div></div>
<div class="abs" style="left:72.3px;top:98.1px;width:20.7px;height:19.800px;background:#2466c8;overflow:hidden"><svg style="left:0;top:0" width="20.3" height="20.300" viewBox="0 0 20.3 20.300"><rect x="6.400" y="4.800" width="7.400" height="6.600" fill="#fff"/><rect x="7.600" y="6" width="5" height="3.400" fill="#2a5aa8"/></svg><div class="abs" style="left:1.500px;bottom:1.500px;width:6px;height:.9px;background:#fff;opacity:.55"></div><div class="abs" style="left:1.500px;bottom:3.200px;width:10px;height:.9px;background:#fff;opacity:.5"></div></div>
<div class="abs" style="left:94.2px;top:98.1px;width:20.7px;height:19.800px;background:#6d6d6d;overflow:hidden"><svg style="left:0;top:0" width="20.3" height="20.300" viewBox="0 0 20.3 20.300"><circle cx="11" cy="7" r="1.700" fill="#e8e8e8"/><path d="M8 11l2-3" stroke="#ddd" stroke-width="1"/><rect x="6" y="10.800" width="8" height="1.200" fill="#444"/></svg><div class="abs" style="left:1.500px;bottom:1.500px;width:6px;height:.9px;background:#fff;opacity:.55"></div><div class="abs" style="left:1.500px;bottom:3.200px;width:10px;height:.9px;background:#fff;opacity:.5"></div></div>
<div class="abs" style="left:124.6px;top:34.7px;width:20.7px;height:19.800px;background:#e2592a;overflow:hidden"><svg style="left:0;top:0" width="20.3" height="20.300" viewBox="0 0 20.3 20.300"><rect x="6" y="4.600" width="8" height="7" rx=".8" fill="#fff"/><text x="7.600" y="10.400" font-size="5.600" font-weight="bold" fill="#e2592a" font-family="Liberation Sans,sans-serif">O</text><rect x="11" y="3.600" width="3.600" height="3" fill="#f8c060"/></svg><div class="abs" style="left:1.500px;bottom:1.500px;width:6px;height:.9px;background:#fff;opacity:.55"></div><div class="abs" style="left:1.500px;bottom:3.200px;width:10px;height:.9px;background:#fff;opacity:.5"></div></div>
<div class="abs" style="left:146.5px;top:34.7px;width:20.7px;height:19.800px;background:#2466c8;overflow:hidden"><svg style="left:0;top:0" width="20.3" height="20.300" viewBox="0 0 20.3 20.300"><rect x="6" y="4.800" width="8.600" height="6.600" rx=".6" fill="#fff"/><rect x="7.400" y="6" width="4" height="3.600" fill="#2a5aa8"/><rect x="11" y="4" width="3.600" height="3" fill="#9ac0f0"/></svg><div class="abs" style="left:1.500px;bottom:1.500px;width:6px;height:.9px;background:#fff;opacity:.55"></div><div class="abs" style="left:1.500px;bottom:3.200px;width:10px;height:.9px;background:#fff;opacity:.5"></div></div>
<div class="abs" style="left:124.6px;top:55.8px;width:20.7px;height:19.800px;background:#2a8a3a;overflow:hidden"><svg style="left:0;top:0" width="20.3" height="20.300" viewBox="0 0 20.3 20.300"><rect x="6" y="4.600" width="8" height="7" rx=".8" fill="#fff"/><text x="7.600" y="10.400" font-size="5.600" font-weight="bold" fill="#2a8a3a" font-family="Liberation Sans,sans-serif">X</text><rect x="11" y="3.600" width="3.600" height="3" fill="#d8f0d8"/></svg><div class="abs" style="left:1.500px;bottom:1.500px;width:6px;height:.9px;background:#fff;opacity:.55"></div><div class="abs" style="left:1.500px;bottom:3.200px;width:10px;height:.9px;background:#fff;opacity:.5"></div></div>
<div class="abs" style="left:146.5px;top:55.8px;width:20.7px;height:19.800px;background:#e2592a;overflow:hidden"><svg style="left:0;top:0" width="20.3" height="20.300" viewBox="0 0 20.3 20.300"><rect x="6" y="4.600" width="8" height="7" rx=".8" fill="#fff"/><text x="7.800" y="10.400" font-size="5.600" font-weight="bold" fill="#e2592a" font-family="Liberation Sans,sans-serif">P</text><rect x="11" y="3.600" width="3.600" height="3" fill="#f8c8a0"/></svg><div class="abs" style="left:1.500px;bottom:1.500px;width:6px;height:.9px;background:#fff;opacity:.55"></div><div class="abs" style="left:1.500px;bottom:3.200px;width:10px;height:.9px;background:#fff;opacity:.5"></div></div>
<div class="abs" style="left:124.6px;top:77.0px;width:20.7px;height:19.800px;background:#4b4b4b;overflow:hidden"><svg style="left:0;top:0" width="20.3" height="20.300" viewBox="0 0 20.3 20.300"><circle cx="10.200" cy="8.800" r="4.600" fill="#e8c020"/><path d="M10.200 8.800L6.200 6.500A4.600 4.600 0 0 1 14.200 6.500z" fill="#e04030"/><path d="M10.200 8.800L6.200 6.500A4.600 4.600 0 0 0 10.200 13.400z" fill="#3aa040"/><circle cx="10.200" cy="8.800" r="2" fill="#fff"/><circle cx="10.200" cy="8.800" r="1.500" fill="#3a80e8"/></svg><div class="abs" style="left:1.500px;bottom:1.500px;width:6px;height:.9px;background:#fff;opacity:.55"></div><div class="abs" style="left:1.500px;bottom:3.200px;width:10px;height:.9px;background:#fff;opacity:.5"></div></div>
<div class="abs" style="left:146.5px;top:77.0px;width:20.7px;height:19.800px;background:#e2592a;overflow:hidden"><svg style="left:0;top:0" width="20.3" height="20.300" viewBox="0 0 20.3 20.300"><rect x="6" y="4.600" width="8" height="7.400" rx=".8" fill="#f8c060"/><path d="M9 6.600l3 1.700-3 1.700z" fill="#fff"/></svg><div class="abs" style="left:1.500px;bottom:1.500px;width:6px;height:.9px;background:#fff;opacity:.55"></div><div class="abs" style="left:1.500px;bottom:3.200px;width:10px;height:.9px;background:#fff;opacity:.5"></div></div>
<div class="abs" style="left:124.6px;top:98.1px;width:20.7px;height:19.800px;background:#1a9fb6;overflow:hidden"><svg style="left:0;top:0" width="20.3" height="20.300" viewBox="0 0 20.3 20.300"><path d="M5.600 5.600h3.600l.8 1h4.800v5.800H5.600z" fill="#f8d060"/><rect x="7" y="7.400" width="6" height="3.400" fill="#fff" opacity=".8"/></svg><div class="abs" style="left:1.500px;bottom:1.500px;width:6px;height:.9px;background:#fff;opacity:.55"></div><div class="abs" style="left:1.500px;bottom:3.200px;width:10px;height:.9px;background:#fff;opacity:.5"></div></div>
<div class="abs" style="left:176.7px;top:34.7px;width:20.7px;height:19.800px;background:#1a97a8;overflow:hidden"><svg style="left:0;top:0" width="20.3" height="20.300" viewBox="0 0 20.3 20.300"><circle cx="9" cy="7.600" r="2.600" fill="none" stroke="#fff" stroke-width="1.400"/><path d="M11 9.600l2.600 2.400" stroke="#fff" stroke-width="1.400"/><circle cx="13.400" cy="8" r="1.400" fill="none" stroke="#fff" stroke-width=".7"/></svg><div class="abs" style="left:1.500px;bottom:1.500px;width:6px;height:.9px;background:#fff;opacity:.55"></div><div class="abs" style="left:1.500px;bottom:3.200px;width:10px;height:.9px;background:#fff;opacity:.5"></div></div>
<div class="abs" style="left:198.6px;top:34.7px;width:20.7px;height:19.800px;background:#2466c8;overflow:hidden"><svg style="left:0;top:0" width="20.3" height="20.300" viewBox="0 0 20.3 20.300"><rect x="5.600" y="4.800" width="9" height="6" fill="#9ac8f8" stroke="#fff" stroke-width=".8"/><rect x="8.600" y="11" width="3" height="1.200" fill="#fff"/></svg><div class="abs" style="left:1.500px;bottom:1.500px;width:6px;height:.9px;background:#fff;opacity:.55"></div><div class="abs" style="left:1.500px;bottom:3.200px;width:10px;height:.9px;background:#fff;opacity:.5"></div></div>
<div class="abs" style="left:220.5px;top:34.7px;width:20.7px;height:19.800px;background:#e2592a;overflow:hidden"><svg style="left:0;top:0" width="20.3" height="20.300" viewBox="0 0 20.3 20.300"><circle cx="10.200" cy="7.200" r="2.600" fill="#f8d8a0"/><path d="M6.800 12.800q0-3.400 3.400-3.400t3.400 3.400z" fill="#f8e8c0"/><rect x="8" y="4" width="4.400" height="1.400" fill="#f0f0f0"/></svg><div class="abs" style="left:1.500px;bottom:1.500px;width:6px;height:.9px;background:#fff;opacity:.55"></div><div class="abs" style="left:1.500px;bottom:3.200px;width:10px;height:.9px;background:#fff;opacity:.5"></div></div>
<div class="abs" style="left:176.7px;top:55.8px;width:20.7px;height:19.800px;background:#6a6a6a;overflow:hidden"><svg style="left:0;top:0" width="20.3" height="20.300" viewBox="0 0 20.3 20.300"><path d="M5.600 6.400l8.400-1.400v5.600l-8.400.6z" fill="#111"/></svg><div class="abs" style="left:1.500px;bottom:1.500px;width:6px;height:.9px;background:#fff;opacity:.55"></div><div class="abs" style="left:1.500px;bottom:3.200px;width:10px;height:.9px;background:#fff;opacity:.5"></div></div>
<div class="abs" style="left:198.6px;top:55.8px;width:20.7px;height:19.800px;background:#a21a1a;overflow:hidden"><svg style="left:0;top:0" width="20.3" height="20.300" viewBox="0 0 20.3 20.300"><circle cx="10.200" cy="8" r="3.400" fill="#f0e8e0"/><circle cx="10.200" cy="8" r="1.800" fill="#c8a0a0"/></svg><div class="abs" style="left:1.500px;bottom:1.500px;width:6px;height:.9px;background:#fff;opacity:.55"></div><div class="abs" style="left:1.500px;bottom:3.200px;width:10px;height:.9px;background:#fff;opacity:.5"></div></div>
<div class="abs" style="left:220.5px;top:55.8px;width:42.6px;height:19.800px;background:#26a6e2;overflow:hidden"><svg style="left:0;top:0" width="41.6" height="20.300" viewBox="0 0 41.6 20.300"><path d="M6 6.500l4.600-2.300 4.600 2.300v5l-4.600 2.400L6 11.500z" fill="#fff"/><path d="M6 6.500l4.600 2.300 4.600-2.300M10.600 8.800v5" stroke="#26a6e2" stroke-width=".7" fill="none"/><path d="M8.200 5.400l4.600 2.300M13 5.400l-4.600 2.300" stroke="#26a6e2" stroke-width=".6"/><text x="19.500" y="11.800" font-size="6.200" fill="#7fd4f8" font-family="Liberation Sans,sans-serif">toolbox</text></svg><div class="abs" style="left:1.500px;bottom:1.500px;width:5px;height:.9px;background:#fff;opacity:.55"></div></div>
<div class="abs" style="left:176.7px;top:77.0px;width:20.7px;height:19.800px;background:#2e78e2;overflow:hidden"><svg style="left:0;top:0" width="20.3" height="20.300" viewBox="0 0 20.3 20.300"><rect x="6" y="5" width="7" height="5" fill="#e8f0fc" stroke="#fff" stroke-width=".6"/><rect x="8" y="10.200" width="5" height="2.400" fill="#c8d8f0"/></svg><div class="abs" style="left:1.500px;bottom:1.500px;width:6px;height:.9px;background:#fff;opacity:.55"></div><div class="abs" style="left:1.500px;bottom:3.200px;width:10px;height:.9px;background:#fff;opacity:.5"></div></div>
<div class="abs" style="left:198.6px;top:77.0px;width:20.7px;height:19.800px;background:#2e78e2;overflow:hidden"><svg style="left:0;top:0" width="20.3" height="20.300" viewBox="0 0 20.3 20.300"><rect x="6.600" y="4.800" width="7" height="5" fill="#e8f0fc" stroke="#fff" stroke-width=".6"/><rect x="5.600" y="10" width="6" height="2.400" fill="#c8d8f0"/></svg><div class="abs" style="left:1.500px;bottom:1.500px;width:6px;height:.9px;background:#fff;opacity:.55"></div><div class="abs" style="left:1.500px;bottom:3.200px;width:10px;height:.9px;background:#fff;opacity:.5"></div></div>
<div class="abs" style="left:220.5px;top:77.0px;width:42.6px;height:19.800px;background:#101c48;overflow:hidden"><svg style="left:0;top:0" width="41.6" height="20.300" viewBox="0 0 41.6 20.300"><rect width="41.600" height="20.300" fill="#0e1a44"/><rect y="7" width="41.600" height="6" fill="#2a4a9c" opacity=".7"/><rect x="3.600" y="6" width="13" height="8.400" fill="#f4f4f4"/><rect x="16.600" y="6" width="22" height="8.400" fill="#c01820"/><text x="4.200" y="12.800" font-size="7.200" font-weight="bold" fill="#111" font-family="Liberation Sans,sans-serif" letter-spacing="-.4">sky</text><text x="17.400" y="12.800" font-size="7" font-weight="bold" fill="#fff" font-family="Liberation Sans,sans-serif" letter-spacing="-.3">NEWS</text></svg><div class="abs" style="left:1.500px;bottom:1.500px;width:5px;height:.9px;background:#fff;opacity:.55"></div></div>
<div class="abs" style="left:176.7px;top:98.1px;width:20.7px;height:19.800px;background:#2466c8;overflow:hidden"><svg style="left:0;top:0" width="20.3" height="20.300" viewBox="0 0 20.3 20.300"><rect x="6.400" y="4.800" width="7" height="5" fill="#e8f0fc" stroke="#fff" stroke-width=".6"/><rect x="7" y="10.200" width="6" height="2.200" fill="#c8d8f0"/></svg><div class="abs" style="left:1.500px;bottom:1.500px;width:6px;height:.9px;background:#fff;opacity:.55"></div><div class="abs" style="left:1.500px;bottom:3.200px;width:10px;height:.9px;background:#fff;opacity:.5"></div></div>
<div class="abs" style="left:198.6px;top:98.1px;width:20.7px;height:19.800px;background:#2466c8;overflow:hidden"><svg style="left:0;top:0" width="20.3" height="20.300" viewBox="0 0 20.3 20.300"><rect x="6.400" y="4.800" width="7" height="5" fill="#e8f0fc" stroke="#fff" stroke-width=".6"/><rect x="7" y="10.200" width="6" height="2.200" fill="#a8b8d0"/></svg><div class="abs" style="left:1.500px;bottom:1.500px;width:6px;height:.9px;background:#fff;opacity:.55"></div><div class="abs" style="left:1.500px;bottom:3.200px;width:10px;height:.9px;background:#fff;opacity:.5"></div></div>
<div class="abs" style="left:220.5px;top:98.1px;width:42.6px;height:19.800px;background:#f8f8f8;overflow:hidden"><svg style="left:0;top:0" width="41.6" height="20.300" viewBox="0 0 41.6 20.300"><path d="M28 0h13.600v12z" fill="#2a9ae0"/><text x="5.500" y="7" font-size="4.200" fill="#444" font-family="Liberation Sans,sans-serif">news</text><text x="5" y="14.800" font-size="8" font-weight="bold" fill="#222" font-family="Liberation Sans,sans-serif" letter-spacing="-.2">BENTO</text><rect x="35" y="2" width="4" height="3" fill="none" stroke="#fff" stroke-width=".6"/></svg><div class="abs" style="left:1.500px;bottom:1.500px;width:5px;height:.9px;background:#fff;opacity:.55"></div></div>
<div class="abs" style="left:176.7px;top:119.3px;width:20.7px;height:19.800px;background:#2466c8;overflow:hidden"><svg style="left:0;top:0" width="20.3" height="20.300" viewBox="0 0 20.3 20.300"><path d="M6 8l6-3 3 2-6 3z" fill="#e8f0fc"/><rect x="6.400" y="9.600" width="6" height="2.600" fill="#c8d8f0"/></svg><div class="abs" style="left:1.500px;bottom:1.500px;width:6px;height:.9px;background:#fff;opacity:.55"></div><div class="abs" style="left:1.500px;bottom:3.200px;width:10px;height:.9px;background:#fff;opacity:.5"></div></div>
<div class="abs" style="left:198.6px;top:119.3px;width:20.7px;height:19.800px;background:#a21a1a;overflow:hidden"><svg style="left:0;top:0" width="20.3" height="20.300" viewBox="0 0 20.3 20.300"><circle cx="10.200" cy="8.200" r="3.800" fill="#3a7ad8"/><circle cx="8.800" cy="7" r="1.400" fill="#e8c020"/><circle cx="11.600" cy="7.400" r="1.400" fill="#e04030"/><circle cx="10" cy="10" r="1.400" fill="#3aa040"/></svg><div class="abs" style="left:1.500px;bottom:1.500px;width:6px;height:.9px;background:#fff;opacity:.55"></div><div class="abs" style="left:1.500px;bottom:3.200px;width:10px;height:.9px;background:#fff;opacity:.5"></div></div>
<div class="abs" style="left:220.5px;top:119.3px;width:42.6px;height:19.800px;background:#c0224c;overflow:hidden"><svg style="left:0;top:0" width="41.6" height="20.300" viewBox="0 0 41.6 20.300"><path d="M17.400 11l1.800-2.400 1.800 1.600 1.600-3.800 2 5" fill="none" stroke="#fff" stroke-width="1.100"/><path d="M16 9.600l2-1.200M24 12.400l2-1" stroke="#fff" stroke-width="1"/></svg><div class="abs" style="left:1.500px;bottom:1.500px;width:5px;height:.9px;background:#fff;opacity:.55"></div></div>
<div class="abs" style="left:176.7px;top:140.4px;width:20.7px;height:19.800px;background:#d21f1f;overflow:hidden"><svg style="left:0;top:0" width="20.3" height="20.300" viewBox="0 0 20.3 20.300"><text x="1.800" y="13" font-size="7.600" font-weight="bold" fill="#fff" font-family="Liberation Sans,sans-serif" letter-spacing="-.5">c|net</text></svg><div class="abs" style="left:1.500px;bottom:1.500px;width:6px;height:.9px;background:#fff;opacity:.55"></div></div>
<div class="abs" style="left:198.6px;top:140.4px;width:20.7px;height:19.800px;background:#111;overflow:hidden"><svg style="left:0;top:0" width="20.3" height="20.300" viewBox="0 0 20.3 20.300"><rect x="7.600" y="1.600" width="4.600" height="6.400" fill="none" stroke="#f4c010" stroke-width="1.100"/><text x="1.400" y="12.400" font-size="3.200" font-weight="bold" fill="#fff" font-family="Liberation Sans,sans-serif" letter-spacing="-.15">NATIONAL</text><text x="1" y="15.600" font-size="3" font-weight="bold" fill="#fff" font-family="Liberation Sans,sans-serif" letter-spacing="-.2">GEOGRAPHIC</text></svg><div class="abs" style="left:1.500px;bottom:1.500px;width:6px;height:.9px;background:#fff;opacity:.55"></div></div>
<div class="abs" style="left:220.5px;top:140.4px;width:42.6px;height:19.800px;background:#2a9a2a;overflow:hidden"><svg style="left:0;top:0" width="41.6" height="20.300" viewBox="0 0 41.6 20.300"><g stroke="#222" stroke-width=".3"><rect x="9" y="5" width="7" height="10" rx=".8" fill="#fff" transform="rotate(-18 12.500 10)"/><rect x="14" y="3.600" width="7" height="10" rx=".8" fill="#fff" transform="rotate(-6 17.500 8.600)"/><rect x="19.500" y="3.600" width="7" height="10" rx=".8" fill="#fff" transform="rotate(6 23 8.600)"/><rect x="24.600" y="5" width="7" height="10" rx=".8" fill="#fff" transform="rotate(18 28 10)"/></g><g font-size="5.600" font-family="DejaVu Sans,sans-serif"><text x="9.600" y="12.600" fill="#111">♣</text><text x="15.400" y="11" fill="#d02020">♦</text><text x="21" y="11" fill="#111">♠</text><text x="26" y="12.600" fill="#d02020">♥</text></g></svg><div class="abs" style="left:1.500px;bottom:1.500px;width:5px;height:.9px;background:#fff;opacity:.55"></div></div>
<div class="abs" style="left:272.9px;top:34.7px;width:20.7px;height:19.800px;background:#e2592a;overflow:hidden"><svg style="left:0;top:0" width="20.3" height="20.300" viewBox="0 0 20.3 20.300"><rect x="6.800" y="3.800" width="6.800" height="8.800" fill="#fff"/><text x="8.200" y="11" font-size="7" font-weight="bold" fill="#c82a2a" font-family="Liberation Sans,sans-serif">?</text></svg><div class="abs" style="left:1.500px;bottom:1.500px;width:6px;height:.9px;background:#fff;opacity:.55"></div></div>
</div>
<div class="abs bar">
<svg style="left:4px;top:1.500px" width="15" height="13" viewBox="0 0 15 13"><rect x=".7" y=".7" width="12.400" height="8.800" rx=".6" fill="#fff" stroke="#2e6db4" stroke-width="1.200"/><path d="M6.900 9.600v1.700M3.400 11.800h7" stroke="#2e6db4" stroke-width="1.100"/></svg>
<div class="abs" style="left:19px;top:1.500px;width:1px;height:10px;background:#667"></div>
<div class="abs" style="left:20.3px;top:3.0px;font-size:5.8px;line-height:10px;white-space:nowrap;transform-origin:0 0;transform:scaleX(0.922);">INVH454</div>
<svg style="left:47.500px;top:2px" width="8" height="11" viewBox="0 0 8 11"><rect x=".6" y=".4" width="6" height="9" fill="#d4d8de" stroke="#9aa0a8" stroke-width=".5"/><rect x="1.600" y="2.400" width="4" height="4.400" fill="#4a78c0"/><rect x="1.600" y="1.200" width="4" height=".7" fill="#889"/></svg>
<svg style="left:56.500px;top:1px" width="10" height="13" viewBox="0 0 10 13"><rect x=".6" y=".6" width="7.600" height="7" fill="#2e6db4"/><rect x="1.600" y="1.600" width="5.600" height="4.600" fill="#5a92d8"/><rect x="2.600" y="8" width="3.600" height="1.600" fill="#2e6db4"/><rect x="5" y="6" width="4" height="5.400" fill="#f4f6f8" stroke="#2e6db4" stroke-width=".8"/></svg>
<div class="abs" style="left:66.0px;top:3.0px;font-size:5.8px;line-height:10px;white-space:nowrap;transform-origin:0 0;transform:scaleX(0.886);">PCIAJK</div>
<div class="abs" style="left:265.7px;top:3.0px;font-size:7.2px;line-height:10px;white-space:nowrap;transform-origin:0 0;transform:scaleX(0.936);">Windows 8.1 x64</div>
<svg style="left:321.300px;top:.700px" width="13" height="14" viewBox="0 0 13 14"><path d="M0 1.600l5-.8v4.700H0zM5.700.7L12 0v5.500H5.700zM0 6.200h5v4.700l-5-.8zM5.700 6.200H12v5.500l-6.300-.9z" fill="#1cb4f2"/><text x="4.200" y="14" font-size="7" font-weight="bold" fill="#222" font-family="Liberation Sans,sans-serif" letter-spacing="-.3">64</text></svg>
</div></div>
<div id="status" class="abs"><div class="abs" style="left:1.6px;top:0.0px;font-size:6.8px;line-height:10px;white-space:nowrap;transform-origin:0 0;transform:scaleX(0.916);">Ready</div><div class="abs" style="left:48.1px;top:0.0px;font-size:6.8px;line-height:10px;white-space:nowrap;transform-origin:0 0;transform:scaleX(0.959);">Connections : 8</div><div class="abs" style="left:122.5px;top:0.0px;font-size:6.8px;line-height:10px;white-space:nowrap;transform-origin:0 0;transform:scaleX(0.934);">8 Clients</div><div class="abs" style="left:1009.4px;top:0.0px;font-size:6.8px;line-height:10px;white-space:nowrap;transform-origin:0 0;transform:scaleX(0.938);">Standard</div><div class="abs" style="left:45.5px;top:1px;width:1px;height:9px;background:#9db8dc"></div><div class="abs" style="left:120px;top:1px;width:1px;height:9px;background:#9db8dc"></div><div class="abs" style="left:1006.5px;top:1px;width:1px;height:9px;background:#9db8dc"></div><div class="abs" style="left:1064.5px;top:4px;width:3.4px;height:3.4px;border-radius:2px;background:#2b58a8;box-shadow:0 0 0 .6px #9ab"></div></div>
<div class="abs" style="left:8px;top:581.5px;width:14px;height:8px;border:1px solid #5a8ad0;border-radius:7px"></div>
</body>
</html>
